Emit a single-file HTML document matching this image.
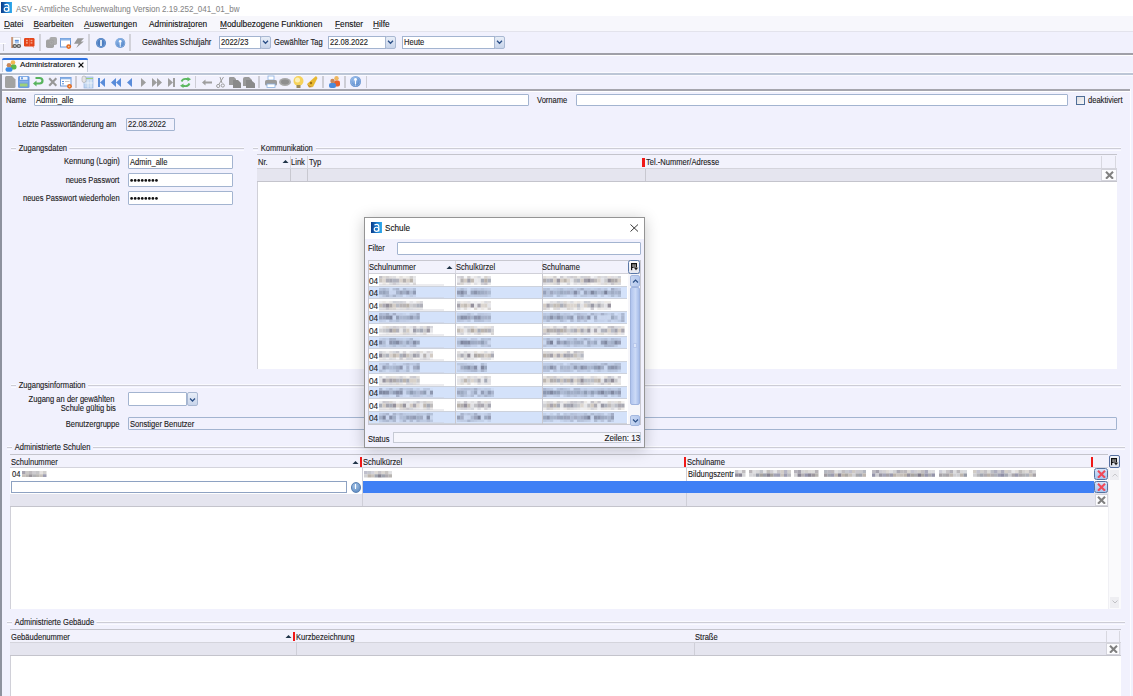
<!DOCTYPE html><html><head><meta charset="utf-8"><style>
html,body{margin:0;padding:0}
body{width:1133px;height:696px;overflow:hidden;position:relative;background:#F1F1FD;font-family:"Liberation Sans",sans-serif;font-size:7.6px;color:#1b1b1b}
.a{position:absolute;box-sizing:border-box}
.t{white-space:nowrap;font-size:8.5px;transform:scaleX(0.89);transform-origin:0 50%;-webkit-text-stroke-width:0.12px}
.r{transform-origin:100% 50%}
.n{transform:none}
.u{text-decoration:underline;text-decoration-color:#666;text-underline-offset:1.2px;text-decoration-thickness:0.8px}
</style></head><body>
<div class="a" style="left:0px;top:0px;width:1133px;height:16px;background:#fff"></div>
<svg class="a" style="left:1px;top:2.2px" width="11" height="11" viewBox="0 0 11 11"><defs><linearGradient id="ag1" x1="0" x2="1" y1="0" y2="0"><stop offset="0" stop-color="#0A3A88"/><stop offset="0.5" stop-color="#1878CC"/><stop offset="1" stop-color="#34AEEE"/></linearGradient></defs><rect width="11" height="11" fill="url(#ag1)"/><path d="M3.4 2.9 Q4.6 2.3 5.9 2.3 Q7.8 2.3 7.8 4.4 V9.6" stroke="#fff" stroke-width="1.15" fill="none"/><ellipse cx="5.5" cy="7.3" rx="2.25" ry="2.05" stroke="#fff" stroke-width="1.15" fill="none"/></svg>
<div class="a t" style="left:16px;top:1.4px;height:16px;line-height:16px;font-size:9.2px;color:#858585;transform:scaleX(0.875);-webkit-text-stroke-width:0.05px">ASV - Amtliche Schulverwaltung Version 2.19.252_041_01_bw</div>
<div class="a" style="left:0px;top:16px;width:1133px;height:15px;background:#F7F7FC"></div>
<div class="a" style="left:0px;top:31px;width:1133px;height:1px;background:#E3E3EC"></div>
<div class="a t" style="left:4px;top:17.2px;height:14px;line-height:14px;font-size:8.3px;color:#111;transform:none"><span class=u>D</span>atei</div>
<div class="a t" style="left:33.5px;top:17.2px;height:14px;line-height:14px;font-size:8.3px;color:#111;transform:none"><span class=u>B</span>earbeiten</div>
<div class="a t" style="left:84px;top:17.2px;height:14px;line-height:14px;font-size:8.3px;color:#111;transform:none"><span class=u>A</span>uswertungen</div>
<div class="a t" style="left:149px;top:17.2px;height:14px;line-height:14px;font-size:8.3px;color:#111;transform:none">Administra<span class=u>t</span>oren</div>
<div class="a t" style="left:220px;top:17.2px;height:14px;line-height:14px;font-size:8.3px;color:#111;transform:none"><span class=u>M</span>odulbezogene Funktionen</div>
<div class="a t" style="left:335px;top:17.2px;height:14px;line-height:14px;font-size:8.3px;color:#111;transform:none"><span class=u>F</span>enster</div>
<div class="a t" style="left:373px;top:17.2px;height:14px;line-height:14px;font-size:8.3px;color:#111;transform:none"><span class=u>H</span>ilfe</div>
<div class="a" style="left:0px;top:53.2px;width:1133px;height:1.6px;background:#A0A0A8"></div>
<div class="a" style="left:0px;top:54.8px;width:1133px;height:1.2px;background:#fff"></div>
<div class="a" style="left:39px;top:34px;width:2px;height:17px;background:#D2D2DA"></div>
<div class="a" style="left:88px;top:34px;width:2px;height:17px;background:#D2D2DA"></div>
<div class="a" style="left:129px;top:34px;width:2px;height:17px;background:#D2D2DA"></div>
<div class="a" style="left:0px;top:43px;width:6px;height:1px;background:#fff"></div>
<div class="a" style="left:3px;top:44px;width:1px;height:7px;background:#C8C8D0"></div>
<div class="a t" style="left:141.5px;top:36.2px;height:12px;line-height:12px;">Gewähltes Schuljahr</div>
<div class="a t" style="left:274px;top:36.2px;height:12px;line-height:12px;">Gewählter Tag</div>
<div class="a" style="left:218.5px;top:36px;width:42px;height:12.5px;background:#fff;border:1px solid #A3B4D0"></div>
<div class="a t" style="left:220.5px;top:36.2px;height:12.5px;line-height:12.5px;">2022/23</div>
<div class="a" style="left:259.5px;top:36px;width:11px;height:12.5px;background:linear-gradient(#E8EEF8,#C8D4EA);border:1px solid #A9B8D2;border-radius:2px"></div>
<svg class="a" style="left:261.5px;top:39px" width="7" height="6.5" viewBox="0 0 7 6"><path d="M1 1.5 L3.5 4 L6 1.5" stroke="#2b4f86" stroke-width="1.3" fill="none"/></svg>
<div class="a" style="left:328px;top:36px;width:58px;height:12.5px;background:#fff;border:1px solid #A3B4D0"></div>
<div class="a t" style="left:330px;top:36.2px;height:12.5px;line-height:12.5px;">22.08.2022</div>
<div class="a" style="left:385px;top:36px;width:11px;height:12.5px;background:linear-gradient(#E8EEF8,#C8D4EA);border:1px solid #A9B8D2;border-radius:2px"></div>
<svg class="a" style="left:387px;top:39px" width="7" height="6.5" viewBox="0 0 7 6"><path d="M1 1.5 L3.5 4 L6 1.5" stroke="#2b4f86" stroke-width="1.3" fill="none"/></svg>
<div class="a" style="left:401.5px;top:36px;width:93px;height:12.5px;background:#fff;border:1px solid #A3B4D0"></div>
<div class="a t" style="left:403.5px;top:36.2px;height:12.5px;line-height:12.5px;">Heute</div>
<div class="a" style="left:493.5px;top:36px;width:11px;height:12.5px;background:linear-gradient(#E8EEF8,#C8D4EA);border:1px solid #A9B8D2;border-radius:2px"></div>
<svg class="a" style="left:495.5px;top:39px" width="7" height="6.5" viewBox="0 0 7 6"><path d="M1 1.5 L3.5 4 L6 1.5" stroke="#2b4f86" stroke-width="1.3" fill="none"/></svg>
<div class="a" style="left:2px;top:58px;width:86px;height:16px;background:#FAFAFE;border:1px solid #C9D0DE;border-bottom:none;border-radius:3px 3px 0 0"></div>
<div class="a" style="left:2px;top:57.5px;width:86px;height:2px;background:#2F72E2;border-radius:3px 3px 0 0"></div>
<div class="a t" style="left:20px;top:58.2px;height:13px;line-height:13px;font-size:7.9px;color:#111;transform:none">Administratoren</div>
<svg class="a" style="left:77.8px;top:61.5px" width="6" height="6" viewBox="0 0 6 6"><path d="M0.6 0.6 L5.4 5.4 M5.4 0.6 L0.6 5.4" stroke="#111" stroke-width="1.3"/></svg>
<div class="a" style="left:0px;top:72px;width:1133px;height:1px;background:#FAFAFF"></div>
<div class="a" style="left:0px;top:73.1px;width:1133px;height:1.6px;background:#BCC6D6"></div>
<div class="a" style="left:0px;top:74.7px;width:1133px;height:1px;background:#FAFAFF"></div>
<div class="a" style="left:0px;top:89.1px;width:1130px;height:1.6px;background:#A6A6AE"></div>
<div class="a" style="left:0px;top:90.7px;width:1130px;height:1.3px;background:#fff"></div>
<div class="a" style="left:75px;top:76px;width:1.5px;height:12px;background:#CDCDD5"></div>
<div class="a" style="left:194.5px;top:76px;width:1.5px;height:12px;background:#CDCDD5"></div>
<div class="a" style="left:258px;top:76px;width:1.5px;height:12px;background:#CDCDD5"></div>
<div class="a" style="left:322px;top:76px;width:1.5px;height:12px;background:#CDCDD5"></div>
<div class="a" style="left:344px;top:76px;width:1.5px;height:12px;background:#CDCDD5"></div>
<div class="a" style="left:365.5px;top:76px;width:1.5px;height:12px;background:#CDCDD5"></div>
<div class="a" style="left:0px;top:74px;width:2px;height:622px;background:#8E929E"></div>
<div class="a" style="left:1129.5px;top:89px;width:1.2px;height:607px;background:#FCFCFF"></div>
<div class="a t" style="left:6px;top:94.2px;height:12px;line-height:12px;">Name</div>
<div class="a" style="left:34px;top:94px;width:494.5px;height:12px;background:#fff;border:1px solid #A3B4D0;border-radius:1px"></div>
<div class="a t" style="left:36px;top:94.2px;height:12px;line-height:12px;">Admin_alle</div>
<div class="a t" style="left:536.5px;top:94.2px;height:12px;line-height:12px;">Vorname</div>
<div class="a" style="left:576px;top:94px;width:491.5px;height:12px;background:#fff;border:1px solid #A3B4D0;border-radius:1px"></div>
<div class="a" style="left:1076px;top:96px;width:9px;height:9px;background:linear-gradient(135deg,#DCDCE0,#F6F6F8);border:1px solid #4F6E98"></div>
<div class="a t" style="left:1088px;top:94.2px;height:12px;line-height:12px;">deaktiviert</div>
<div class="a t" style="left:18px;top:118.2px;height:12px;line-height:12px;">Letzte Passwortänderung am</div>
<div class="a" style="left:125.5px;top:117.5px;width:49px;height:13px;background:#F1F1FD;border:1px solid #A3B4D0;border-radius:1px"></div>
<div class="a t" style="left:127.5px;top:117.7px;height:13px;line-height:13px;">22.08.2022</div>
<div class="a" style="left:11px;top:147.1px;width:233px;height:0.8px;background:#FAFAFF"></div>
<div class="a" style="left:11px;top:147.8px;width:233px;height:1.7px;background:#CDCDD5"></div>
<div class="a" style="left:11px;top:149.5px;width:233px;height:0.9px;background:#FAFAFF"></div>
<div class="a t" style="left:16px;top:142.4px;height:12px;line-height:12px;padding:0 3px;background:#F1F1FD">Zugangsdaten</div>
<div class="a" style="left:253px;top:147.1px;width:868px;height:0.8px;background:#FAFAFF"></div>
<div class="a" style="left:253px;top:147.8px;width:868px;height:1.7px;background:#CDCDD5"></div>
<div class="a" style="left:253px;top:149.5px;width:868px;height:0.9px;background:#FAFAFF"></div>
<div class="a t" style="left:257.5px;top:142.4px;height:12px;line-height:12px;padding:0 3px;background:#F1F1FD">Kommunikation</div>
<div class="a" style="left:11px;top:384.1px;width:1110px;height:0.8px;background:#FAFAFF"></div>
<div class="a" style="left:11px;top:384.8px;width:1110px;height:1.7px;background:#CDCDD5"></div>
<div class="a" style="left:11px;top:386.5px;width:1110px;height:0.9px;background:#FAFAFF"></div>
<div class="a t" style="left:16px;top:379.4px;height:12px;line-height:12px;padding:0 3px;background:#F1F1FD">Zugangsinformation</div>
<div class="a" style="left:6.5px;top:446.1px;width:1118.5px;height:0.8px;background:#FAFAFF"></div>
<div class="a" style="left:6.5px;top:446.8px;width:1118.5px;height:1.7px;background:#CDCDD5"></div>
<div class="a" style="left:6.5px;top:448.5px;width:1118.5px;height:0.9px;background:#FAFAFF"></div>
<div class="a t" style="left:11.5px;top:441.4px;height:12px;line-height:12px;padding:0 3px;background:#F1F1FD">Administrierte Schulen</div>
<div class="a" style="left:6.5px;top:621.1px;width:1118.5px;height:0.8px;background:#FAFAFF"></div>
<div class="a" style="left:6.5px;top:621.8px;width:1118.5px;height:1.7px;background:#CDCDD5"></div>
<div class="a" style="left:6.5px;top:623.5px;width:1118.5px;height:0.9px;background:#FAFAFF"></div>
<div class="a t" style="left:11.5px;top:616.4px;height:12px;line-height:12px;padding:0 3px;background:#F1F1FD">Administrierte Gebäude</div>
<div class="a t r" style="right:1013.5px;top:155.2px;height:13px;line-height:13px;text-align:right;">Kennung (Login)</div>
<div class="a" style="left:128px;top:154.5px;width:105px;height:14px;background:#fff;border:1px solid #A3B4D0;border-radius:1px"></div>
<div class="a t" style="left:130px;top:154.7px;height:14px;line-height:14px;">Admin_alle</div>
<div class="a t r" style="right:1013.5px;top:174.2px;height:13px;line-height:13px;text-align:right;">neues Passwort</div>
<div class="a" style="left:128px;top:173px;width:105px;height:13.5px;background:#fff;border:1px solid #A3B4D0;border-radius:1px"></div>
<svg class="a" style="left:130px;top:178px" width="30" height="5" viewBox="0 0 30 5"><circle cx="1.6" cy="2.4" r="1.35" fill="#111"/><circle cx="5.15" cy="2.4" r="1.35" fill="#111"/><circle cx="8.7" cy="2.4" r="1.35" fill="#111"/><circle cx="12.249999999999998" cy="2.4" r="1.35" fill="#111"/><circle cx="15.799999999999999" cy="2.4" r="1.35" fill="#111"/><circle cx="19.35" cy="2.4" r="1.35" fill="#111"/><circle cx="22.9" cy="2.4" r="1.35" fill="#111"/><circle cx="26.45" cy="2.4" r="1.35" fill="#111"/></svg>
<div class="a t r" style="right:1013.5px;top:192.2px;height:13px;line-height:13px;text-align:right;">neues Passwort wiederholen</div>
<div class="a" style="left:128px;top:191.3px;width:105px;height:13.3px;background:#fff;border:1px solid #A3B4D0;border-radius:1px"></div>
<svg class="a" style="left:130px;top:196px" width="30" height="5" viewBox="0 0 30 5"><circle cx="1.6" cy="2.4" r="1.35" fill="#111"/><circle cx="5.15" cy="2.4" r="1.35" fill="#111"/><circle cx="8.7" cy="2.4" r="1.35" fill="#111"/><circle cx="12.249999999999998" cy="2.4" r="1.35" fill="#111"/><circle cx="15.799999999999999" cy="2.4" r="1.35" fill="#111"/><circle cx="19.35" cy="2.4" r="1.35" fill="#111"/><circle cx="22.9" cy="2.4" r="1.35" fill="#111"/><circle cx="26.45" cy="2.4" r="1.35" fill="#111"/></svg>
<div class="a" style="left:257px;top:154px;width:860px;height:215px;background:#fff;border-left:1px solid #D0D0D8"></div>
<div class="a" style="left:257px;top:154px;width:860px;height:1px;background:#C4C4CC"></div>
<div class="a" style="left:257px;top:155px;width:860px;height:13px;background:#F2F2FC"></div>
<div class="a" style="left:257px;top:168px;width:860px;height:1px;background:#D4D4DC"></div>
<div class="a" style="left:257px;top:169px;width:860px;height:12px;background:#E5E5EF"></div>
<div class="a" style="left:257px;top:181px;width:860px;height:1px;background:#C4C4CC"></div>
<div class="a t" style="left:257.5px;top:155.9px;height:13px;line-height:13px;">Nr.</div>
<svg class="a" style="left:282px;top:159px" width="7" height="5" viewBox="0 0 7 5"><path d="M0.5 4 L3.5 1 L6.5 4Z" fill="#1f3347"/></svg>
<div class="a" style="left:290px;top:156px;width:1px;height:12px;background:#D8D8E0"></div>
<div class="a" style="left:290px;top:169px;width:1px;height:12px;background:#C8C8D0"></div>
<div class="a t" style="left:291px;top:155.9px;height:13px;line-height:13px;">Link</div>
<div class="a" style="left:307px;top:156px;width:1px;height:12px;background:#D8D8E0"></div>
<div class="a" style="left:307px;top:169px;width:1px;height:12px;background:#C8C8D0"></div>
<div class="a t" style="left:309px;top:155.9px;height:13px;line-height:13px;">Typ</div>
<div class="a" style="left:642px;top:157.5px;width:2.5px;height:9.5px;background:#F01818"></div>
<div class="a" style="left:645px;top:169px;width:1px;height:12px;background:#C8C8D0"></div>
<div class="a t" style="left:646px;top:155.9px;height:13px;line-height:13px;">Tel.-Nummer/Adresse</div>
<div class="a" style="left:1101px;top:156px;width:1px;height:12px;background:#D8D8E0"></div>
<div class="a" style="left:1115px;top:156px;width:1px;height:12px;background:#D8D8E0"></div>
<div class="a" style="left:1101px;top:169px;width:16px;height:12px;background:#FCFCFE;border:1px solid #D4D4DC"></div>
<svg class="a" style="left:1104.5px;top:170.75px" width="9" height="8.5" viewBox="0 0 9 8.5"><path d="M1 0.8 L8 7.7 M8 0.8 L1 7.7" stroke="#808080" stroke-width="2.1"/></svg>
<div class="a t r" style="right:1019px;top:392.7px;height:12px;line-height:12px;text-align:right;">Zugang an der gewählten</div>
<div class="a t r" style="right:1017px;top:401.7px;height:12px;line-height:12px;text-align:right;">Schule gültig bis</div>
<div class="a" style="left:128.4px;top:392px;width:59px;height:14px;background:#fff;border:1px solid #A3B4D0;border-radius:1px"></div>
<div class="a" style="left:187px;top:392px;width:11px;height:14px;background:linear-gradient(#E8EEF8,#C8D4EA);border:1px solid #A9B8D2;border-radius:2px"></div>
<svg class="a" style="left:188.8px;top:397px" width="7" height="6" viewBox="0 0 7 6"><path d="M1 1.5 L3.5 4 L6 1.5" stroke="#2b4f86" stroke-width="1.3" fill="none"/></svg>
<div class="a t r" style="right:1013.5px;top:418.2px;height:12.5px;line-height:12.5px;text-align:right;">Benutzergruppe</div>
<div class="a" style="left:128.4px;top:417px;width:988.5px;height:12.5px;background:#F1F1FD;border:1px solid #A3B4D0;border-radius:1px"></div>
<div class="a t" style="left:130.4px;top:417.8px;height:12.5px;line-height:12.5px;">Sonstiger Benutzer</div>
<div class="a" style="left:10px;top:454px;width:1098px;height:155px;background:#fff;border-left:1px solid #D0D0D8"></div>
<div class="a" style="left:10px;top:454px;width:1098px;height:1px;background:#C4C4CC"></div>
<div class="a" style="left:10px;top:455px;width:1098px;height:12px;background:#F2F2FC"></div>
<div class="a" style="left:10px;top:467px;width:1098px;height:1px;background:#D4D4DC"></div>
<div class="a" style="left:10px;top:468px;width:1098px;height:38px;background:#E5E5EF"></div>
<div class="a" style="left:10px;top:506px;width:1098px;height:1px;background:#C4C4CC"></div>
<div class="a" style="left:10px;top:468px;width:1098px;height:12.5px;background:#fff"></div>
<div class="a" style="left:10px;top:480.5px;width:353px;height:13px;background:#fff"></div>
<div class="a" style="left:1108px;top:468px;width:13px;height:141px;background:#FAFAFC;border-left:1px solid #F0F0F4"></div>
<div class="a t" style="left:11px;top:455.9px;height:12px;line-height:12px;">Schulnummer</div>
<svg class="a" style="left:351.5px;top:459.5px" width="7" height="5" viewBox="0 0 7 5"><path d="M0.5 4 L3.5 1 L6.5 4Z" fill="#1f3347"/></svg>
<div class="a" style="left:360px;top:457px;width:2.2px;height:9.5px;background:#F01818"></div>
<div class="a t" style="left:363px;top:455.9px;height:12px;line-height:12px;">Schulkürzel</div>
<div class="a" style="left:684px;top:457px;width:2.2px;height:9.5px;background:#F01818"></div>
<div class="a t" style="left:687px;top:455.9px;height:12px;line-height:12px;">Schulname</div>
<div class="a" style="left:1091px;top:457px;width:2px;height:9.5px;background:#F01818"></div>
<div class="a t" style="left:12px;top:468.2px;height:12px;line-height:12px;">04</div>
<div class="a t" style="left:687.5px;top:468.2px;height:12px;line-height:12px;">Bildungszentr</div>
<svg class="a" style="left:22px;top:470.5px" width="24.5" height="6.5" viewBox="0 0 24.5 6.5"><rect x="0.0" y="0.00" width="3.5" height="3.25" fill="#7C7888" opacity="0.68"/><rect x="3.5" y="0.00" width="3.5" height="3.25" fill="#A4A09C" opacity="0.58"/><rect x="7.0" y="0.00" width="3.5" height="3.25" fill="#99949A" opacity="0.64"/><rect x="10.5" y="0.00" width="3.5" height="3.25" fill="#99949A" opacity="0.48"/><rect x="14.0" y="0.00" width="3.5" height="3.25" fill="#A8A8AC" opacity="0.67"/><rect x="17.5" y="0.00" width="3.5" height="3.25" fill="#B8B0A8" opacity="0.36"/><rect x="21.0" y="0.00" width="3.5" height="3.25" fill="#A4A09C" opacity="0.50"/><rect x="0.0" y="3.25" width="3.5" height="3.25" fill="#B8B0A8" opacity="0.77"/><rect x="3.5" y="3.25" width="3.5" height="3.25" fill="#A4A09C" opacity="0.76"/><rect x="7.0" y="3.25" width="3.5" height="3.25" fill="#99949A" opacity="0.99"/><rect x="10.5" y="3.25" width="3.5" height="3.25" fill="#A8A8AC" opacity="0.89"/><rect x="14.0" y="3.25" width="3.5" height="3.25" fill="#A4A09C" opacity="0.76"/><rect x="17.5" y="3.25" width="3.5" height="3.25" fill="#B8B0A8" opacity="0.76"/><rect x="21.0" y="3.25" width="3.5" height="3.25" fill="#8888A0" opacity="0.82"/></svg>
<svg class="a" style="left:364px;top:471px" width="28.0" height="6.5" viewBox="0 0 28.0 6.5"><rect x="0.0" y="0.00" width="3.5" height="3.25" fill="#8888A0" opacity="0.54"/><rect x="3.5" y="0.00" width="3.5" height="3.25" fill="#9498A4" opacity="0.55"/><rect x="7.0" y="0.00" width="3.5" height="3.25" fill="#8888A0" opacity="0.39"/><rect x="10.5" y="0.00" width="3.5" height="3.25" fill="#B8B0A8" opacity="0.48"/><rect x="14.0" y="0.00" width="3.5" height="3.25" fill="#99949A" opacity="0.55"/><rect x="17.5" y="0.00" width="3.5" height="3.25" fill="#B8B0A8" opacity="0.52"/><rect x="21.0" y="0.00" width="3.5" height="3.25" fill="#A4A09C" opacity="0.62"/><rect x="24.5" y="0.00" width="3.5" height="3.25" fill="#C8C8CC" opacity="0.55"/><rect x="0.0" y="3.25" width="3.5" height="3.25" fill="#C8C8CC" opacity="0.84"/><rect x="3.5" y="3.25" width="3.5" height="3.25" fill="#B8B0A8" opacity="0.95"/><rect x="7.0" y="3.25" width="3.5" height="3.25" fill="#B8B0A8" opacity="0.77"/><rect x="10.5" y="3.25" width="3.5" height="3.25" fill="#9498A4" opacity="0.88"/><rect x="14.0" y="3.25" width="3.5" height="3.25" fill="#7C7888" opacity="0.93"/><rect x="17.5" y="3.25" width="3.5" height="3.25" fill="#9498A4" opacity="0.90"/><rect x="21.0" y="3.25" width="3.5" height="3.25" fill="#99949A" opacity="0.78"/><rect x="24.5" y="3.25" width="3.5" height="3.25" fill="#A4A09C" opacity="0.79"/></svg>
<svg class="a" style="left:735px;top:470px" width="10.5" height="6.8" viewBox="0 0 10.5 6.8"><rect x="0.0" y="0.00" width="3.5" height="3.40" fill="#7C7888" opacity="0.40"/><rect x="3.5" y="0.00" width="3.5" height="3.40" fill="#C8C8CC" opacity="0.50"/><rect x="7.0" y="0.00" width="3.5" height="3.40" fill="#99949A" opacity="0.62"/><rect x="0.0" y="3.40" width="3.5" height="3.40" fill="#7C7888" opacity="0.84"/><rect x="3.5" y="3.40" width="3.5" height="3.40" fill="#7C7888" opacity="0.90"/><rect x="7.0" y="3.40" width="3.5" height="3.40" fill="#C8C8CC" opacity="0.77"/></svg>
<svg class="a" style="left:749px;top:470px" width="42.0" height="6.8" viewBox="0 0 42.0 6.8"><rect x="0.0" y="0.00" width="3.5" height="3.40" fill="#99949A" opacity="0.68"/><rect x="3.5" y="0.00" width="3.5" height="3.40" fill="#C8C8CC" opacity="0.59"/><rect x="7.0" y="0.00" width="3.5" height="3.40" fill="#99949A" opacity="0.37"/><rect x="10.5" y="0.00" width="3.5" height="3.40" fill="#9498A4" opacity="0.58"/><rect x="14.0" y="0.00" width="3.5" height="3.40" fill="#C8C8CC" opacity="0.45"/><rect x="17.5" y="0.00" width="3.5" height="3.40" fill="#A4A09C" opacity="0.66"/><rect x="21.0" y="0.00" width="3.5" height="3.40" fill="#7C7888" opacity="0.36"/><rect x="24.5" y="0.00" width="3.5" height="3.40" fill="#C8C8CC" opacity="0.47"/><rect x="28.0" y="0.00" width="3.5" height="3.40" fill="#99949A" opacity="0.52"/><rect x="31.5" y="0.00" width="3.5" height="3.40" fill="#B8B0A8" opacity="0.62"/><rect x="35.0" y="0.00" width="3.5" height="3.40" fill="#8888A0" opacity="0.61"/><rect x="38.5" y="0.00" width="3.5" height="3.40" fill="#A4A09C" opacity="0.49"/><rect x="0.0" y="3.40" width="3.5" height="3.40" fill="#C8C8CC" opacity="0.77"/><rect x="3.5" y="3.40" width="3.5" height="3.40" fill="#C8C8CC" opacity="0.85"/><rect x="7.0" y="3.40" width="3.5" height="3.40" fill="#9498A4" opacity="0.97"/><rect x="10.5" y="3.40" width="3.5" height="3.40" fill="#A4A09C" opacity="0.97"/><rect x="14.0" y="3.40" width="3.5" height="3.40" fill="#9498A4" opacity="0.93"/><rect x="17.5" y="3.40" width="3.5" height="3.40" fill="#7C7888" opacity="0.92"/><rect x="21.0" y="3.40" width="3.5" height="3.40" fill="#A4A09C" opacity="0.99"/><rect x="24.5" y="3.40" width="3.5" height="3.40" fill="#8888A0" opacity="0.77"/><rect x="28.0" y="3.40" width="3.5" height="3.40" fill="#8888A0" opacity="0.81"/><rect x="31.5" y="3.40" width="3.5" height="3.40" fill="#B8B0A8" opacity="0.75"/><rect x="35.0" y="3.40" width="3.5" height="3.40" fill="#8888A0" opacity="0.82"/><rect x="38.5" y="3.40" width="3.5" height="3.40" fill="#A8A8AC" opacity="0.79"/></svg>
<svg class="a" style="left:794px;top:470px" width="24.5" height="6.8" viewBox="0 0 24.5 6.8"><rect x="0.0" y="0.00" width="3.5" height="3.40" fill="#7C7888" opacity="0.56"/><rect x="3.5" y="0.00" width="3.5" height="3.40" fill="#7C7888" opacity="0.68"/><rect x="7.0" y="0.00" width="3.5" height="3.40" fill="#A8A8AC" opacity="0.51"/><rect x="10.5" y="0.00" width="3.5" height="3.40" fill="#A4A09C" opacity="0.49"/><rect x="14.0" y="0.00" width="3.5" height="3.40" fill="#A4A09C" opacity="0.39"/><rect x="17.5" y="0.00" width="3.5" height="3.40" fill="#A4A09C" opacity="0.37"/><rect x="21.0" y="0.00" width="3.5" height="3.40" fill="#99949A" opacity="0.69"/><rect x="0.0" y="3.40" width="3.5" height="3.40" fill="#C8C8CC" opacity="0.79"/><rect x="3.5" y="3.40" width="3.5" height="3.40" fill="#7C7888" opacity="0.90"/><rect x="7.0" y="3.40" width="3.5" height="3.40" fill="#99949A" opacity="0.75"/><rect x="10.5" y="3.40" width="3.5" height="3.40" fill="#8888A0" opacity="0.88"/><rect x="14.0" y="3.40" width="3.5" height="3.40" fill="#7C7888" opacity="0.90"/><rect x="17.5" y="3.40" width="3.5" height="3.40" fill="#99949A" opacity="0.97"/><rect x="21.0" y="3.40" width="3.5" height="3.40" fill="#A4A09C" opacity="0.79"/></svg>
<svg class="a" style="left:824px;top:470px" width="42.0" height="6.8" viewBox="0 0 42.0 6.8"><rect x="0.0" y="0.00" width="3.5" height="3.40" fill="#9498A4" opacity="0.68"/><rect x="3.5" y="0.00" width="3.5" height="3.40" fill="#7C7888" opacity="0.52"/><rect x="7.0" y="0.00" width="3.5" height="3.40" fill="#99949A" opacity="0.65"/><rect x="10.5" y="0.00" width="3.5" height="3.40" fill="#C8C8CC" opacity="0.52"/><rect x="14.0" y="0.00" width="3.5" height="3.40" fill="#9498A4" opacity="0.38"/><rect x="17.5" y="0.00" width="3.5" height="3.40" fill="#99949A" opacity="0.61"/><rect x="21.0" y="0.00" width="3.5" height="3.40" fill="#9498A4" opacity="0.52"/><rect x="24.5" y="0.00" width="3.5" height="3.40" fill="#8888A0" opacity="0.53"/><rect x="28.0" y="0.00" width="3.5" height="3.40" fill="#B8B0A8" opacity="0.68"/><rect x="31.5" y="0.00" width="3.5" height="3.40" fill="#7C7888" opacity="0.40"/><rect x="35.0" y="0.00" width="3.5" height="3.40" fill="#A8A8AC" opacity="0.62"/><rect x="38.5" y="0.00" width="3.5" height="3.40" fill="#9498A4" opacity="0.69"/><rect x="0.0" y="3.40" width="3.5" height="3.40" fill="#99949A" opacity="0.92"/><rect x="3.5" y="3.40" width="3.5" height="3.40" fill="#9498A4" opacity="0.88"/><rect x="7.0" y="3.40" width="3.5" height="3.40" fill="#8888A0" opacity="0.84"/><rect x="10.5" y="3.40" width="3.5" height="3.40" fill="#B8B0A8" opacity="0.88"/><rect x="14.0" y="3.40" width="3.5" height="3.40" fill="#7C7888" opacity="0.91"/><rect x="17.5" y="3.40" width="3.5" height="3.40" fill="#B8B0A8" opacity="0.95"/><rect x="21.0" y="3.40" width="3.5" height="3.40" fill="#A4A09C" opacity="0.93"/><rect x="24.5" y="3.40" width="3.5" height="3.40" fill="#B8B0A8" opacity="0.80"/><rect x="28.0" y="3.40" width="3.5" height="3.40" fill="#C8C8CC" opacity="0.84"/><rect x="31.5" y="3.40" width="3.5" height="3.40" fill="#A8A8AC" opacity="1.00"/><rect x="35.0" y="3.40" width="3.5" height="3.40" fill="#9498A4" opacity="0.87"/><rect x="38.5" y="3.40" width="3.5" height="3.40" fill="#B8B0A8" opacity="0.92"/></svg>
<svg class="a" style="left:872px;top:470px" width="63.0" height="6.8" viewBox="0 0 63.0 6.8"><rect x="0.0" y="0.00" width="3.5" height="3.40" fill="#7C7888" opacity="0.51"/><rect x="3.5" y="0.00" width="3.5" height="3.40" fill="#7C7888" opacity="0.68"/><rect x="7.0" y="0.00" width="3.5" height="3.40" fill="#7C7888" opacity="0.38"/><rect x="10.5" y="0.00" width="3.5" height="3.40" fill="#99949A" opacity="0.43"/><rect x="14.0" y="0.00" width="3.5" height="3.40" fill="#B8B0A8" opacity="0.47"/><rect x="17.5" y="0.00" width="3.5" height="3.40" fill="#C8C8CC" opacity="0.57"/><rect x="21.0" y="0.00" width="3.5" height="3.40" fill="#A8A8AC" opacity="0.52"/><rect x="24.5" y="0.00" width="3.5" height="3.40" fill="#7C7888" opacity="0.63"/><rect x="28.0" y="0.00" width="3.5" height="3.40" fill="#99949A" opacity="0.64"/><rect x="31.5" y="0.00" width="3.5" height="3.40" fill="#99949A" opacity="0.67"/><rect x="35.0" y="0.00" width="3.5" height="3.40" fill="#B8B0A8" opacity="0.52"/><rect x="38.5" y="0.00" width="3.5" height="3.40" fill="#8888A0" opacity="0.50"/><rect x="42.0" y="0.00" width="3.5" height="3.40" fill="#7C7888" opacity="0.38"/><rect x="45.5" y="0.00" width="3.5" height="3.40" fill="#A4A09C" opacity="0.51"/><rect x="49.0" y="0.00" width="3.5" height="3.40" fill="#99949A" opacity="0.60"/><rect x="52.5" y="0.00" width="3.5" height="3.40" fill="#8888A0" opacity="0.70"/><rect x="56.0" y="0.00" width="3.5" height="3.40" fill="#A8A8AC" opacity="0.40"/><rect x="59.5" y="0.00" width="3.5" height="3.40" fill="#C8C8CC" opacity="0.63"/><rect x="0.0" y="3.40" width="3.5" height="3.40" fill="#8888A0" opacity="0.90"/><rect x="3.5" y="3.40" width="3.5" height="3.40" fill="#C8C8CC" opacity="0.91"/><rect x="7.0" y="3.40" width="3.5" height="3.40" fill="#7C7888" opacity="0.79"/><rect x="10.5" y="3.40" width="3.5" height="3.40" fill="#8888A0" opacity="0.76"/><rect x="14.0" y="3.40" width="3.5" height="3.40" fill="#99949A" opacity="0.88"/><rect x="17.5" y="3.40" width="3.5" height="3.40" fill="#8888A0" opacity="0.86"/><rect x="21.0" y="3.40" width="3.5" height="3.40" fill="#B8B0A8" opacity="0.96"/><rect x="24.5" y="3.40" width="3.5" height="3.40" fill="#B8B0A8" opacity="0.76"/><rect x="28.0" y="3.40" width="3.5" height="3.40" fill="#B8B0A8" opacity="0.82"/><rect x="31.5" y="3.40" width="3.5" height="3.40" fill="#B8B0A8" opacity="0.94"/><rect x="35.0" y="3.40" width="3.5" height="3.40" fill="#7C7888" opacity="0.81"/><rect x="38.5" y="3.40" width="3.5" height="3.40" fill="#A4A09C" opacity="0.96"/><rect x="42.0" y="3.40" width="3.5" height="3.40" fill="#A8A8AC" opacity="0.98"/><rect x="45.5" y="3.40" width="3.5" height="3.40" fill="#7C7888" opacity="0.97"/><rect x="49.0" y="3.40" width="3.5" height="3.40" fill="#A4A09C" opacity="0.96"/><rect x="52.5" y="3.40" width="3.5" height="3.40" fill="#8888A0" opacity="0.88"/><rect x="56.0" y="3.40" width="3.5" height="3.40" fill="#A8A8AC" opacity="0.97"/><rect x="59.5" y="3.40" width="3.5" height="3.40" fill="#8888A0" opacity="0.90"/></svg>
<svg class="a" style="left:939px;top:470px" width="28.0" height="6.8" viewBox="0 0 28.0 6.8"><rect x="0.0" y="0.00" width="3.5" height="3.40" fill="#8888A0" opacity="0.41"/><rect x="3.5" y="0.00" width="3.5" height="3.40" fill="#C8C8CC" opacity="0.57"/><rect x="7.0" y="0.00" width="3.5" height="3.40" fill="#99949A" opacity="0.54"/><rect x="10.5" y="0.00" width="3.5" height="3.40" fill="#7C7888" opacity="0.59"/><rect x="14.0" y="0.00" width="3.5" height="3.40" fill="#C8C8CC" opacity="0.62"/><rect x="17.5" y="0.00" width="3.5" height="3.40" fill="#99949A" opacity="0.66"/><rect x="21.0" y="0.00" width="3.5" height="3.40" fill="#A8A8AC" opacity="0.44"/><rect x="24.5" y="0.00" width="3.5" height="3.40" fill="#9498A4" opacity="0.36"/><rect x="0.0" y="3.40" width="3.5" height="3.40" fill="#99949A" opacity="0.88"/><rect x="3.5" y="3.40" width="3.5" height="3.40" fill="#A8A8AC" opacity="0.94"/><rect x="7.0" y="3.40" width="3.5" height="3.40" fill="#99949A" opacity="0.86"/><rect x="10.5" y="3.40" width="3.5" height="3.40" fill="#B8B0A8" opacity="0.92"/><rect x="14.0" y="3.40" width="3.5" height="3.40" fill="#C8C8CC" opacity="0.88"/><rect x="17.5" y="3.40" width="3.5" height="3.40" fill="#C8C8CC" opacity="0.88"/><rect x="21.0" y="3.40" width="3.5" height="3.40" fill="#B8B0A8" opacity="0.92"/><rect x="24.5" y="3.40" width="3.5" height="3.40" fill="#9498A4" opacity="0.98"/></svg>
<svg class="a" style="left:973px;top:470px" width="63.0" height="6.8" viewBox="0 0 63.0 6.8"><rect x="0.0" y="0.00" width="3.5" height="3.40" fill="#B8B0A8" opacity="0.64"/><rect x="3.5" y="0.00" width="3.5" height="3.40" fill="#8888A0" opacity="0.50"/><rect x="7.0" y="0.00" width="3.5" height="3.40" fill="#A4A09C" opacity="0.50"/><rect x="10.5" y="0.00" width="3.5" height="3.40" fill="#99949A" opacity="0.58"/><rect x="14.0" y="0.00" width="3.5" height="3.40" fill="#A4A09C" opacity="0.38"/><rect x="17.5" y="0.00" width="3.5" height="3.40" fill="#9498A4" opacity="0.62"/><rect x="21.0" y="0.00" width="3.5" height="3.40" fill="#8888A0" opacity="0.68"/><rect x="24.5" y="0.00" width="3.5" height="3.40" fill="#7C7888" opacity="0.40"/><rect x="28.0" y="0.00" width="3.5" height="3.40" fill="#8888A0" opacity="0.69"/><rect x="31.5" y="0.00" width="3.5" height="3.40" fill="#B8B0A8" opacity="0.61"/><rect x="35.0" y="0.00" width="3.5" height="3.40" fill="#99949A" opacity="0.49"/><rect x="38.5" y="0.00" width="3.5" height="3.40" fill="#C8C8CC" opacity="0.41"/><rect x="42.0" y="0.00" width="3.5" height="3.40" fill="#B8B0A8" opacity="0.41"/><rect x="45.5" y="0.00" width="3.5" height="3.40" fill="#A4A09C" opacity="0.70"/><rect x="49.0" y="0.00" width="3.5" height="3.40" fill="#A4A09C" opacity="0.47"/><rect x="52.5" y="0.00" width="3.5" height="3.40" fill="#B8B0A8" opacity="0.47"/><rect x="56.0" y="0.00" width="3.5" height="3.40" fill="#99949A" opacity="0.60"/><rect x="59.5" y="0.00" width="3.5" height="3.40" fill="#A8A8AC" opacity="0.47"/><rect x="0.0" y="3.40" width="3.5" height="3.40" fill="#C8C8CC" opacity="0.86"/><rect x="3.5" y="3.40" width="3.5" height="3.40" fill="#A8A8AC" opacity="0.85"/><rect x="7.0" y="3.40" width="3.5" height="3.40" fill="#9498A4" opacity="0.88"/><rect x="10.5" y="3.40" width="3.5" height="3.40" fill="#99949A" opacity="0.78"/><rect x="14.0" y="3.40" width="3.5" height="3.40" fill="#B8B0A8" opacity="0.99"/><rect x="17.5" y="3.40" width="3.5" height="3.40" fill="#99949A" opacity="0.77"/><rect x="21.0" y="3.40" width="3.5" height="3.40" fill="#9498A4" opacity="0.76"/><rect x="24.5" y="3.40" width="3.5" height="3.40" fill="#8888A0" opacity="0.82"/><rect x="28.0" y="3.40" width="3.5" height="3.40" fill="#8888A0" opacity="0.95"/><rect x="31.5" y="3.40" width="3.5" height="3.40" fill="#9498A4" opacity="0.85"/><rect x="35.0" y="3.40" width="3.5" height="3.40" fill="#C8C8CC" opacity="0.93"/><rect x="38.5" y="3.40" width="3.5" height="3.40" fill="#99949A" opacity="0.82"/><rect x="42.0" y="3.40" width="3.5" height="3.40" fill="#8888A0" opacity="0.86"/><rect x="45.5" y="3.40" width="3.5" height="3.40" fill="#99949A" opacity="0.82"/><rect x="49.0" y="3.40" width="3.5" height="3.40" fill="#A8A8AC" opacity="0.91"/><rect x="52.5" y="3.40" width="3.5" height="3.40" fill="#9498A4" opacity="0.77"/><rect x="56.0" y="3.40" width="3.5" height="3.40" fill="#B8B0A8" opacity="0.77"/><rect x="59.5" y="3.40" width="3.5" height="3.40" fill="#99949A" opacity="0.86"/></svg>
<div class="a" style="left:362px;top:468px;width:1px;height:38px;background:#CFCFD8"></div>
<div class="a" style="left:686px;top:468px;width:1px;height:38px;background:#CFCFD8"></div>
<div class="a" style="left:363px;top:481px;width:731px;height:12px;background:#3F80F5"></div>
<div class="a" style="left:11px;top:481px;width:336px;height:12px;background:#fff;border:1px solid #8EA2C2"></div>
<div class="a" style="left:350.5px;top:482px;width:10.5px;height:10.5px;border-radius:50%;background:radial-gradient(circle at 40% 35%,#A9C7EA,#4C7DB8);border:0.5px solid #5B82B5"></div>
<div class="a" style="left:355.3px;top:484px;width:1.2px;height:5px;background:#fff"></div>
<div class="a" style="left:1094.2px;top:468.3px;width:13.8px;height:11.5px;background:linear-gradient(#D4E4FA,#A8C4EE);border:1.2px solid #5573A0;border-radius:2.5px"></div>
<svg class="a" style="left:1096.6000000000001px;top:469.90000000000003px" width="9" height="8.5" viewBox="0 0 9 8.5"><path d="M1 0.8 L8 7.7 M8 0.8 L1 7.7" stroke="#F04A5A" stroke-width="2.1"/></svg>
<div class="a" style="left:1094.2px;top:481.3px;width:13.8px;height:11.5px;background:linear-gradient(#D4E4FA,#A8C4EE);border:1.2px solid #5573A0;border-radius:2.5px"></div>
<svg class="a" style="left:1096.6000000000001px;top:482.90000000000003px" width="9" height="8.5" viewBox="0 0 9 8.5"><path d="M1 0.8 L8 7.7 M8 0.8 L1 7.7" stroke="#F04A5A" stroke-width="2.1"/></svg>
<div class="a" style="left:1095px;top:494px;width:13px;height:12px;background:#FCFCFE;border:1px solid #D4D4DC"></div>
<svg class="a" style="left:1097.0px;top:495.75px" width="9" height="8.5" viewBox="0 0 9 8.5"><path d="M1 0.8 L8 7.7 M8 0.8 L1 7.7" stroke="#808080" stroke-width="2.1"/></svg>
<div class="a" style="left:1108.5px;top:454.5px;width:11px;height:13.5px;background:linear-gradient(#F4F6FA,#DCE2EE);border:1px solid #5670A0;border-radius:2px"></div>
<svg class="a" style="left:1111px;top:457.5px" width="8" height="8" viewBox="0 0 8 8"><rect x="0" y="0" width="6" height="5" fill="#111"/><rect x="1.6" y="1.2" width="0.9" height="2.8" fill="#fff"/><rect x="3.6" y="1.2" width="0.9" height="2.8" fill="#fff"/><rect x="0" y="5" width="1.2" height="2.2" fill="#111"/><path d="M2.5 4.6 H7.5 L5 7.6Z" fill="#111" stroke="#fff" stroke-width="0.4"/></svg>
<div class="a" style="left:1110px;top:470px;width:9px;height:10px;background:#EEEEF2"></div>
<svg class="a" style="left:1111.5px;top:473px" width="6" height="4" viewBox="0 0 6 4"><path d="M0.5 3.5 L3 1 L5.5 3.5" stroke="#C8C8CC" stroke-width="1" fill="none"/></svg>
<div class="a" style="left:1110px;top:597px;width:9px;height:10.5px;background:#EEEEF2"></div>
<svg class="a" style="left:1111.5px;top:600px" width="6" height="4" viewBox="0 0 6 4"><path d="M0.5 0.5 L3 3 L5.5 0.5" stroke="#C0C0C4" stroke-width="1" fill="none"/></svg>
<div class="a" style="left:10px;top:629px;width:1111px;height:67px;background:#fff;border-left:1px solid #D0D0D8"></div>
<div class="a" style="left:10px;top:629px;width:1111px;height:1px;background:#C4C4CC"></div>
<div class="a" style="left:10px;top:630px;width:1111px;height:12px;background:#F2F2FC"></div>
<div class="a" style="left:10px;top:642px;width:1111px;height:1px;background:#D4D4DC"></div>
<div class="a" style="left:10px;top:643px;width:1111px;height:12px;background:#E5E5EF"></div>
<div class="a" style="left:10px;top:655px;width:1111px;height:1px;background:#C4C4CC"></div>
<div class="a t" style="left:11px;top:630.9px;height:12px;line-height:12px;">Gebäudenummer</div>
<svg class="a" style="left:285px;top:633.5px" width="7" height="5" viewBox="0 0 7 5"><path d="M0.5 4 L3.5 1 L6.5 4Z" fill="#1f3347"/></svg>
<div class="a" style="left:293px;top:631.7px;width:2.2px;height:9px;background:#F01818"></div>
<div class="a t" style="left:296px;top:630.9px;height:12px;line-height:12px;">Kurzbezeichnung</div>
<div class="a" style="left:296.2px;top:643px;width:1px;height:12px;background:#CFCFD8"></div>
<div class="a t" style="left:695px;top:630.9px;height:12px;line-height:12px;">Straße</div>
<div class="a" style="left:694px;top:643px;width:1px;height:12px;background:#CFCFD8"></div>
<div class="a" style="left:1105.5px;top:631px;width:1px;height:11px;background:#D8D8E0"></div>
<div class="a" style="left:1119px;top:631px;width:1px;height:11px;background:#D8D8E0"></div>
<div class="a" style="left:1106px;top:643px;width:14px;height:12px;background:#FCFCFE;border:1px solid #D4D4DC"></div>
<svg class="a" style="left:1108.5px;top:644.75px" width="9" height="8.5" viewBox="0 0 9 8.5"><path d="M1 0.8 L8 7.7 M8 0.8 L1 7.7" stroke="#808080" stroke-width="2.1"/></svg>
<svg class="a" style="left:11px;top:37px;overflow:visible" width="10" height="11" viewBox="0 0 10 11"><rect x="0.3" y="0" width="1.8" height="11" fill="#C8845A"/><rect x="2" y="0.3" width="7.6" height="8" fill="#fff" stroke="#C4C4C8" stroke-width="0.6"/><rect x="3.8" y="2.8" width="4" height="1.8" fill="#5A90DC"/><rect x="3.8" y="5.3" width="4" height="1" fill="#5A90DC" opacity=".8"/><ellipse cx="3.8" cy="9" rx="2.3" ry="1.9" fill="#555"/><ellipse cx="7.8" cy="9" rx="2.3" ry="1.9" fill="#555"/><ellipse cx="3.8" cy="9" rx="1.2" ry="1" fill="#B8B8B8"/><ellipse cx="7.8" cy="9" rx="1.2" ry="1" fill="#B8B8B8"/></svg>
<svg class="a" style="left:24px;top:38px;overflow:visible" width="11" height="10" viewBox="0 0 11 10"><rect x="0" y="0" width="10.5" height="8.5" rx="1.2" fill="#E4441A"/><rect x="5" y="0.5" width="0.6" height="7.5" fill="#F07050"/><rect x="2" y="1.8" width="1.8" height="1.4" fill="#F6A890"/><rect x="2" y="4.2" width="1.8" height="1.4" fill="#F6A890"/><rect x="6.6" y="1.8" width="1.8" height="1.4" fill="#F6A890"/><rect x="6.6" y="4.2" width="1.8" height="1.4" fill="#F6A890"/><path d="M8 8.3 L10 10 L9.6 8.3Z" fill="#E86A4A"/></svg>
<svg class="a" style="left:46px;top:37px;overflow:visible" width="11" height="11" viewBox="0 0 11 11"><rect x="3.5" y="0" width="7.5" height="8" rx="1.8" fill="#ACACAC"/><rect x="0" y="2.5" width="8" height="8.5" rx="1.8" fill="#A2A2A2"/><circle cx="5.5" cy="5.5" r="1.6" fill="none" stroke="#B4B4B4" stroke-width="0.6"/></svg>
<svg class="a" style="left:59.5px;top:38px;overflow:visible" width="11" height="11" viewBox="0 0 11 11"><rect x="0.5" y="0.5" width="10" height="8.5" fill="#fff" stroke="#6C9AD8" stroke-width="1"/><rect x="0.5" y="0.5" width="10" height="2" fill="#8CB4E8"/><circle cx="8.7" cy="8.6" r="2.4" fill="#E46A1E"/><circle cx="8.7" cy="8.6" r="0.9" fill="#F8C89A"/></svg>
<svg class="a" style="left:74px;top:38px;overflow:visible" width="10" height="10" viewBox="0 0 10 10"><path d="M3.5 0.3 H10 L6.8 3.6 H9.8 L2.2 10 L4.6 5.8 H0 Z" fill="#989898"/></svg>
<svg class="a" style="left:95.8px;top:37.8px;overflow:visible" width="10" height="10" viewBox="0 0 10 10"><circle cx="5" cy="5" r="5" fill="#4F7FC2"/><circle cx="5" cy="5" r="4" fill="none" stroke="#7BA4D8" stroke-width="0.6"/><rect x="4.2" y="2" width="1.6" height="6" fill="#fff"/></svg>
<svg class="a" style="left:115.2px;top:38px;overflow:visible" width="10.5" height="10" viewBox="0 0 10.5 10"><defs><radialGradient id="hg1" cx="0.4" cy="0.35" r="0.7"><stop offset="0" stop-color="#8CB6EA"/><stop offset="1" stop-color="#4A7CC0"/></radialGradient></defs><circle cx="5.25" cy="5" r="5" fill="url(#hg1)"/><circle cx="5.25" cy="5" r="4.3" fill="none" stroke="#A8C8EE" stroke-width="0.5"/><circle cx="5.25" cy="3.2" r="1.3" fill="#fff"/><rect x="4.7" y="4" width="1.1" height="3.8" fill="#fff"/><circle cx="5.25" cy="8.4" r="0.5" fill="#fff"/></svg>
<svg class="a" style="left:5px;top:76px;overflow:visible" width="10.5" height="12" viewBox="0 0 10.5 12"><path d="M1.5 0 H7 L10.5 3.5 V10.5 Q10.5 12 9 12 H1.5 Q0 12 0 10.5 V1.5 Q0 0 1.5 0Z" fill="#A2A2A2"/></svg>
<svg class="a" style="left:18px;top:76px;overflow:visible" width="11.5" height="12" viewBox="0 0 11.5 12"><rect x="0" y="0" width="11.5" height="12" rx="1.5" fill="#6A9CE2"/><rect x="2" y="0.8" width="7.5" height="3" fill="#fff" opacity=".9"/><rect x="3" y="1.3" width="2" height="2" fill="#6A9CE2"/><rect x="1.2" y="5.5" width="9" height="0.8" fill="#A8C4EC"/><rect x="2" y="7.5" width="7.5" height="3" fill="#9ED07A"/></svg>
<svg class="a" style="left:33px;top:77px;overflow:visible" width="10.5" height="11" viewBox="0 0 10.5 11"><path d="M2.5 6.5 H6.5 Q9.5 6.5 9.5 3.8 Q9.5 1 6.5 1 H2.5" stroke="#58B45E" stroke-width="2.2" fill="none"/><path d="M0 6.5 L3.5 3.5 V9.5Z" fill="#58B45E"/></svg>
<svg class="a" style="left:47.5px;top:77px;overflow:visible" width="9.5" height="10" viewBox="0 0 9.5 10"><path d="M1.2 1.2 L8.3 8.8 M8.3 1.2 L1.2 8.8" stroke="#989898" stroke-width="2.1"/></svg>
<svg class="a" style="left:60px;top:77px;overflow:visible" width="12" height="12" viewBox="0 0 12 12"><rect x="0.5" y="0.5" width="10.5" height="8.5" fill="#fff" stroke="#6E9AD8" stroke-width="1"/><rect x="0.5" y="0.5" width="10.5" height="1.8" fill="#8AB2E6"/><rect x="2" y="4" width="2" height="1" fill="#5A8ED8"/><rect x="5" y="4" width="4.5" height="0.8" fill="#bbb"/><rect x="2" y="6.3" width="2" height="1" fill="#5A8ED8"/><circle cx="9.5" cy="9.3" r="2.4" fill="#E46A1E"/><circle cx="9.5" cy="9.3" r="0.9" fill="#F8C89A"/></svg>
<svg class="a" style="left:82px;top:76px;overflow:visible" width="11" height="12" viewBox="0 0 11 12"><rect x="2" y="1" width="9" height="11" fill="#C4D8F0" stroke="#8CB0E0" stroke-width="0.6"/><rect x="2" y="2" width="9" height="1" fill="#9ED07A"/><path d="M6 4 V12 M9 4 V12 M2 7 H11" stroke="#fff" stroke-width="0.6"/><rect x="0" y="0" width="4" height="6.5" rx="2" fill="#E4E4E4" stroke="#A8A8A8" stroke-width="0.6"/></svg>
<svg class="a" style="left:98px;top:78px;overflow:visible" width="7" height="9" viewBox="0 0 7 9"><rect x="0" y="0" width="2" height="9" fill="#5A8CDA"/><path d="M7 0 V9 L2 4.5Z" fill="#5A8CDA"/></svg>
<svg class="a" style="left:111px;top:78px;overflow:visible" width="10" height="9" viewBox="0 0 10 9"><path d="M5 0 V9 L0 4.5Z M10 0 V9 L5 4.5Z" fill="#5A8CDA"/></svg>
<svg class="a" style="left:127px;top:78px;overflow:visible" width="5" height="9" viewBox="0 0 5 9"><path d="M5 0 V9 L0 4.5Z" fill="#5A8CDA"/></svg>
<svg class="a" style="left:141px;top:78px;overflow:visible" width="5" height="9" viewBox="0 0 5 9"><path d="M0 0 V9 L5 4.5Z" fill="#9E9E9E"/></svg>
<svg class="a" style="left:152px;top:78px;overflow:visible" width="10" height="9" viewBox="0 0 10 9"><path d="M0 0 V9 L5 4.5Z M5 0 V9 L10 4.5Z" fill="#9E9E9E"/></svg>
<svg class="a" style="left:168px;top:78px;overflow:visible" width="7" height="9" viewBox="0 0 7 9"><path d="M0 0 V9 L5 4.5Z" fill="#9E9E9E"/><rect x="5" y="0" width="2" height="9" fill="#9E9E9E"/></svg>
<svg class="a" style="left:180px;top:77px;overflow:visible" width="11" height="11" viewBox="0 0 11 11"><path d="M1.5 4.5 Q3 1.3 6.5 2 H8" stroke="#5CB860" stroke-width="1.8" fill="none"/><path d="M7.5 0 L11 2.2 L7.5 4.5Z" fill="#5CB860"/><path d="M9.5 6.5 Q8 9.7 4.5 9 H3" stroke="#5CB860" stroke-width="1.8" fill="none"/><path d="M3.5 6.5 L0 8.8 L3.5 11Z" fill="#5CB860"/></svg>
<svg class="a" style="left:202px;top:79px;overflow:visible" width="10" height="7" viewBox="0 0 10 7"><path d="M0 3.5 L3.5 0.5 V2.5 H10 V4.5 H3.5 V6.5Z" fill="#9E9E9E"/></svg>
<svg class="a" style="left:216px;top:77px;overflow:visible" width="9" height="11" viewBox="0 0 9 11"><path d="M7.5 0 L2.5 8 M4 0 L6 6" stroke="#9E9E9E" stroke-width="1"/><circle cx="2.2" cy="9" r="1.6" fill="none" stroke="#9E9E9E" stroke-width="1"/><circle cx="6.8" cy="8.5" r="1.6" fill="none" stroke="#9E9E9E" stroke-width="1"/></svg>
<svg class="a" style="left:229px;top:77px;overflow:visible" width="12" height="11" viewBox="0 0 12 11"><path d="M0 1 Q0 0 1 0 H5 L7 2 V8 H0Z" fill="#9A9A9A"/><path d="M4 3 H9 L12 6 V11 H4Z" fill="#8A8A8A"/></svg>
<svg class="a" style="left:243px;top:77px;overflow:visible" width="12" height="11" viewBox="0 0 12 11"><path d="M0 2 Q0 0 2 0 H6 L9 3 V9 H0Z" fill="#9A9A9A"/><path d="M3 3 H8 L12 6.5 V11 H3Z" fill="#8A8A8A"/></svg>
<svg class="a" style="left:265px;top:76px;overflow:visible" width="12" height="12" viewBox="0 0 12 12"><rect x="3" y="0" width="6" height="4" fill="#fff" stroke="#8AB0E0" stroke-width="0.8"/><rect x="0" y="4" width="12" height="5.5" rx="1.5" fill="#9A9A9A"/><rect x="2" y="8" width="8" height="3.5" fill="#fff" stroke="#8AB0E0" stroke-width="0.8"/></svg>
<svg class="a" style="left:279px;top:78px;overflow:visible" width="12" height="8" viewBox="0 0 12 8"><ellipse cx="6" cy="4" rx="6" ry="4" fill="#A8A8A8"/><ellipse cx="6" cy="4" rx="4" ry="2.4" fill="#8E8E8E"/></svg>
<svg class="a" style="left:293px;top:76px;overflow:visible" width="11" height="12" viewBox="0 0 11 12"><circle cx="5.5" cy="5" r="5" fill="#F6D25A"/><circle cx="4.5" cy="4" r="2.5" fill="#FCF0B8"/><rect x="3.5" y="9" width="4" height="3" fill="#9C8A5A"/></svg>
<svg class="a" style="left:306px;top:76px;overflow:visible" width="12" height="12" viewBox="0 0 12 12"><path d="M10 0 L11.5 2 L7 11 L1 8 Z" fill="#E8B830"/><path d="M1 8 L7 11 L3 11.5Z" fill="#C89020"/><circle cx="5" cy="7" r="1.2" fill="#A07010"/></svg>
<svg class="a" style="left:329px;top:76px;overflow:visible" width="11" height="12" viewBox="0 0 11 12"><circle cx="7.5" cy="2.3" r="2.2" fill="#F0B860"/><rect x="5" y="4.5" width="6" height="6" rx="2" fill="#E8602A"/><circle cx="3.5" cy="5" r="2.2" fill="#C8885A"/><rect x="0" y="7" width="7" height="5" rx="2" fill="#4A8ADC"/></svg>
<svg class="a" style="left:350px;top:76px;overflow:visible" width="11" height="11" viewBox="0 0 11 11"><defs><radialGradient id="hg2" cx="0.4" cy="0.35" r="0.7"><stop offset="0" stop-color="#9CC0EE"/><stop offset="1" stop-color="#4E80C4"/></radialGradient></defs><circle cx="5.5" cy="5.5" r="5.5" fill="url(#hg2)"/><circle cx="5.5" cy="5.5" r="4.6" fill="none" stroke="#B0CCEE" stroke-width="0.5"/><circle cx="5.5" cy="3.5" r="1.4" fill="#fff"/><rect x="4.95" y="4.3" width="1.1" height="4" fill="#fff"/><circle cx="5.5" cy="9" r="0.5" fill="#fff"/></svg>
<svg class="a" style="left:5px;top:60px;overflow:visible" width="12" height="12" viewBox="0 0 12 12"><circle cx="8" cy="2.5" r="2.3" fill="#F0B850"/><rect x="5.5" y="4.5" width="6" height="5" rx="2" fill="#5CB848"/><circle cx="4" cy="5.3" r="2.3" fill="#C8885A"/><rect x="0.5" y="7.3" width="7" height="4.5" rx="2" fill="#3C8CE8"/></svg>
<div class="a" style="left:364px;top:217px;width:281px;height:231px;box-shadow:0 2px 14px rgba(0,0,0,0.22)"></div>
<div class="a" style="left:364px;top:217px;width:281px;height:231px;background:#F1F1FD;border:1px solid #949494"></div>
<div class="a" style="left:365px;top:218px;width:279px;height:20.5px;background:#fff"></div>
<svg class="a" style="left:370.5px;top:222px" width="11" height="11" viewBox="0 0 11 11"><defs><linearGradient id="ag370" x1="0" x2="1" y1="0" y2="0"><stop offset="0" stop-color="#0A3A88"/><stop offset="0.5" stop-color="#1878CC"/><stop offset="1" stop-color="#34AEEE"/></linearGradient></defs><rect width="11" height="11" fill="url(#ag370)"/><path d="M3.4 2.9 Q4.6 2.3 5.9 2.3 Q7.8 2.3 7.8 4.4 V9.6" stroke="#fff" stroke-width="1.15" fill="none"/><ellipse cx="5.5" cy="7.3" rx="2.25" ry="2.05" stroke="#fff" stroke-width="1.15" fill="none"/></svg>
<div class="a t" style="left:385px;top:222.2px;height:12px;line-height:12px;font-size:9.2px;color:#111">Schule</div>
<svg class="a" style="left:629.5px;top:223.5px" width="8.5" height="8" viewBox="0 0 8.5 8"><path d="M0.5 0.5 L8 7.5 M8 0.5 L0.5 7.5" stroke="#222" stroke-width="0.9"/></svg>
<div class="a t" style="left:368px;top:242.2px;height:12.5px;line-height:12.5px;">Filter</div>
<div class="a" style="left:397px;top:242.3px;width:244px;height:12.5px;background:#fff;border:1px solid #A3B4D0;border-radius:1px"></div>
<div class="a" style="left:368px;top:259.5px;width:273px;height:165.5px;background:#fff;border:1px solid #C8C8D0"></div>
<div class="a" style="left:369px;top:260.5px;width:271px;height:13px;background:#F2F2FC;border-bottom:1px solid #D0D0D8"></div>
<div class="a t" style="left:368.5px;top:261.4px;height:13px;line-height:13px;">Schulnummer</div>
<svg class="a" style="left:445.5px;top:264.5px" width="7" height="5" viewBox="0 0 7 5"><path d="M0.5 4 L3.5 1 L6.5 4Z" fill="#1f3347"/></svg>
<div class="a" style="left:455px;top:261px;width:1px;height:12px;background:#D8D8E0"></div>
<div class="a t" style="left:455.5px;top:261.4px;height:13px;line-height:13px;">Schulkürzel</div>
<div class="a" style="left:541.5px;top:261px;width:1px;height:12px;background:#D8D8E0"></div>
<div class="a t" style="left:542px;top:261.4px;height:13px;line-height:13px;">Schulname</div>
<div class="a" style="left:628.2px;top:260.1px;width:11.6px;height:14px;background:linear-gradient(#FAFAFC,#E6E8F0);border:1.2px solid #5A78A8;border-radius:2.5px"></div>
<svg class="a" style="left:630.8px;top:263px" width="8" height="8" viewBox="0 0 8 8"><rect x="0" y="0" width="6" height="5" fill="#111"/><rect x="1.6" y="1.2" width="0.9" height="2.8" fill="#fff"/><rect x="3.6" y="1.2" width="0.9" height="2.8" fill="#fff"/><rect x="0" y="5" width="1.2" height="2.2" fill="#111"/><path d="M2.5 4.6 H7.5 L5 7.6Z" fill="#111" stroke="#fff" stroke-width="0.4"/></svg>
<div class="a" style="left:369px;top:274.0px;width:258px;height:12.5px;background:#fff"></div>
<div class="a" style="left:369px;top:285.7px;width:258px;height:0.8px;background:#CDD2DC"></div>
<svg class="a" style="left:379px;top:275.8px" width="37.4" height="9.2" viewBox="0 0 37.4 9.2"><rect x="0.0" y="0" width="3.4" height="2.6" fill="#8C8894" opacity="0.53"/><rect x="3.4" y="0" width="3.4" height="2.6" fill="#B4ACA4" opacity="0.45"/><rect x="6.8" y="0" width="3.4" height="2.6" fill="#A9A4A4" opacity="0.50"/><rect x="10.2" y="0" width="3.4" height="2.6" fill="#A9A4A4" opacity="0.36"/><rect x="13.6" y="0" width="3.4" height="2.6" fill="#C0C0C4" opacity="0.52"/><rect x="17.0" y="0" width="3.4" height="2.6" fill="#D0C8C0" opacity="0.26"/><rect x="20.4" y="0" width="3.4" height="2.6" fill="#B4ACA4" opacity="0.38"/><rect x="23.8" y="0" width="3.4" height="2.6" fill="#D0C8C0" opacity="0.28"/><rect x="27.2" y="0" width="3.4" height="2.6" fill="#B4ACA4" opacity="0.27"/><rect x="30.6" y="0" width="3.4" height="2.6" fill="#A9A4A4" opacity="0.53"/><rect x="34.0" y="0" width="3.4" height="2.6" fill="#C0C0C4" opacity="0.42"/><rect x="0.0" y="2.6" width="3.4" height="4.0" fill="#B4ACA4" opacity="0.71"/><rect x="3.4" y="2.6" width="3.4" height="4.0" fill="#D0C8C0" opacity="0.71"/><rect x="6.8" y="2.6" width="3.4" height="4.0" fill="#9898A4" opacity="0.79"/><rect x="10.2" y="2.6" width="3.4" height="4.0" fill="#9898A4" opacity="0.86"/><rect x="13.6" y="2.6" width="3.4" height="4.0" fill="#A4A8B4" opacity="0.87"/><rect x="17.0" y="2.6" width="3.4" height="4.0" fill="#9898A4" opacity="0.73"/><rect x="20.4" y="2.6" width="3.4" height="4.0" fill="#D0C8C0" opacity="0.81"/><rect x="23.8" y="2.6" width="3.4" height="4.0" fill="#A9A4A4" opacity="0.87"/><rect x="27.2" y="2.6" width="3.4" height="4.0" fill="#D0C8C0" opacity="0.85"/><rect x="30.6" y="2.6" width="3.4" height="4.0" fill="#B4ACA4" opacity="0.93"/><rect x="34.0" y="2.6" width="3.4" height="4.0" fill="#E0E0E4" opacity="0.88"/><rect x="0.0" y="6.6" width="3.4" height="2.6" fill="#E0E0E4" opacity="0.31"/><rect x="3.4" y="6.6" width="3.4" height="2.6" fill="#D0C8C0" opacity="0.44"/><rect x="6.8" y="6.6" width="3.4" height="2.6" fill="#D0C8C0" opacity="0.22"/><rect x="10.2" y="6.6" width="3.4" height="2.6" fill="#A4A8B4" opacity="0.36"/><rect x="13.6" y="6.6" width="3.4" height="2.6" fill="#8C8894" opacity="0.42"/><rect x="17.0" y="6.6" width="3.4" height="2.6" fill="#A4A8B4" opacity="0.38"/><rect x="20.4" y="6.6" width="3.4" height="2.6" fill="#A9A4A4" opacity="0.24"/><rect x="23.8" y="6.6" width="3.4" height="2.6" fill="#B4ACA4" opacity="0.25"/><rect x="27.2" y="6.6" width="3.4" height="2.6" fill="#8C8894" opacity="0.25"/><rect x="30.6" y="6.6" width="3.4" height="2.6" fill="#E0E0E4" opacity="0.33"/><rect x="34.0" y="6.6" width="3.4" height="2.6" fill="#A9A4A4" opacity="0.43"/></svg>
<svg class="a" style="left:456.5px;top:275.8px" width="34.0" height="9.2" viewBox="0 0 34.0 9.2"><rect x="0.0" y="0" width="3.4" height="2.6" fill="#8C8894" opacity="0.35"/><rect x="3.4" y="0" width="3.4" height="2.6" fill="#8C8894" opacity="0.43"/><rect x="6.8" y="0" width="3.4" height="2.6" fill="#E0E0E4" opacity="0.27"/><rect x="10.2" y="0" width="3.4" height="2.6" fill="#A9A4A4" opacity="0.53"/><rect x="13.6" y="0" width="3.4" height="2.6" fill="#E0E0E4" opacity="0.46"/><rect x="17.0" y="0" width="3.4" height="2.6" fill="#A9A4A4" opacity="0.27"/><rect x="20.4" y="0" width="3.4" height="2.6" fill="#A4A8B4" opacity="0.44"/><rect x="23.8" y="0" width="3.4" height="2.6" fill="#E0E0E4" opacity="0.34"/><rect x="27.2" y="0" width="3.4" height="2.6" fill="#B4ACA4" opacity="0.52"/><rect x="30.6" y="0" width="3.4" height="2.6" fill="#8C8894" opacity="0.26"/><rect x="0.0" y="2.6" width="3.4" height="4.0" fill="#E0E0E4" opacity="0.81"/><rect x="3.4" y="2.6" width="3.4" height="4.0" fill="#A9A4A4" opacity="0.85"/><rect x="6.8" y="2.6" width="3.4" height="4.0" fill="#D0C8C0" opacity="0.93"/><rect x="10.2" y="2.6" width="3.4" height="4.0" fill="#9898A4" opacity="0.92"/><rect x="13.6" y="2.6" width="3.4" height="4.0" fill="#B4ACA4" opacity="0.82"/><rect x="17.0" y="2.6" width="3.4" height="4.0" fill="#E0E0E4" opacity="0.72"/><rect x="20.4" y="2.6" width="3.4" height="4.0" fill="#E0E0E4" opacity="0.82"/><rect x="23.8" y="2.6" width="3.4" height="4.0" fill="#A4A8B4" opacity="0.97"/><rect x="27.2" y="2.6" width="3.4" height="4.0" fill="#B4ACA4" opacity="0.96"/><rect x="30.6" y="2.6" width="3.4" height="4.0" fill="#A4A8B4" opacity="0.91"/><rect x="0.0" y="6.6" width="3.4" height="2.6" fill="#8C8894" opacity="0.40"/><rect x="3.4" y="6.6" width="3.4" height="2.6" fill="#B4ACA4" opacity="0.49"/><rect x="6.8" y="6.6" width="3.4" height="2.6" fill="#9898A4" opacity="0.22"/><rect x="10.2" y="6.6" width="3.4" height="2.6" fill="#9898A4" opacity="0.27"/><rect x="13.6" y="6.6" width="3.4" height="2.6" fill="#D0C8C0" opacity="0.20"/><rect x="17.0" y="6.6" width="3.4" height="2.6" fill="#9898A4" opacity="0.28"/><rect x="20.4" y="6.6" width="3.4" height="2.6" fill="#C0C0C4" opacity="0.24"/><rect x="23.8" y="6.6" width="3.4" height="2.6" fill="#8C8894" opacity="0.38"/><rect x="27.2" y="6.6" width="3.4" height="2.6" fill="#8C8894" opacity="0.49"/><rect x="30.6" y="6.6" width="3.4" height="2.6" fill="#C0C0C4" opacity="0.34"/></svg>
<svg class="a" style="left:543px;top:275.8px" width="78.2" height="9.2" viewBox="0 0 78.2 9.2"><rect x="0.0" y="0" width="3.4" height="2.6" fill="#B4ACA4" opacity="0.37"/><rect x="3.4" y="0" width="3.4" height="2.6" fill="#B4ACA4" opacity="0.28"/><rect x="6.8" y="0" width="3.4" height="2.6" fill="#B4ACA4" opacity="0.27"/><rect x="10.2" y="0" width="3.4" height="2.6" fill="#A9A4A4" opacity="0.55"/><rect x="13.6" y="0" width="3.4" height="2.6" fill="#E0E0E4" opacity="0.30"/><rect x="17.0" y="0" width="3.4" height="2.6" fill="#8C8894" opacity="0.43"/><rect x="20.4" y="0" width="3.4" height="2.6" fill="#A9A4A4" opacity="0.25"/><rect x="23.8" y="0" width="3.4" height="2.6" fill="#9898A4" opacity="0.41"/><rect x="27.2" y="0" width="3.4" height="2.6" fill="#8C8894" opacity="0.43"/><rect x="30.6" y="0" width="3.4" height="2.6" fill="#A9A4A4" opacity="0.51"/><rect x="34.0" y="0" width="3.4" height="2.6" fill="#B4ACA4" opacity="0.29"/><rect x="37.4" y="0" width="3.4" height="2.6" fill="#A4A8B4" opacity="0.54"/><rect x="40.8" y="0" width="3.4" height="2.6" fill="#8C8894" opacity="0.39"/><rect x="44.2" y="0" width="3.4" height="2.6" fill="#A9A4A4" opacity="0.50"/><rect x="47.6" y="0" width="3.4" height="2.6" fill="#E0E0E4" opacity="0.39"/><rect x="51.0" y="0" width="3.4" height="2.6" fill="#A4A8B4" opacity="0.28"/><rect x="54.4" y="0" width="3.4" height="2.6" fill="#A9A4A4" opacity="0.47"/><rect x="57.8" y="0" width="3.4" height="2.6" fill="#A4A8B4" opacity="0.39"/><rect x="61.2" y="0" width="3.4" height="2.6" fill="#9898A4" opacity="0.40"/><rect x="64.6" y="0" width="3.4" height="2.6" fill="#D0C8C0" opacity="0.54"/><rect x="68.0" y="0" width="3.4" height="2.6" fill="#8C8894" opacity="0.29"/><rect x="71.4" y="0" width="3.4" height="2.6" fill="#C0C0C4" opacity="0.48"/><rect x="74.8" y="0" width="3.4" height="2.6" fill="#A4A8B4" opacity="0.54"/><rect x="0.0" y="2.6" width="3.4" height="4.0" fill="#A9A4A4" opacity="0.91"/><rect x="3.4" y="2.6" width="3.4" height="4.0" fill="#A4A8B4" opacity="0.86"/><rect x="6.8" y="2.6" width="3.4" height="4.0" fill="#9898A4" opacity="0.81"/><rect x="10.2" y="2.6" width="3.4" height="4.0" fill="#D0C8C0" opacity="0.86"/><rect x="13.6" y="2.6" width="3.4" height="4.0" fill="#8C8894" opacity="0.89"/><rect x="17.0" y="2.6" width="3.4" height="4.0" fill="#D0C8C0" opacity="0.94"/><rect x="20.4" y="2.6" width="3.4" height="4.0" fill="#B4ACA4" opacity="0.92"/><rect x="23.8" y="2.6" width="3.4" height="4.0" fill="#D0C8C0" opacity="0.76"/><rect x="27.2" y="2.6" width="3.4" height="4.0" fill="#E0E0E4" opacity="0.81"/><rect x="30.6" y="2.6" width="3.4" height="4.0" fill="#C0C0C4" opacity="1.00"/><rect x="34.0" y="2.6" width="3.4" height="4.0" fill="#A4A8B4" opacity="0.84"/><rect x="37.4" y="2.6" width="3.4" height="4.0" fill="#D0C8C0" opacity="0.91"/><rect x="40.8" y="2.6" width="3.4" height="4.0" fill="#8C8894" opacity="0.83"/><rect x="44.2" y="2.6" width="3.4" height="4.0" fill="#8C8894" opacity="0.99"/><rect x="47.6" y="2.6" width="3.4" height="4.0" fill="#8C8894" opacity="0.72"/><rect x="51.0" y="2.6" width="3.4" height="4.0" fill="#A9A4A4" opacity="0.77"/><rect x="54.4" y="2.6" width="3.4" height="4.0" fill="#D0C8C0" opacity="0.80"/><rect x="57.8" y="2.6" width="3.4" height="4.0" fill="#E0E0E4" opacity="0.89"/><rect x="61.2" y="2.6" width="3.4" height="4.0" fill="#C0C0C4" opacity="0.84"/><rect x="64.6" y="2.6" width="3.4" height="4.0" fill="#8C8894" opacity="0.94"/><rect x="68.0" y="2.6" width="3.4" height="4.0" fill="#A9A4A4" opacity="0.95"/><rect x="71.4" y="2.6" width="3.4" height="4.0" fill="#A9A4A4" opacity="0.97"/><rect x="74.8" y="2.6" width="3.4" height="4.0" fill="#D0C8C0" opacity="0.84"/><rect x="0.0" y="6.6" width="3.4" height="2.6" fill="#9898A4" opacity="0.33"/><rect x="3.4" y="6.6" width="3.4" height="2.6" fill="#8C8894" opacity="0.23"/><rect x="6.8" y="6.6" width="3.4" height="2.6" fill="#B4ACA4" opacity="0.34"/><rect x="10.2" y="6.6" width="3.4" height="2.6" fill="#A9A4A4" opacity="0.42"/><rect x="13.6" y="6.6" width="3.4" height="2.6" fill="#9898A4" opacity="0.50"/><rect x="17.0" y="6.6" width="3.4" height="2.6" fill="#C0C0C4" opacity="0.25"/><rect x="20.4" y="6.6" width="3.4" height="2.6" fill="#E0E0E4" opacity="0.44"/><rect x="23.8" y="6.6" width="3.4" height="2.6" fill="#9898A4" opacity="0.38"/><rect x="27.2" y="6.6" width="3.4" height="2.6" fill="#E0E0E4" opacity="0.40"/><rect x="30.6" y="6.6" width="3.4" height="2.6" fill="#8C8894" opacity="0.25"/><rect x="34.0" y="6.6" width="3.4" height="2.6" fill="#9898A4" opacity="0.21"/><rect x="37.4" y="6.6" width="3.4" height="2.6" fill="#A9A4A4" opacity="0.36"/><rect x="40.8" y="6.6" width="3.4" height="2.6" fill="#9898A4" opacity="0.33"/><rect x="44.2" y="6.6" width="3.4" height="2.6" fill="#D0C8C0" opacity="0.45"/><rect x="47.6" y="6.6" width="3.4" height="2.6" fill="#D0C8C0" opacity="0.21"/><rect x="51.0" y="6.6" width="3.4" height="2.6" fill="#D0C8C0" opacity="0.29"/><rect x="54.4" y="6.6" width="3.4" height="2.6" fill="#D0C8C0" opacity="0.43"/><rect x="57.8" y="6.6" width="3.4" height="2.6" fill="#8C8894" opacity="0.28"/><rect x="61.2" y="6.6" width="3.4" height="2.6" fill="#B4ACA4" opacity="0.45"/><rect x="64.6" y="6.6" width="3.4" height="2.6" fill="#C0C0C4" opacity="0.47"/><rect x="68.0" y="6.6" width="3.4" height="2.6" fill="#8C8894" opacity="0.47"/><rect x="71.4" y="6.6" width="3.4" height="2.6" fill="#B4ACA4" opacity="0.45"/><rect x="74.8" y="6.6" width="3.4" height="2.6" fill="#9898A4" opacity="0.36"/></svg>
<div class="a" style="left:379px;top:284.3px;width:65px;height:1.6px;background:rgba(200,200,210,0.35)"></div>
<div class="a t" style="left:369px;top:274.8px;height:12.5px;line-height:12.5px;font-size:9.2px">04</div>
<div class="a" style="left:369px;top:286.5px;width:258px;height:12.5px;background:#D4E2FA"></div>
<div class="a" style="left:369px;top:298.2px;width:258px;height:0.8px;background:#CDD2DC"></div>
<svg class="a" style="left:379px;top:288.3px" width="37.4" height="9.2" viewBox="0 0 37.4 9.2"><rect x="0.0" y="0" width="3.4" height="2.6" fill="#98A4BC" opacity="0.51"/><rect x="3.4" y="0" width="3.4" height="2.6" fill="#7C849C" opacity="0.43"/><rect x="6.8" y="0" width="3.4" height="2.6" fill="#7C849C" opacity="0.30"/><rect x="10.2" y="0" width="3.4" height="2.6" fill="#C8D4EC" opacity="0.44"/><rect x="13.6" y="0" width="3.4" height="2.6" fill="#8894AC" opacity="0.42"/><rect x="17.0" y="0" width="3.4" height="2.6" fill="#788098" opacity="0.45"/><rect x="20.4" y="0" width="3.4" height="2.6" fill="#C8D4EC" opacity="0.49"/><rect x="23.8" y="0" width="3.4" height="2.6" fill="#8894AC" opacity="0.51"/><rect x="27.2" y="0" width="3.4" height="2.6" fill="#98A4BC" opacity="0.32"/><rect x="30.6" y="0" width="3.4" height="2.6" fill="#949CB4" opacity="0.26"/><rect x="34.0" y="0" width="3.4" height="2.6" fill="#8894AC" opacity="0.40"/><rect x="0.0" y="2.6" width="3.4" height="4.0" fill="#98A4BC" opacity="0.93"/><rect x="3.4" y="2.6" width="3.4" height="4.0" fill="#8894AC" opacity="0.83"/><rect x="6.8" y="2.6" width="3.4" height="4.0" fill="#A0ACC4" opacity="0.91"/><rect x="10.2" y="2.6" width="3.4" height="4.0" fill="#C8D4EC" opacity="0.85"/><rect x="13.6" y="2.6" width="3.4" height="4.0" fill="#C8D4EC" opacity="0.85"/><rect x="17.0" y="2.6" width="3.4" height="4.0" fill="#A0ACC4" opacity="0.91"/><rect x="20.4" y="2.6" width="3.4" height="4.0" fill="#949CB4" opacity="0.98"/><rect x="23.8" y="2.6" width="3.4" height="4.0" fill="#A0ACC4" opacity="0.95"/><rect x="27.2" y="2.6" width="3.4" height="4.0" fill="#7C849C" opacity="0.82"/><rect x="30.6" y="2.6" width="3.4" height="4.0" fill="#A8B4CC" opacity="0.83"/><rect x="34.0" y="2.6" width="3.4" height="4.0" fill="#8894AC" opacity="0.90"/><rect x="0.0" y="6.6" width="3.4" height="2.6" fill="#A8B4CC" opacity="0.22"/><rect x="3.4" y="6.6" width="3.4" height="2.6" fill="#949CB4" opacity="0.44"/><rect x="6.8" y="6.6" width="3.4" height="2.6" fill="#7C849C" opacity="0.48"/><rect x="10.2" y="6.6" width="3.4" height="2.6" fill="#788098" opacity="0.24"/><rect x="13.6" y="6.6" width="3.4" height="2.6" fill="#7C849C" opacity="0.49"/><rect x="17.0" y="6.6" width="3.4" height="2.6" fill="#A0ACC4" opacity="0.42"/><rect x="20.4" y="6.6" width="3.4" height="2.6" fill="#8894AC" opacity="0.32"/><rect x="23.8" y="6.6" width="3.4" height="2.6" fill="#C8D4EC" opacity="0.25"/><rect x="27.2" y="6.6" width="3.4" height="2.6" fill="#A0ACC4" opacity="0.25"/><rect x="30.6" y="6.6" width="3.4" height="2.6" fill="#A8B4CC" opacity="0.50"/><rect x="34.0" y="6.6" width="3.4" height="2.6" fill="#A8B4CC" opacity="0.30"/></svg>
<svg class="a" style="left:456.5px;top:288.3px" width="34.0" height="9.2" viewBox="0 0 34.0 9.2"><rect x="0.0" y="0" width="3.4" height="2.6" fill="#A0ACC4" opacity="0.36"/><rect x="3.4" y="0" width="3.4" height="2.6" fill="#8894AC" opacity="0.47"/><rect x="6.8" y="0" width="3.4" height="2.6" fill="#98A4BC" opacity="0.35"/><rect x="10.2" y="0" width="3.4" height="2.6" fill="#C8D4EC" opacity="0.38"/><rect x="13.6" y="0" width="3.4" height="2.6" fill="#98A4BC" opacity="0.37"/><rect x="17.0" y="0" width="3.4" height="2.6" fill="#949CB4" opacity="0.40"/><rect x="20.4" y="0" width="3.4" height="2.6" fill="#8894AC" opacity="0.28"/><rect x="23.8" y="0" width="3.4" height="2.6" fill="#A0ACC4" opacity="0.54"/><rect x="27.2" y="0" width="3.4" height="2.6" fill="#8894AC" opacity="0.28"/><rect x="30.6" y="0" width="3.4" height="2.6" fill="#949CB4" opacity="0.26"/><rect x="0.0" y="2.6" width="3.4" height="4.0" fill="#7C849C" opacity="0.78"/><rect x="3.4" y="2.6" width="3.4" height="4.0" fill="#7C849C" opacity="0.95"/><rect x="6.8" y="2.6" width="3.4" height="4.0" fill="#949CB4" opacity="0.82"/><rect x="10.2" y="2.6" width="3.4" height="4.0" fill="#C8D4EC" opacity="0.91"/><rect x="13.6" y="2.6" width="3.4" height="4.0" fill="#8894AC" opacity="0.78"/><rect x="17.0" y="2.6" width="3.4" height="4.0" fill="#7C849C" opacity="0.83"/><rect x="20.4" y="2.6" width="3.4" height="4.0" fill="#8894AC" opacity="0.78"/><rect x="23.8" y="2.6" width="3.4" height="4.0" fill="#98A4BC" opacity="0.89"/><rect x="27.2" y="2.6" width="3.4" height="4.0" fill="#949CB4" opacity="0.73"/><rect x="30.6" y="2.6" width="3.4" height="4.0" fill="#A0ACC4" opacity="0.72"/><rect x="0.0" y="6.6" width="3.4" height="2.6" fill="#8894AC" opacity="0.34"/><rect x="3.4" y="6.6" width="3.4" height="2.6" fill="#788098" opacity="0.50"/><rect x="6.8" y="6.6" width="3.4" height="2.6" fill="#A8B4CC" opacity="0.48"/><rect x="10.2" y="6.6" width="3.4" height="2.6" fill="#949CB4" opacity="0.39"/><rect x="13.6" y="6.6" width="3.4" height="2.6" fill="#98A4BC" opacity="0.36"/><rect x="17.0" y="6.6" width="3.4" height="2.6" fill="#A0ACC4" opacity="0.48"/><rect x="20.4" y="6.6" width="3.4" height="2.6" fill="#7C849C" opacity="0.28"/><rect x="23.8" y="6.6" width="3.4" height="2.6" fill="#7C849C" opacity="0.26"/><rect x="27.2" y="6.6" width="3.4" height="2.6" fill="#949CB4" opacity="0.39"/><rect x="30.6" y="6.6" width="3.4" height="2.6" fill="#A0ACC4" opacity="0.29"/></svg>
<svg class="a" style="left:543px;top:288.3px" width="78.2" height="9.2" viewBox="0 0 78.2 9.2"><rect x="0.0" y="0" width="3.4" height="2.6" fill="#7C849C" opacity="0.33"/><rect x="3.4" y="0" width="3.4" height="2.6" fill="#98A4BC" opacity="0.55"/><rect x="6.8" y="0" width="3.4" height="2.6" fill="#98A4BC" opacity="0.25"/><rect x="10.2" y="0" width="3.4" height="2.6" fill="#A0ACC4" opacity="0.40"/><rect x="13.6" y="0" width="3.4" height="2.6" fill="#A0ACC4" opacity="0.53"/><rect x="17.0" y="0" width="3.4" height="2.6" fill="#8894AC" opacity="0.45"/><rect x="20.4" y="0" width="3.4" height="2.6" fill="#A8B4CC" opacity="0.45"/><rect x="23.8" y="0" width="3.4" height="2.6" fill="#A8B4CC" opacity="0.54"/><rect x="27.2" y="0" width="3.4" height="2.6" fill="#949CB4" opacity="0.46"/><rect x="30.6" y="0" width="3.4" height="2.6" fill="#A0ACC4" opacity="0.35"/><rect x="34.0" y="0" width="3.4" height="2.6" fill="#7C849C" opacity="0.37"/><rect x="37.4" y="0" width="3.4" height="2.6" fill="#788098" opacity="0.54"/><rect x="40.8" y="0" width="3.4" height="2.6" fill="#7C849C" opacity="0.25"/><rect x="44.2" y="0" width="3.4" height="2.6" fill="#949CB4" opacity="0.38"/><rect x="47.6" y="0" width="3.4" height="2.6" fill="#98A4BC" opacity="0.28"/><rect x="51.0" y="0" width="3.4" height="2.6" fill="#A8B4CC" opacity="0.51"/><rect x="54.4" y="0" width="3.4" height="2.6" fill="#949CB4" opacity="0.43"/><rect x="57.8" y="0" width="3.4" height="2.6" fill="#949CB4" opacity="0.26"/><rect x="61.2" y="0" width="3.4" height="2.6" fill="#7C849C" opacity="0.30"/><rect x="64.6" y="0" width="3.4" height="2.6" fill="#C8D4EC" opacity="0.25"/><rect x="68.0" y="0" width="3.4" height="2.6" fill="#788098" opacity="0.54"/><rect x="71.4" y="0" width="3.4" height="2.6" fill="#788098" opacity="0.32"/><rect x="74.8" y="0" width="3.4" height="2.6" fill="#949CB4" opacity="0.32"/><rect x="0.0" y="2.6" width="3.4" height="4.0" fill="#7C849C" opacity="0.70"/><rect x="3.4" y="2.6" width="3.4" height="4.0" fill="#A8B4CC" opacity="0.73"/><rect x="6.8" y="2.6" width="3.4" height="4.0" fill="#949CB4" opacity="0.85"/><rect x="10.2" y="2.6" width="3.4" height="4.0" fill="#A0ACC4" opacity="0.77"/><rect x="13.6" y="2.6" width="3.4" height="4.0" fill="#98A4BC" opacity="0.73"/><rect x="17.0" y="2.6" width="3.4" height="4.0" fill="#8894AC" opacity="0.74"/><rect x="20.4" y="2.6" width="3.4" height="4.0" fill="#98A4BC" opacity="0.82"/><rect x="23.8" y="2.6" width="3.4" height="4.0" fill="#949CB4" opacity="0.79"/><rect x="27.2" y="2.6" width="3.4" height="4.0" fill="#A0ACC4" opacity="0.73"/><rect x="30.6" y="2.6" width="3.4" height="4.0" fill="#7C849C" opacity="0.90"/><rect x="34.0" y="2.6" width="3.4" height="4.0" fill="#A8B4CC" opacity="0.93"/><rect x="37.4" y="2.6" width="3.4" height="4.0" fill="#C8D4EC" opacity="0.74"/><rect x="40.8" y="2.6" width="3.4" height="4.0" fill="#7C849C" opacity="0.71"/><rect x="44.2" y="2.6" width="3.4" height="4.0" fill="#A8B4CC" opacity="0.92"/><rect x="47.6" y="2.6" width="3.4" height="4.0" fill="#7C849C" opacity="0.97"/><rect x="51.0" y="2.6" width="3.4" height="4.0" fill="#98A4BC" opacity="0.95"/><rect x="54.4" y="2.6" width="3.4" height="4.0" fill="#A0ACC4" opacity="0.73"/><rect x="57.8" y="2.6" width="3.4" height="4.0" fill="#98A4BC" opacity="0.74"/><rect x="61.2" y="2.6" width="3.4" height="4.0" fill="#788098" opacity="0.99"/><rect x="64.6" y="2.6" width="3.4" height="4.0" fill="#A8B4CC" opacity="0.95"/><rect x="68.0" y="2.6" width="3.4" height="4.0" fill="#98A4BC" opacity="0.89"/><rect x="71.4" y="2.6" width="3.4" height="4.0" fill="#A0ACC4" opacity="0.85"/><rect x="74.8" y="2.6" width="3.4" height="4.0" fill="#98A4BC" opacity="0.84"/><rect x="0.0" y="6.6" width="3.4" height="2.6" fill="#8894AC" opacity="0.42"/><rect x="3.4" y="6.6" width="3.4" height="2.6" fill="#8894AC" opacity="0.40"/><rect x="6.8" y="6.6" width="3.4" height="2.6" fill="#8894AC" opacity="0.42"/><rect x="10.2" y="6.6" width="3.4" height="2.6" fill="#C8D4EC" opacity="0.28"/><rect x="13.6" y="6.6" width="3.4" height="2.6" fill="#8894AC" opacity="0.45"/><rect x="17.0" y="6.6" width="3.4" height="2.6" fill="#A0ACC4" opacity="0.42"/><rect x="20.4" y="6.6" width="3.4" height="2.6" fill="#A0ACC4" opacity="0.27"/><rect x="23.8" y="6.6" width="3.4" height="2.6" fill="#C8D4EC" opacity="0.35"/><rect x="27.2" y="6.6" width="3.4" height="2.6" fill="#A8B4CC" opacity="0.22"/><rect x="30.6" y="6.6" width="3.4" height="2.6" fill="#949CB4" opacity="0.43"/><rect x="34.0" y="6.6" width="3.4" height="2.6" fill="#A0ACC4" opacity="0.22"/><rect x="37.4" y="6.6" width="3.4" height="2.6" fill="#7C849C" opacity="0.30"/><rect x="40.8" y="6.6" width="3.4" height="2.6" fill="#949CB4" opacity="0.39"/><rect x="44.2" y="6.6" width="3.4" height="2.6" fill="#7C849C" opacity="0.20"/><rect x="47.6" y="6.6" width="3.4" height="2.6" fill="#98A4BC" opacity="0.35"/><rect x="51.0" y="6.6" width="3.4" height="2.6" fill="#8894AC" opacity="0.41"/><rect x="54.4" y="6.6" width="3.4" height="2.6" fill="#C8D4EC" opacity="0.29"/><rect x="57.8" y="6.6" width="3.4" height="2.6" fill="#949CB4" opacity="0.34"/><rect x="61.2" y="6.6" width="3.4" height="2.6" fill="#C8D4EC" opacity="0.43"/><rect x="64.6" y="6.6" width="3.4" height="2.6" fill="#A0ACC4" opacity="0.29"/><rect x="68.0" y="6.6" width="3.4" height="2.6" fill="#8894AC" opacity="0.48"/><rect x="71.4" y="6.6" width="3.4" height="2.6" fill="#98A4BC" opacity="0.29"/><rect x="74.8" y="6.6" width="3.4" height="2.6" fill="#8894AC" opacity="0.45"/></svg>
<div class="a" style="left:379px;top:296.8px;width:65px;height:1.6px;background:rgba(200,200,210,0.35)"></div>
<div class="a t" style="left:369px;top:287.3px;height:12.5px;line-height:12.5px;font-size:9.2px">04</div>
<div class="a" style="left:369px;top:299.0px;width:258px;height:12.5px;background:#fff"></div>
<div class="a" style="left:369px;top:310.7px;width:258px;height:0.8px;background:#CDD2DC"></div>
<svg class="a" style="left:379px;top:300.8px" width="44.2" height="9.2" viewBox="0 0 44.2 9.2"><rect x="0.0" y="0" width="3.4" height="2.6" fill="#E0E0E4" opacity="0.55"/><rect x="3.4" y="0" width="3.4" height="2.6" fill="#B4ACA4" opacity="0.31"/><rect x="6.8" y="0" width="3.4" height="2.6" fill="#D0C8C0" opacity="0.27"/><rect x="10.2" y="0" width="3.4" height="2.6" fill="#A9A4A4" opacity="0.29"/><rect x="13.6" y="0" width="3.4" height="2.6" fill="#A4A8B4" opacity="0.54"/><rect x="17.0" y="0" width="3.4" height="2.6" fill="#9898A4" opacity="0.43"/><rect x="20.4" y="0" width="3.4" height="2.6" fill="#A4A8B4" opacity="0.52"/><rect x="23.8" y="0" width="3.4" height="2.6" fill="#8C8894" opacity="0.32"/><rect x="27.2" y="0" width="3.4" height="2.6" fill="#E0E0E4" opacity="0.37"/><rect x="30.6" y="0" width="3.4" height="2.6" fill="#9898A4" opacity="0.25"/><rect x="34.0" y="0" width="3.4" height="2.6" fill="#E0E0E4" opacity="0.45"/><rect x="37.4" y="0" width="3.4" height="2.6" fill="#B4ACA4" opacity="0.34"/><rect x="40.8" y="0" width="3.4" height="2.6" fill="#9898A4" opacity="0.37"/><rect x="0.0" y="2.6" width="3.4" height="4.0" fill="#B4ACA4" opacity="0.79"/><rect x="3.4" y="2.6" width="3.4" height="4.0" fill="#8C8894" opacity="0.70"/><rect x="6.8" y="2.6" width="3.4" height="4.0" fill="#8C8894" opacity="0.95"/><rect x="10.2" y="2.6" width="3.4" height="4.0" fill="#A9A4A4" opacity="0.98"/><rect x="13.6" y="2.6" width="3.4" height="4.0" fill="#D0C8C0" opacity="0.91"/><rect x="17.0" y="2.6" width="3.4" height="4.0" fill="#A4A8B4" opacity="0.78"/><rect x="20.4" y="2.6" width="3.4" height="4.0" fill="#A9A4A4" opacity="0.82"/><rect x="23.8" y="2.6" width="3.4" height="4.0" fill="#A9A4A4" opacity="0.81"/><rect x="27.2" y="2.6" width="3.4" height="4.0" fill="#B4ACA4" opacity="0.93"/><rect x="30.6" y="2.6" width="3.4" height="4.0" fill="#C0C0C4" opacity="0.78"/><rect x="34.0" y="2.6" width="3.4" height="4.0" fill="#C0C0C4" opacity="0.95"/><rect x="37.4" y="2.6" width="3.4" height="4.0" fill="#A4A8B4" opacity="0.89"/><rect x="40.8" y="2.6" width="3.4" height="4.0" fill="#9898A4" opacity="0.77"/><rect x="0.0" y="6.6" width="3.4" height="2.6" fill="#A4A8B4" opacity="0.33"/><rect x="3.4" y="6.6" width="3.4" height="2.6" fill="#8C8894" opacity="0.26"/><rect x="6.8" y="6.6" width="3.4" height="2.6" fill="#8C8894" opacity="0.44"/><rect x="10.2" y="6.6" width="3.4" height="2.6" fill="#B4ACA4" opacity="0.47"/><rect x="13.6" y="6.6" width="3.4" height="2.6" fill="#B4ACA4" opacity="0.47"/><rect x="17.0" y="6.6" width="3.4" height="2.6" fill="#D0C8C0" opacity="0.42"/><rect x="20.4" y="6.6" width="3.4" height="2.6" fill="#C0C0C4" opacity="0.48"/><rect x="23.8" y="6.6" width="3.4" height="2.6" fill="#B4ACA4" opacity="0.34"/><rect x="27.2" y="6.6" width="3.4" height="2.6" fill="#9898A4" opacity="0.39"/><rect x="30.6" y="6.6" width="3.4" height="2.6" fill="#A4A8B4" opacity="0.35"/><rect x="34.0" y="6.6" width="3.4" height="2.6" fill="#9898A4" opacity="0.25"/><rect x="37.4" y="6.6" width="3.4" height="2.6" fill="#B4ACA4" opacity="0.30"/><rect x="40.8" y="6.6" width="3.4" height="2.6" fill="#A4A8B4" opacity="0.28"/></svg>
<svg class="a" style="left:456.5px;top:300.8px" width="34.0" height="9.2" viewBox="0 0 34.0 9.2"><rect x="0.0" y="0" width="3.4" height="2.6" fill="#A4A8B4" opacity="0.37"/><rect x="3.4" y="0" width="3.4" height="2.6" fill="#D0C8C0" opacity="0.34"/><rect x="6.8" y="0" width="3.4" height="2.6" fill="#B4ACA4" opacity="0.29"/><rect x="10.2" y="0" width="3.4" height="2.6" fill="#9898A4" opacity="0.27"/><rect x="13.6" y="0" width="3.4" height="2.6" fill="#E0E0E4" opacity="0.42"/><rect x="17.0" y="0" width="3.4" height="2.6" fill="#E0E0E4" opacity="0.52"/><rect x="20.4" y="0" width="3.4" height="2.6" fill="#E0E0E4" opacity="0.38"/><rect x="23.8" y="0" width="3.4" height="2.6" fill="#D0C8C0" opacity="0.32"/><rect x="27.2" y="0" width="3.4" height="2.6" fill="#9898A4" opacity="0.35"/><rect x="30.6" y="0" width="3.4" height="2.6" fill="#A9A4A4" opacity="0.35"/><rect x="0.0" y="2.6" width="3.4" height="4.0" fill="#8C8894" opacity="0.78"/><rect x="3.4" y="2.6" width="3.4" height="4.0" fill="#D0C8C0" opacity="0.97"/><rect x="6.8" y="2.6" width="3.4" height="4.0" fill="#B4ACA4" opacity="0.81"/><rect x="10.2" y="2.6" width="3.4" height="4.0" fill="#D0C8C0" opacity="0.81"/><rect x="13.6" y="2.6" width="3.4" height="4.0" fill="#8C8894" opacity="0.93"/><rect x="17.0" y="2.6" width="3.4" height="4.0" fill="#E0E0E4" opacity="0.78"/><rect x="20.4" y="2.6" width="3.4" height="4.0" fill="#8C8894" opacity="0.74"/><rect x="23.8" y="2.6" width="3.4" height="4.0" fill="#D0C8C0" opacity="0.73"/><rect x="27.2" y="2.6" width="3.4" height="4.0" fill="#D0C8C0" opacity="0.82"/><rect x="30.6" y="2.6" width="3.4" height="4.0" fill="#E0E0E4" opacity="0.83"/><rect x="0.0" y="6.6" width="3.4" height="2.6" fill="#A4A8B4" opacity="0.45"/><rect x="3.4" y="6.6" width="3.4" height="2.6" fill="#C0C0C4" opacity="0.24"/><rect x="6.8" y="6.6" width="3.4" height="2.6" fill="#B4ACA4" opacity="0.41"/><rect x="10.2" y="6.6" width="3.4" height="2.6" fill="#E0E0E4" opacity="0.49"/><rect x="13.6" y="6.6" width="3.4" height="2.6" fill="#E0E0E4" opacity="0.20"/><rect x="17.0" y="6.6" width="3.4" height="2.6" fill="#B4ACA4" opacity="0.48"/><rect x="20.4" y="6.6" width="3.4" height="2.6" fill="#E0E0E4" opacity="0.49"/><rect x="23.8" y="6.6" width="3.4" height="2.6" fill="#D0C8C0" opacity="0.43"/><rect x="27.2" y="6.6" width="3.4" height="2.6" fill="#D0C8C0" opacity="0.25"/><rect x="30.6" y="6.6" width="3.4" height="2.6" fill="#A9A4A4" opacity="0.48"/></svg>
<svg class="a" style="left:543px;top:300.8px" width="68.0" height="9.2" viewBox="0 0 68.0 9.2"><rect x="0.0" y="0" width="3.4" height="2.6" fill="#E0E0E4" opacity="0.28"/><rect x="3.4" y="0" width="3.4" height="2.6" fill="#C0C0C4" opacity="0.25"/><rect x="6.8" y="0" width="3.4" height="2.6" fill="#9898A4" opacity="0.32"/><rect x="10.2" y="0" width="3.4" height="2.6" fill="#C0C0C4" opacity="0.44"/><rect x="13.6" y="0" width="3.4" height="2.6" fill="#A4A8B4" opacity="0.54"/><rect x="17.0" y="0" width="3.4" height="2.6" fill="#A4A8B4" opacity="0.41"/><rect x="20.4" y="0" width="3.4" height="2.6" fill="#B4ACA4" opacity="0.46"/><rect x="23.8" y="0" width="3.4" height="2.6" fill="#A9A4A4" opacity="0.28"/><rect x="27.2" y="0" width="3.4" height="2.6" fill="#A4A8B4" opacity="0.41"/><rect x="30.6" y="0" width="3.4" height="2.6" fill="#D0C8C0" opacity="0.37"/><rect x="34.0" y="0" width="3.4" height="2.6" fill="#D0C8C0" opacity="0.49"/><rect x="37.4" y="0" width="3.4" height="2.6" fill="#C0C0C4" opacity="0.25"/><rect x="40.8" y="0" width="3.4" height="2.6" fill="#A4A8B4" opacity="0.55"/><rect x="44.2" y="0" width="3.4" height="2.6" fill="#A4A8B4" opacity="0.54"/><rect x="47.6" y="0" width="3.4" height="2.6" fill="#D0C8C0" opacity="0.39"/><rect x="51.0" y="0" width="3.4" height="2.6" fill="#D0C8C0" opacity="0.41"/><rect x="54.4" y="0" width="3.4" height="2.6" fill="#C0C0C4" opacity="0.54"/><rect x="57.8" y="0" width="3.4" height="2.6" fill="#A4A8B4" opacity="0.27"/><rect x="61.2" y="0" width="3.4" height="2.6" fill="#D0C8C0" opacity="0.40"/><rect x="64.6" y="0" width="3.4" height="2.6" fill="#B4ACA4" opacity="0.27"/><rect x="0.0" y="2.6" width="3.4" height="4.0" fill="#D0C8C0" opacity="0.90"/><rect x="3.4" y="2.6" width="3.4" height="4.0" fill="#8C8894" opacity="0.77"/><rect x="6.8" y="2.6" width="3.4" height="4.0" fill="#C0C0C4" opacity="0.91"/><rect x="10.2" y="2.6" width="3.4" height="4.0" fill="#B4ACA4" opacity="0.81"/><rect x="13.6" y="2.6" width="3.4" height="4.0" fill="#B4ACA4" opacity="0.76"/><rect x="17.0" y="2.6" width="3.4" height="4.0" fill="#A4A8B4" opacity="0.92"/><rect x="20.4" y="2.6" width="3.4" height="4.0" fill="#A9A4A4" opacity="0.76"/><rect x="23.8" y="2.6" width="3.4" height="4.0" fill="#D0C8C0" opacity="0.79"/><rect x="27.2" y="2.6" width="3.4" height="4.0" fill="#D0C8C0" opacity="0.77"/><rect x="30.6" y="2.6" width="3.4" height="4.0" fill="#D0C8C0" opacity="0.78"/><rect x="34.0" y="2.6" width="3.4" height="4.0" fill="#A4A8B4" opacity="0.73"/><rect x="37.4" y="2.6" width="3.4" height="4.0" fill="#E0E0E4" opacity="0.88"/><rect x="40.8" y="2.6" width="3.4" height="4.0" fill="#D0C8C0" opacity="0.85"/><rect x="44.2" y="2.6" width="3.4" height="4.0" fill="#C0C0C4" opacity="0.98"/><rect x="47.6" y="2.6" width="3.4" height="4.0" fill="#9898A4" opacity="0.98"/><rect x="51.0" y="2.6" width="3.4" height="4.0" fill="#C0C0C4" opacity="0.76"/><rect x="54.4" y="2.6" width="3.4" height="4.0" fill="#9898A4" opacity="0.82"/><rect x="57.8" y="2.6" width="3.4" height="4.0" fill="#C0C0C4" opacity="0.76"/><rect x="61.2" y="2.6" width="3.4" height="4.0" fill="#E0E0E4" opacity="0.97"/><rect x="64.6" y="2.6" width="3.4" height="4.0" fill="#8C8894" opacity="0.92"/><rect x="0.0" y="6.6" width="3.4" height="2.6" fill="#A9A4A4" opacity="0.48"/><rect x="3.4" y="6.6" width="3.4" height="2.6" fill="#8C8894" opacity="0.26"/><rect x="6.8" y="6.6" width="3.4" height="2.6" fill="#E0E0E4" opacity="0.21"/><rect x="10.2" y="6.6" width="3.4" height="2.6" fill="#B4ACA4" opacity="0.45"/><rect x="13.6" y="6.6" width="3.4" height="2.6" fill="#8C8894" opacity="0.33"/><rect x="17.0" y="6.6" width="3.4" height="2.6" fill="#A9A4A4" opacity="0.20"/><rect x="20.4" y="6.6" width="3.4" height="2.6" fill="#A4A8B4" opacity="0.22"/><rect x="23.8" y="6.6" width="3.4" height="2.6" fill="#B4ACA4" opacity="0.49"/><rect x="27.2" y="6.6" width="3.4" height="2.6" fill="#A9A4A4" opacity="0.37"/><rect x="30.6" y="6.6" width="3.4" height="2.6" fill="#D0C8C0" opacity="0.31"/><rect x="34.0" y="6.6" width="3.4" height="2.6" fill="#A4A8B4" opacity="0.45"/><rect x="37.4" y="6.6" width="3.4" height="2.6" fill="#B4ACA4" opacity="0.23"/><rect x="40.8" y="6.6" width="3.4" height="2.6" fill="#E0E0E4" opacity="0.26"/><rect x="44.2" y="6.6" width="3.4" height="2.6" fill="#E0E0E4" opacity="0.26"/><rect x="47.6" y="6.6" width="3.4" height="2.6" fill="#8C8894" opacity="0.42"/><rect x="51.0" y="6.6" width="3.4" height="2.6" fill="#E0E0E4" opacity="0.21"/><rect x="54.4" y="6.6" width="3.4" height="2.6" fill="#B4ACA4" opacity="0.27"/><rect x="57.8" y="6.6" width="3.4" height="2.6" fill="#B4ACA4" opacity="0.21"/><rect x="61.2" y="6.6" width="3.4" height="2.6" fill="#C0C0C4" opacity="0.34"/><rect x="64.6" y="6.6" width="3.4" height="2.6" fill="#C0C0C4" opacity="0.28"/></svg>
<div class="a" style="left:379px;top:309.3px;width:65px;height:1.6px;background:rgba(200,200,210,0.35)"></div>
<div class="a t" style="left:369px;top:299.8px;height:12.5px;line-height:12.5px;font-size:9.2px">04</div>
<div class="a" style="left:369px;top:311.5px;width:258px;height:12.5px;background:#D4E2FA"></div>
<div class="a" style="left:369px;top:323.2px;width:258px;height:0.8px;background:#CDD2DC"></div>
<svg class="a" style="left:379px;top:313.3px" width="40.8" height="9.2" viewBox="0 0 40.8 9.2"><rect x="0.0" y="0" width="3.4" height="2.6" fill="#8894AC" opacity="0.52"/><rect x="3.4" y="0" width="3.4" height="2.6" fill="#788098" opacity="0.36"/><rect x="6.8" y="0" width="3.4" height="2.6" fill="#788098" opacity="0.54"/><rect x="10.2" y="0" width="3.4" height="2.6" fill="#98A4BC" opacity="0.33"/><rect x="13.6" y="0" width="3.4" height="2.6" fill="#788098" opacity="0.53"/><rect x="17.0" y="0" width="3.4" height="2.6" fill="#949CB4" opacity="0.25"/><rect x="20.4" y="0" width="3.4" height="2.6" fill="#8894AC" opacity="0.26"/><rect x="23.8" y="0" width="3.4" height="2.6" fill="#A0ACC4" opacity="0.28"/><rect x="27.2" y="0" width="3.4" height="2.6" fill="#C8D4EC" opacity="0.54"/><rect x="30.6" y="0" width="3.4" height="2.6" fill="#A8B4CC" opacity="0.49"/><rect x="34.0" y="0" width="3.4" height="2.6" fill="#A8B4CC" opacity="0.49"/><rect x="37.4" y="0" width="3.4" height="2.6" fill="#7C849C" opacity="0.53"/><rect x="0.0" y="2.6" width="3.4" height="4.0" fill="#7C849C" opacity="0.70"/><rect x="3.4" y="2.6" width="3.4" height="4.0" fill="#949CB4" opacity="0.95"/><rect x="6.8" y="2.6" width="3.4" height="4.0" fill="#7C849C" opacity="0.88"/><rect x="10.2" y="2.6" width="3.4" height="4.0" fill="#788098" opacity="0.96"/><rect x="13.6" y="2.6" width="3.4" height="4.0" fill="#C8D4EC" opacity="0.81"/><rect x="17.0" y="2.6" width="3.4" height="4.0" fill="#8894AC" opacity="0.85"/><rect x="20.4" y="2.6" width="3.4" height="4.0" fill="#A8B4CC" opacity="0.93"/><rect x="23.8" y="2.6" width="3.4" height="4.0" fill="#A0ACC4" opacity="0.82"/><rect x="27.2" y="2.6" width="3.4" height="4.0" fill="#98A4BC" opacity="0.84"/><rect x="30.6" y="2.6" width="3.4" height="4.0" fill="#788098" opacity="0.75"/><rect x="34.0" y="2.6" width="3.4" height="4.0" fill="#A8B4CC" opacity="0.97"/><rect x="37.4" y="2.6" width="3.4" height="4.0" fill="#8894AC" opacity="0.78"/><rect x="0.0" y="6.6" width="3.4" height="2.6" fill="#8894AC" opacity="0.26"/><rect x="3.4" y="6.6" width="3.4" height="2.6" fill="#A8B4CC" opacity="0.35"/><rect x="6.8" y="6.6" width="3.4" height="2.6" fill="#C8D4EC" opacity="0.25"/><rect x="10.2" y="6.6" width="3.4" height="2.6" fill="#7C849C" opacity="0.33"/><rect x="13.6" y="6.6" width="3.4" height="2.6" fill="#A0ACC4" opacity="0.42"/><rect x="17.0" y="6.6" width="3.4" height="2.6" fill="#8894AC" opacity="0.43"/><rect x="20.4" y="6.6" width="3.4" height="2.6" fill="#949CB4" opacity="0.29"/><rect x="23.8" y="6.6" width="3.4" height="2.6" fill="#949CB4" opacity="0.31"/><rect x="27.2" y="6.6" width="3.4" height="2.6" fill="#949CB4" opacity="0.26"/><rect x="30.6" y="6.6" width="3.4" height="2.6" fill="#A0ACC4" opacity="0.26"/><rect x="34.0" y="6.6" width="3.4" height="2.6" fill="#A0ACC4" opacity="0.25"/><rect x="37.4" y="6.6" width="3.4" height="2.6" fill="#A0ACC4" opacity="0.30"/></svg>
<svg class="a" style="left:456.5px;top:313.3px" width="34.0" height="9.2" viewBox="0 0 34.0 9.2"><rect x="0.0" y="0" width="3.4" height="2.6" fill="#A8B4CC" opacity="0.33"/><rect x="3.4" y="0" width="3.4" height="2.6" fill="#A0ACC4" opacity="0.40"/><rect x="6.8" y="0" width="3.4" height="2.6" fill="#A0ACC4" opacity="0.44"/><rect x="10.2" y="0" width="3.4" height="2.6" fill="#8894AC" opacity="0.45"/><rect x="13.6" y="0" width="3.4" height="2.6" fill="#98A4BC" opacity="0.28"/><rect x="17.0" y="0" width="3.4" height="2.6" fill="#C8D4EC" opacity="0.51"/><rect x="20.4" y="0" width="3.4" height="2.6" fill="#A0ACC4" opacity="0.50"/><rect x="23.8" y="0" width="3.4" height="2.6" fill="#788098" opacity="0.26"/><rect x="27.2" y="0" width="3.4" height="2.6" fill="#949CB4" opacity="0.32"/><rect x="30.6" y="0" width="3.4" height="2.6" fill="#98A4BC" opacity="0.31"/><rect x="0.0" y="2.6" width="3.4" height="4.0" fill="#A0ACC4" opacity="0.98"/><rect x="3.4" y="2.6" width="3.4" height="4.0" fill="#788098" opacity="0.85"/><rect x="6.8" y="2.6" width="3.4" height="4.0" fill="#7C849C" opacity="0.83"/><rect x="10.2" y="2.6" width="3.4" height="4.0" fill="#949CB4" opacity="0.93"/><rect x="13.6" y="2.6" width="3.4" height="4.0" fill="#98A4BC" opacity="0.73"/><rect x="17.0" y="2.6" width="3.4" height="4.0" fill="#788098" opacity="0.77"/><rect x="20.4" y="2.6" width="3.4" height="4.0" fill="#788098" opacity="0.80"/><rect x="23.8" y="2.6" width="3.4" height="4.0" fill="#98A4BC" opacity="0.76"/><rect x="27.2" y="2.6" width="3.4" height="4.0" fill="#949CB4" opacity="0.71"/><rect x="30.6" y="2.6" width="3.4" height="4.0" fill="#A0ACC4" opacity="0.94"/><rect x="0.0" y="6.6" width="3.4" height="2.6" fill="#788098" opacity="0.32"/><rect x="3.4" y="6.6" width="3.4" height="2.6" fill="#788098" opacity="0.26"/><rect x="6.8" y="6.6" width="3.4" height="2.6" fill="#949CB4" opacity="0.22"/><rect x="10.2" y="6.6" width="3.4" height="2.6" fill="#98A4BC" opacity="0.44"/><rect x="13.6" y="6.6" width="3.4" height="2.6" fill="#C8D4EC" opacity="0.22"/><rect x="17.0" y="6.6" width="3.4" height="2.6" fill="#8894AC" opacity="0.44"/><rect x="20.4" y="6.6" width="3.4" height="2.6" fill="#7C849C" opacity="0.39"/><rect x="23.8" y="6.6" width="3.4" height="2.6" fill="#8894AC" opacity="0.40"/><rect x="27.2" y="6.6" width="3.4" height="2.6" fill="#A8B4CC" opacity="0.41"/><rect x="30.6" y="6.6" width="3.4" height="2.6" fill="#A8B4CC" opacity="0.50"/></svg>
<svg class="a" style="left:543px;top:313.3px" width="81.6" height="9.2" viewBox="0 0 81.6 9.2"><rect x="0.0" y="0" width="3.4" height="2.6" fill="#949CB4" opacity="0.38"/><rect x="3.4" y="0" width="3.4" height="2.6" fill="#98A4BC" opacity="0.34"/><rect x="6.8" y="0" width="3.4" height="2.6" fill="#788098" opacity="0.37"/><rect x="10.2" y="0" width="3.4" height="2.6" fill="#98A4BC" opacity="0.51"/><rect x="13.6" y="0" width="3.4" height="2.6" fill="#788098" opacity="0.44"/><rect x="17.0" y="0" width="3.4" height="2.6" fill="#A8B4CC" opacity="0.47"/><rect x="20.4" y="0" width="3.4" height="2.6" fill="#A0ACC4" opacity="0.53"/><rect x="23.8" y="0" width="3.4" height="2.6" fill="#A8B4CC" opacity="0.52"/><rect x="27.2" y="0" width="3.4" height="2.6" fill="#A8B4CC" opacity="0.28"/><rect x="30.6" y="0" width="3.4" height="2.6" fill="#8894AC" opacity="0.37"/><rect x="34.0" y="0" width="3.4" height="2.6" fill="#788098" opacity="0.39"/><rect x="37.4" y="0" width="3.4" height="2.6" fill="#7C849C" opacity="0.29"/><rect x="40.8" y="0" width="3.4" height="2.6" fill="#98A4BC" opacity="0.42"/><rect x="44.2" y="0" width="3.4" height="2.6" fill="#A8B4CC" opacity="0.28"/><rect x="47.6" y="0" width="3.4" height="2.6" fill="#788098" opacity="0.47"/><rect x="51.0" y="0" width="3.4" height="2.6" fill="#7C849C" opacity="0.29"/><rect x="54.4" y="0" width="3.4" height="2.6" fill="#949CB4" opacity="0.30"/><rect x="57.8" y="0" width="3.4" height="2.6" fill="#7C849C" opacity="0.53"/><rect x="61.2" y="0" width="3.4" height="2.6" fill="#8894AC" opacity="0.37"/><rect x="64.6" y="0" width="3.4" height="2.6" fill="#A0ACC4" opacity="0.34"/><rect x="68.0" y="0" width="3.4" height="2.6" fill="#98A4BC" opacity="0.54"/><rect x="71.4" y="0" width="3.4" height="2.6" fill="#C8D4EC" opacity="0.34"/><rect x="74.8" y="0" width="3.4" height="2.6" fill="#A8B4CC" opacity="0.28"/><rect x="78.2" y="0" width="3.4" height="2.6" fill="#7C849C" opacity="0.44"/><rect x="0.0" y="2.6" width="3.4" height="4.0" fill="#A0ACC4" opacity="0.89"/><rect x="3.4" y="2.6" width="3.4" height="4.0" fill="#A0ACC4" opacity="0.95"/><rect x="6.8" y="2.6" width="3.4" height="4.0" fill="#7C849C" opacity="0.87"/><rect x="10.2" y="2.6" width="3.4" height="4.0" fill="#98A4BC" opacity="0.82"/><rect x="13.6" y="2.6" width="3.4" height="4.0" fill="#7C849C" opacity="0.82"/><rect x="17.0" y="2.6" width="3.4" height="4.0" fill="#8894AC" opacity="0.74"/><rect x="20.4" y="2.6" width="3.4" height="4.0" fill="#A0ACC4" opacity="0.71"/><rect x="23.8" y="2.6" width="3.4" height="4.0" fill="#98A4BC" opacity="0.90"/><rect x="27.2" y="2.6" width="3.4" height="4.0" fill="#788098" opacity="0.74"/><rect x="30.6" y="2.6" width="3.4" height="4.0" fill="#C8D4EC" opacity="0.87"/><rect x="34.0" y="2.6" width="3.4" height="4.0" fill="#949CB4" opacity="0.89"/><rect x="37.4" y="2.6" width="3.4" height="4.0" fill="#949CB4" opacity="0.87"/><rect x="40.8" y="2.6" width="3.4" height="4.0" fill="#A8B4CC" opacity="0.82"/><rect x="44.2" y="2.6" width="3.4" height="4.0" fill="#788098" opacity="0.83"/><rect x="47.6" y="2.6" width="3.4" height="4.0" fill="#C8D4EC" opacity="0.75"/><rect x="51.0" y="2.6" width="3.4" height="4.0" fill="#98A4BC" opacity="0.89"/><rect x="54.4" y="2.6" width="3.4" height="4.0" fill="#C8D4EC" opacity="0.84"/><rect x="57.8" y="2.6" width="3.4" height="4.0" fill="#C8D4EC" opacity="0.93"/><rect x="61.2" y="2.6" width="3.4" height="4.0" fill="#C8D4EC" opacity="0.95"/><rect x="64.6" y="2.6" width="3.4" height="4.0" fill="#C8D4EC" opacity="0.82"/><rect x="68.0" y="2.6" width="3.4" height="4.0" fill="#8894AC" opacity="0.74"/><rect x="71.4" y="2.6" width="3.4" height="4.0" fill="#A8B4CC" opacity="0.81"/><rect x="74.8" y="2.6" width="3.4" height="4.0" fill="#C8D4EC" opacity="0.85"/><rect x="78.2" y="2.6" width="3.4" height="4.0" fill="#98A4BC" opacity="0.71"/><rect x="0.0" y="6.6" width="3.4" height="2.6" fill="#7C849C" opacity="0.22"/><rect x="3.4" y="6.6" width="3.4" height="2.6" fill="#788098" opacity="0.43"/><rect x="6.8" y="6.6" width="3.4" height="2.6" fill="#8894AC" opacity="0.22"/><rect x="10.2" y="6.6" width="3.4" height="2.6" fill="#A8B4CC" opacity="0.40"/><rect x="13.6" y="6.6" width="3.4" height="2.6" fill="#7C849C" opacity="0.21"/><rect x="17.0" y="6.6" width="3.4" height="2.6" fill="#8894AC" opacity="0.50"/><rect x="20.4" y="6.6" width="3.4" height="2.6" fill="#8894AC" opacity="0.26"/><rect x="23.8" y="6.6" width="3.4" height="2.6" fill="#C8D4EC" opacity="0.29"/><rect x="27.2" y="6.6" width="3.4" height="2.6" fill="#7C849C" opacity="0.41"/><rect x="30.6" y="6.6" width="3.4" height="2.6" fill="#A0ACC4" opacity="0.22"/><rect x="34.0" y="6.6" width="3.4" height="2.6" fill="#788098" opacity="0.38"/><rect x="37.4" y="6.6" width="3.4" height="2.6" fill="#949CB4" opacity="0.25"/><rect x="40.8" y="6.6" width="3.4" height="2.6" fill="#949CB4" opacity="0.47"/><rect x="44.2" y="6.6" width="3.4" height="2.6" fill="#C8D4EC" opacity="0.24"/><rect x="47.6" y="6.6" width="3.4" height="2.6" fill="#C8D4EC" opacity="0.26"/><rect x="51.0" y="6.6" width="3.4" height="2.6" fill="#949CB4" opacity="0.38"/><rect x="54.4" y="6.6" width="3.4" height="2.6" fill="#A0ACC4" opacity="0.30"/><rect x="57.8" y="6.6" width="3.4" height="2.6" fill="#98A4BC" opacity="0.26"/><rect x="61.2" y="6.6" width="3.4" height="2.6" fill="#A8B4CC" opacity="0.25"/><rect x="64.6" y="6.6" width="3.4" height="2.6" fill="#949CB4" opacity="0.40"/><rect x="68.0" y="6.6" width="3.4" height="2.6" fill="#A8B4CC" opacity="0.25"/><rect x="71.4" y="6.6" width="3.4" height="2.6" fill="#949CB4" opacity="0.23"/><rect x="74.8" y="6.6" width="3.4" height="2.6" fill="#98A4BC" opacity="0.39"/><rect x="78.2" y="6.6" width="3.4" height="2.6" fill="#788098" opacity="0.49"/></svg>
<div class="a" style="left:379px;top:321.8px;width:65px;height:1.6px;background:rgba(200,200,210,0.35)"></div>
<div class="a t" style="left:369px;top:312.3px;height:12.5px;line-height:12.5px;font-size:9.2px">04</div>
<div class="a" style="left:369px;top:324.0px;width:258px;height:12.5px;background:#fff"></div>
<div class="a" style="left:369px;top:335.7px;width:258px;height:0.8px;background:#CDD2DC"></div>
<svg class="a" style="left:379px;top:325.8px" width="54.4" height="9.2" viewBox="0 0 54.4 9.2"><rect x="0.0" y="0" width="3.4" height="2.6" fill="#E0E0E4" opacity="0.42"/><rect x="3.4" y="0" width="3.4" height="2.6" fill="#A9A4A4" opacity="0.33"/><rect x="6.8" y="0" width="3.4" height="2.6" fill="#B4ACA4" opacity="0.47"/><rect x="10.2" y="0" width="3.4" height="2.6" fill="#8C8894" opacity="0.33"/><rect x="13.6" y="0" width="3.4" height="2.6" fill="#8C8894" opacity="0.42"/><rect x="17.0" y="0" width="3.4" height="2.6" fill="#8C8894" opacity="0.35"/><rect x="20.4" y="0" width="3.4" height="2.6" fill="#A9A4A4" opacity="0.38"/><rect x="23.8" y="0" width="3.4" height="2.6" fill="#9898A4" opacity="0.43"/><rect x="27.2" y="0" width="3.4" height="2.6" fill="#C0C0C4" opacity="0.34"/><rect x="30.6" y="0" width="3.4" height="2.6" fill="#A4A8B4" opacity="0.34"/><rect x="34.0" y="0" width="3.4" height="2.6" fill="#8C8894" opacity="0.47"/><rect x="37.4" y="0" width="3.4" height="2.6" fill="#C0C0C4" opacity="0.32"/><rect x="40.8" y="0" width="3.4" height="2.6" fill="#A4A8B4" opacity="0.43"/><rect x="44.2" y="0" width="3.4" height="2.6" fill="#B4ACA4" opacity="0.38"/><rect x="47.6" y="0" width="3.4" height="2.6" fill="#8C8894" opacity="0.52"/><rect x="51.0" y="0" width="3.4" height="2.6" fill="#9898A4" opacity="0.40"/><rect x="0.0" y="2.6" width="3.4" height="4.0" fill="#C0C0C4" opacity="0.71"/><rect x="3.4" y="2.6" width="3.4" height="4.0" fill="#C0C0C4" opacity="0.87"/><rect x="6.8" y="2.6" width="3.4" height="4.0" fill="#A4A8B4" opacity="0.73"/><rect x="10.2" y="2.6" width="3.4" height="4.0" fill="#8C8894" opacity="0.86"/><rect x="13.6" y="2.6" width="3.4" height="4.0" fill="#B4ACA4" opacity="0.88"/><rect x="17.0" y="2.6" width="3.4" height="4.0" fill="#9898A4" opacity="0.76"/><rect x="20.4" y="2.6" width="3.4" height="4.0" fill="#E0E0E4" opacity="0.75"/><rect x="23.8" y="2.6" width="3.4" height="4.0" fill="#C0C0C4" opacity="0.98"/><rect x="27.2" y="2.6" width="3.4" height="4.0" fill="#D0C8C0" opacity="0.91"/><rect x="30.6" y="2.6" width="3.4" height="4.0" fill="#E0E0E4" opacity="0.73"/><rect x="34.0" y="2.6" width="3.4" height="4.0" fill="#9898A4" opacity="0.96"/><rect x="37.4" y="2.6" width="3.4" height="4.0" fill="#A4A8B4" opacity="0.82"/><rect x="40.8" y="2.6" width="3.4" height="4.0" fill="#A4A8B4" opacity="0.99"/><rect x="44.2" y="2.6" width="3.4" height="4.0" fill="#C0C0C4" opacity="0.89"/><rect x="47.6" y="2.6" width="3.4" height="4.0" fill="#8C8894" opacity="0.88"/><rect x="51.0" y="2.6" width="3.4" height="4.0" fill="#E0E0E4" opacity="0.88"/><rect x="0.0" y="6.6" width="3.4" height="2.6" fill="#E0E0E4" opacity="0.27"/><rect x="3.4" y="6.6" width="3.4" height="2.6" fill="#C0C0C4" opacity="0.21"/><rect x="6.8" y="6.6" width="3.4" height="2.6" fill="#C0C0C4" opacity="0.32"/><rect x="10.2" y="6.6" width="3.4" height="2.6" fill="#D0C8C0" opacity="0.25"/><rect x="13.6" y="6.6" width="3.4" height="2.6" fill="#A9A4A4" opacity="0.20"/><rect x="17.0" y="6.6" width="3.4" height="2.6" fill="#D0C8C0" opacity="0.24"/><rect x="20.4" y="6.6" width="3.4" height="2.6" fill="#D0C8C0" opacity="0.36"/><rect x="23.8" y="6.6" width="3.4" height="2.6" fill="#B4ACA4" opacity="0.44"/><rect x="27.2" y="6.6" width="3.4" height="2.6" fill="#9898A4" opacity="0.35"/><rect x="30.6" y="6.6" width="3.4" height="2.6" fill="#A9A4A4" opacity="0.29"/><rect x="34.0" y="6.6" width="3.4" height="2.6" fill="#C0C0C4" opacity="0.50"/><rect x="37.4" y="6.6" width="3.4" height="2.6" fill="#E0E0E4" opacity="0.41"/><rect x="40.8" y="6.6" width="3.4" height="2.6" fill="#C0C0C4" opacity="0.31"/><rect x="44.2" y="6.6" width="3.4" height="2.6" fill="#B4ACA4" opacity="0.42"/><rect x="47.6" y="6.6" width="3.4" height="2.6" fill="#E0E0E4" opacity="0.22"/><rect x="51.0" y="6.6" width="3.4" height="2.6" fill="#E0E0E4" opacity="0.25"/></svg>
<svg class="a" style="left:456.5px;top:325.8px" width="37.4" height="9.2" viewBox="0 0 37.4 9.2"><rect x="0.0" y="0" width="3.4" height="2.6" fill="#A9A4A4" opacity="0.33"/><rect x="3.4" y="0" width="3.4" height="2.6" fill="#C0C0C4" opacity="0.29"/><rect x="6.8" y="0" width="3.4" height="2.6" fill="#A4A8B4" opacity="0.46"/><rect x="10.2" y="0" width="3.4" height="2.6" fill="#A4A8B4" opacity="0.44"/><rect x="13.6" y="0" width="3.4" height="2.6" fill="#B4ACA4" opacity="0.46"/><rect x="17.0" y="0" width="3.4" height="2.6" fill="#A4A8B4" opacity="0.34"/><rect x="20.4" y="0" width="3.4" height="2.6" fill="#D0C8C0" opacity="0.28"/><rect x="23.8" y="0" width="3.4" height="2.6" fill="#C0C0C4" opacity="0.30"/><rect x="27.2" y="0" width="3.4" height="2.6" fill="#D0C8C0" opacity="0.50"/><rect x="30.6" y="0" width="3.4" height="2.6" fill="#D0C8C0" opacity="0.53"/><rect x="34.0" y="0" width="3.4" height="2.6" fill="#8C8894" opacity="0.31"/><rect x="0.0" y="2.6" width="3.4" height="4.0" fill="#B4ACA4" opacity="0.80"/><rect x="3.4" y="2.6" width="3.4" height="4.0" fill="#D0C8C0" opacity="0.81"/><rect x="6.8" y="2.6" width="3.4" height="4.0" fill="#E0E0E4" opacity="0.84"/><rect x="10.2" y="2.6" width="3.4" height="4.0" fill="#C0C0C4" opacity="0.96"/><rect x="13.6" y="2.6" width="3.4" height="4.0" fill="#B4ACA4" opacity="0.99"/><rect x="17.0" y="2.6" width="3.4" height="4.0" fill="#D0C8C0" opacity="0.87"/><rect x="20.4" y="2.6" width="3.4" height="4.0" fill="#A4A8B4" opacity="0.94"/><rect x="23.8" y="2.6" width="3.4" height="4.0" fill="#B4ACA4" opacity="0.89"/><rect x="27.2" y="2.6" width="3.4" height="4.0" fill="#A9A4A4" opacity="0.87"/><rect x="30.6" y="2.6" width="3.4" height="4.0" fill="#9898A4" opacity="0.74"/><rect x="34.0" y="2.6" width="3.4" height="4.0" fill="#C0C0C4" opacity="0.73"/><rect x="0.0" y="6.6" width="3.4" height="2.6" fill="#9898A4" opacity="0.30"/><rect x="3.4" y="6.6" width="3.4" height="2.6" fill="#9898A4" opacity="0.41"/><rect x="6.8" y="6.6" width="3.4" height="2.6" fill="#C0C0C4" opacity="0.21"/><rect x="10.2" y="6.6" width="3.4" height="2.6" fill="#C0C0C4" opacity="0.41"/><rect x="13.6" y="6.6" width="3.4" height="2.6" fill="#C0C0C4" opacity="0.22"/><rect x="17.0" y="6.6" width="3.4" height="2.6" fill="#8C8894" opacity="0.26"/><rect x="20.4" y="6.6" width="3.4" height="2.6" fill="#A9A4A4" opacity="0.46"/><rect x="23.8" y="6.6" width="3.4" height="2.6" fill="#B4ACA4" opacity="0.23"/><rect x="27.2" y="6.6" width="3.4" height="2.6" fill="#D0C8C0" opacity="0.26"/><rect x="30.6" y="6.6" width="3.4" height="2.6" fill="#C0C0C4" opacity="0.21"/><rect x="34.0" y="6.6" width="3.4" height="2.6" fill="#A9A4A4" opacity="0.45"/></svg>
<svg class="a" style="left:543px;top:325.8px" width="81.6" height="9.2" viewBox="0 0 81.6 9.2"><rect x="0.0" y="0" width="3.4" height="2.6" fill="#A4A8B4" opacity="0.39"/><rect x="3.4" y="0" width="3.4" height="2.6" fill="#9898A4" opacity="0.28"/><rect x="6.8" y="0" width="3.4" height="2.6" fill="#D0C8C0" opacity="0.34"/><rect x="10.2" y="0" width="3.4" height="2.6" fill="#8C8894" opacity="0.38"/><rect x="13.6" y="0" width="3.4" height="2.6" fill="#C0C0C4" opacity="0.36"/><rect x="17.0" y="0" width="3.4" height="2.6" fill="#A4A8B4" opacity="0.26"/><rect x="20.4" y="0" width="3.4" height="2.6" fill="#8C8894" opacity="0.52"/><rect x="23.8" y="0" width="3.4" height="2.6" fill="#E0E0E4" opacity="0.51"/><rect x="27.2" y="0" width="3.4" height="2.6" fill="#C0C0C4" opacity="0.49"/><rect x="30.6" y="0" width="3.4" height="2.6" fill="#C0C0C4" opacity="0.38"/><rect x="34.0" y="0" width="3.4" height="2.6" fill="#A9A4A4" opacity="0.35"/><rect x="37.4" y="0" width="3.4" height="2.6" fill="#C0C0C4" opacity="0.41"/><rect x="40.8" y="0" width="3.4" height="2.6" fill="#D0C8C0" opacity="0.46"/><rect x="44.2" y="0" width="3.4" height="2.6" fill="#A9A4A4" opacity="0.42"/><rect x="47.6" y="0" width="3.4" height="2.6" fill="#A4A8B4" opacity="0.30"/><rect x="51.0" y="0" width="3.4" height="2.6" fill="#C0C0C4" opacity="0.41"/><rect x="54.4" y="0" width="3.4" height="2.6" fill="#A4A8B4" opacity="0.48"/><rect x="57.8" y="0" width="3.4" height="2.6" fill="#C0C0C4" opacity="0.25"/><rect x="61.2" y="0" width="3.4" height="2.6" fill="#E0E0E4" opacity="0.28"/><rect x="64.6" y="0" width="3.4" height="2.6" fill="#9898A4" opacity="0.54"/><rect x="68.0" y="0" width="3.4" height="2.6" fill="#8C8894" opacity="0.54"/><rect x="71.4" y="0" width="3.4" height="2.6" fill="#A4A8B4" opacity="0.42"/><rect x="74.8" y="0" width="3.4" height="2.6" fill="#9898A4" opacity="0.34"/><rect x="78.2" y="0" width="3.4" height="2.6" fill="#D0C8C0" opacity="0.53"/><rect x="0.0" y="2.6" width="3.4" height="4.0" fill="#D0C8C0" opacity="0.85"/><rect x="3.4" y="2.6" width="3.4" height="4.0" fill="#A9A4A4" opacity="0.98"/><rect x="6.8" y="2.6" width="3.4" height="4.0" fill="#A9A4A4" opacity="0.85"/><rect x="10.2" y="2.6" width="3.4" height="4.0" fill="#A9A4A4" opacity="0.89"/><rect x="13.6" y="2.6" width="3.4" height="4.0" fill="#8C8894" opacity="0.73"/><rect x="17.0" y="2.6" width="3.4" height="4.0" fill="#B4ACA4" opacity="0.97"/><rect x="20.4" y="2.6" width="3.4" height="4.0" fill="#A9A4A4" opacity="0.83"/><rect x="23.8" y="2.6" width="3.4" height="4.0" fill="#C0C0C4" opacity="0.81"/><rect x="27.2" y="2.6" width="3.4" height="4.0" fill="#A4A8B4" opacity="0.78"/><rect x="30.6" y="2.6" width="3.4" height="4.0" fill="#9898A4" opacity="0.81"/><rect x="34.0" y="2.6" width="3.4" height="4.0" fill="#D0C8C0" opacity="0.98"/><rect x="37.4" y="2.6" width="3.4" height="4.0" fill="#9898A4" opacity="0.86"/><rect x="40.8" y="2.6" width="3.4" height="4.0" fill="#C0C0C4" opacity="0.80"/><rect x="44.2" y="2.6" width="3.4" height="4.0" fill="#8C8894" opacity="0.86"/><rect x="47.6" y="2.6" width="3.4" height="4.0" fill="#E0E0E4" opacity="0.90"/><rect x="51.0" y="2.6" width="3.4" height="4.0" fill="#8C8894" opacity="0.75"/><rect x="54.4" y="2.6" width="3.4" height="4.0" fill="#E0E0E4" opacity="0.91"/><rect x="57.8" y="2.6" width="3.4" height="4.0" fill="#A4A8B4" opacity="0.87"/><rect x="61.2" y="2.6" width="3.4" height="4.0" fill="#9898A4" opacity="0.80"/><rect x="64.6" y="2.6" width="3.4" height="4.0" fill="#D0C8C0" opacity="0.85"/><rect x="68.0" y="2.6" width="3.4" height="4.0" fill="#A4A8B4" opacity="0.79"/><rect x="71.4" y="2.6" width="3.4" height="4.0" fill="#9898A4" opacity="0.92"/><rect x="74.8" y="2.6" width="3.4" height="4.0" fill="#D0C8C0" opacity="0.92"/><rect x="78.2" y="2.6" width="3.4" height="4.0" fill="#8C8894" opacity="0.75"/><rect x="0.0" y="6.6" width="3.4" height="2.6" fill="#8C8894" opacity="0.49"/><rect x="3.4" y="6.6" width="3.4" height="2.6" fill="#A4A8B4" opacity="0.49"/><rect x="6.8" y="6.6" width="3.4" height="2.6" fill="#A9A4A4" opacity="0.25"/><rect x="10.2" y="6.6" width="3.4" height="2.6" fill="#A9A4A4" opacity="0.26"/><rect x="13.6" y="6.6" width="3.4" height="2.6" fill="#9898A4" opacity="0.50"/><rect x="17.0" y="6.6" width="3.4" height="2.6" fill="#A4A8B4" opacity="0.42"/><rect x="20.4" y="6.6" width="3.4" height="2.6" fill="#B4ACA4" opacity="0.28"/><rect x="23.8" y="6.6" width="3.4" height="2.6" fill="#A9A4A4" opacity="0.39"/><rect x="27.2" y="6.6" width="3.4" height="2.6" fill="#A9A4A4" opacity="0.28"/><rect x="30.6" y="6.6" width="3.4" height="2.6" fill="#B4ACA4" opacity="0.34"/><rect x="34.0" y="6.6" width="3.4" height="2.6" fill="#C0C0C4" opacity="0.32"/><rect x="37.4" y="6.6" width="3.4" height="2.6" fill="#B4ACA4" opacity="0.41"/><rect x="40.8" y="6.6" width="3.4" height="2.6" fill="#A4A8B4" opacity="0.34"/><rect x="44.2" y="6.6" width="3.4" height="2.6" fill="#9898A4" opacity="0.28"/><rect x="47.6" y="6.6" width="3.4" height="2.6" fill="#B4ACA4" opacity="0.20"/><rect x="51.0" y="6.6" width="3.4" height="2.6" fill="#D0C8C0" opacity="0.47"/><rect x="54.4" y="6.6" width="3.4" height="2.6" fill="#B4ACA4" opacity="0.41"/><rect x="57.8" y="6.6" width="3.4" height="2.6" fill="#B4ACA4" opacity="0.45"/><rect x="61.2" y="6.6" width="3.4" height="2.6" fill="#D0C8C0" opacity="0.40"/><rect x="64.6" y="6.6" width="3.4" height="2.6" fill="#A9A4A4" opacity="0.34"/><rect x="68.0" y="6.6" width="3.4" height="2.6" fill="#8C8894" opacity="0.28"/><rect x="71.4" y="6.6" width="3.4" height="2.6" fill="#A9A4A4" opacity="0.47"/><rect x="74.8" y="6.6" width="3.4" height="2.6" fill="#D0C8C0" opacity="0.43"/><rect x="78.2" y="6.6" width="3.4" height="2.6" fill="#9898A4" opacity="0.28"/></svg>
<div class="a" style="left:379px;top:334.3px;width:65px;height:1.6px;background:rgba(200,200,210,0.35)"></div>
<div class="a t" style="left:369px;top:324.8px;height:12.5px;line-height:12.5px;font-size:9.2px">04</div>
<div class="a" style="left:369px;top:336.5px;width:258px;height:12.5px;background:#D4E2FA"></div>
<div class="a" style="left:369px;top:348.2px;width:258px;height:0.8px;background:#CDD2DC"></div>
<svg class="a" style="left:379px;top:338.3px" width="40.8" height="9.2" viewBox="0 0 40.8 9.2"><rect x="0.0" y="0" width="3.4" height="2.6" fill="#A8B4CC" opacity="0.39"/><rect x="3.4" y="0" width="3.4" height="2.6" fill="#98A4BC" opacity="0.44"/><rect x="6.8" y="0" width="3.4" height="2.6" fill="#A8B4CC" opacity="0.41"/><rect x="10.2" y="0" width="3.4" height="2.6" fill="#7C849C" opacity="0.52"/><rect x="13.6" y="0" width="3.4" height="2.6" fill="#788098" opacity="0.48"/><rect x="17.0" y="0" width="3.4" height="2.6" fill="#A8B4CC" opacity="0.50"/><rect x="20.4" y="0" width="3.4" height="2.6" fill="#8894AC" opacity="0.26"/><rect x="23.8" y="0" width="3.4" height="2.6" fill="#A0ACC4" opacity="0.30"/><rect x="27.2" y="0" width="3.4" height="2.6" fill="#A0ACC4" opacity="0.41"/><rect x="30.6" y="0" width="3.4" height="2.6" fill="#8894AC" opacity="0.50"/><rect x="34.0" y="0" width="3.4" height="2.6" fill="#C8D4EC" opacity="0.41"/><rect x="37.4" y="0" width="3.4" height="2.6" fill="#C8D4EC" opacity="0.40"/><rect x="0.0" y="2.6" width="3.4" height="4.0" fill="#788098" opacity="0.86"/><rect x="3.4" y="2.6" width="3.4" height="4.0" fill="#A8B4CC" opacity="0.92"/><rect x="6.8" y="2.6" width="3.4" height="4.0" fill="#C8D4EC" opacity="0.76"/><rect x="10.2" y="2.6" width="3.4" height="4.0" fill="#7C849C" opacity="0.82"/><rect x="13.6" y="2.6" width="3.4" height="4.0" fill="#8894AC" opacity="0.92"/><rect x="17.0" y="2.6" width="3.4" height="4.0" fill="#788098" opacity="0.89"/><rect x="20.4" y="2.6" width="3.4" height="4.0" fill="#949CB4" opacity="0.78"/><rect x="23.8" y="2.6" width="3.4" height="4.0" fill="#A8B4CC" opacity="0.72"/><rect x="27.2" y="2.6" width="3.4" height="4.0" fill="#8894AC" opacity="0.83"/><rect x="30.6" y="2.6" width="3.4" height="4.0" fill="#A8B4CC" opacity="0.89"/><rect x="34.0" y="2.6" width="3.4" height="4.0" fill="#788098" opacity="0.87"/><rect x="37.4" y="2.6" width="3.4" height="4.0" fill="#8894AC" opacity="0.77"/><rect x="0.0" y="6.6" width="3.4" height="2.6" fill="#A8B4CC" opacity="0.48"/><rect x="3.4" y="6.6" width="3.4" height="2.6" fill="#A0ACC4" opacity="0.50"/><rect x="6.8" y="6.6" width="3.4" height="2.6" fill="#A8B4CC" opacity="0.34"/><rect x="10.2" y="6.6" width="3.4" height="2.6" fill="#7C849C" opacity="0.24"/><rect x="13.6" y="6.6" width="3.4" height="2.6" fill="#8894AC" opacity="0.44"/><rect x="17.0" y="6.6" width="3.4" height="2.6" fill="#A0ACC4" opacity="0.34"/><rect x="20.4" y="6.6" width="3.4" height="2.6" fill="#A0ACC4" opacity="0.44"/><rect x="23.8" y="6.6" width="3.4" height="2.6" fill="#7C849C" opacity="0.31"/><rect x="27.2" y="6.6" width="3.4" height="2.6" fill="#A8B4CC" opacity="0.34"/><rect x="30.6" y="6.6" width="3.4" height="2.6" fill="#949CB4" opacity="0.43"/><rect x="34.0" y="6.6" width="3.4" height="2.6" fill="#7C849C" opacity="0.43"/><rect x="37.4" y="6.6" width="3.4" height="2.6" fill="#C8D4EC" opacity="0.31"/></svg>
<svg class="a" style="left:456.5px;top:338.3px" width="34.0" height="9.2" viewBox="0 0 34.0 9.2"><rect x="0.0" y="0" width="3.4" height="2.6" fill="#A0ACC4" opacity="0.33"/><rect x="3.4" y="0" width="3.4" height="2.6" fill="#A8B4CC" opacity="0.46"/><rect x="6.8" y="0" width="3.4" height="2.6" fill="#A8B4CC" opacity="0.45"/><rect x="10.2" y="0" width="3.4" height="2.6" fill="#C8D4EC" opacity="0.25"/><rect x="13.6" y="0" width="3.4" height="2.6" fill="#949CB4" opacity="0.36"/><rect x="17.0" y="0" width="3.4" height="2.6" fill="#949CB4" opacity="0.35"/><rect x="20.4" y="0" width="3.4" height="2.6" fill="#C8D4EC" opacity="0.38"/><rect x="23.8" y="0" width="3.4" height="2.6" fill="#8894AC" opacity="0.45"/><rect x="27.2" y="0" width="3.4" height="2.6" fill="#788098" opacity="0.30"/><rect x="30.6" y="0" width="3.4" height="2.6" fill="#949CB4" opacity="0.51"/><rect x="0.0" y="2.6" width="3.4" height="4.0" fill="#98A4BC" opacity="0.73"/><rect x="3.4" y="2.6" width="3.4" height="4.0" fill="#788098" opacity="0.94"/><rect x="6.8" y="2.6" width="3.4" height="4.0" fill="#7C849C" opacity="0.86"/><rect x="10.2" y="2.6" width="3.4" height="4.0" fill="#788098" opacity="0.89"/><rect x="13.6" y="2.6" width="3.4" height="4.0" fill="#98A4BC" opacity="0.90"/><rect x="17.0" y="2.6" width="3.4" height="4.0" fill="#A0ACC4" opacity="0.99"/><rect x="20.4" y="2.6" width="3.4" height="4.0" fill="#949CB4" opacity="0.78"/><rect x="23.8" y="2.6" width="3.4" height="4.0" fill="#8894AC" opacity="0.87"/><rect x="27.2" y="2.6" width="3.4" height="4.0" fill="#A0ACC4" opacity="0.76"/><rect x="30.6" y="2.6" width="3.4" height="4.0" fill="#C8D4EC" opacity="0.80"/><rect x="0.0" y="6.6" width="3.4" height="2.6" fill="#7C849C" opacity="0.26"/><rect x="3.4" y="6.6" width="3.4" height="2.6" fill="#A8B4CC" opacity="0.44"/><rect x="6.8" y="6.6" width="3.4" height="2.6" fill="#7C849C" opacity="0.38"/><rect x="10.2" y="6.6" width="3.4" height="2.6" fill="#8894AC" opacity="0.40"/><rect x="13.6" y="6.6" width="3.4" height="2.6" fill="#949CB4" opacity="0.26"/><rect x="17.0" y="6.6" width="3.4" height="2.6" fill="#A0ACC4" opacity="0.36"/><rect x="20.4" y="6.6" width="3.4" height="2.6" fill="#C8D4EC" opacity="0.40"/><rect x="23.8" y="6.6" width="3.4" height="2.6" fill="#8894AC" opacity="0.37"/><rect x="27.2" y="6.6" width="3.4" height="2.6" fill="#949CB4" opacity="0.33"/><rect x="30.6" y="6.6" width="3.4" height="2.6" fill="#7C849C" opacity="0.34"/></svg>
<svg class="a" style="left:543px;top:338.3px" width="78.2" height="9.2" viewBox="0 0 78.2 9.2"><rect x="0.0" y="0" width="3.4" height="2.6" fill="#98A4BC" opacity="0.40"/><rect x="3.4" y="0" width="3.4" height="2.6" fill="#7C849C" opacity="0.46"/><rect x="6.8" y="0" width="3.4" height="2.6" fill="#A0ACC4" opacity="0.40"/><rect x="10.2" y="0" width="3.4" height="2.6" fill="#98A4BC" opacity="0.30"/><rect x="13.6" y="0" width="3.4" height="2.6" fill="#788098" opacity="0.39"/><rect x="17.0" y="0" width="3.4" height="2.6" fill="#C8D4EC" opacity="0.45"/><rect x="20.4" y="0" width="3.4" height="2.6" fill="#C8D4EC" opacity="0.36"/><rect x="23.8" y="0" width="3.4" height="2.6" fill="#A8B4CC" opacity="0.55"/><rect x="27.2" y="0" width="3.4" height="2.6" fill="#8894AC" opacity="0.30"/><rect x="30.6" y="0" width="3.4" height="2.6" fill="#788098" opacity="0.44"/><rect x="34.0" y="0" width="3.4" height="2.6" fill="#98A4BC" opacity="0.26"/><rect x="37.4" y="0" width="3.4" height="2.6" fill="#98A4BC" opacity="0.45"/><rect x="40.8" y="0" width="3.4" height="2.6" fill="#788098" opacity="0.49"/><rect x="44.2" y="0" width="3.4" height="2.6" fill="#8894AC" opacity="0.40"/><rect x="47.6" y="0" width="3.4" height="2.6" fill="#C8D4EC" opacity="0.48"/><rect x="51.0" y="0" width="3.4" height="2.6" fill="#7C849C" opacity="0.26"/><rect x="54.4" y="0" width="3.4" height="2.6" fill="#A8B4CC" opacity="0.44"/><rect x="57.8" y="0" width="3.4" height="2.6" fill="#788098" opacity="0.28"/><rect x="61.2" y="0" width="3.4" height="2.6" fill="#788098" opacity="0.35"/><rect x="64.6" y="0" width="3.4" height="2.6" fill="#A0ACC4" opacity="0.34"/><rect x="68.0" y="0" width="3.4" height="2.6" fill="#788098" opacity="0.38"/><rect x="71.4" y="0" width="3.4" height="2.6" fill="#98A4BC" opacity="0.50"/><rect x="74.8" y="0" width="3.4" height="2.6" fill="#949CB4" opacity="0.36"/><rect x="0.0" y="2.6" width="3.4" height="4.0" fill="#C8D4EC" opacity="0.82"/><rect x="3.4" y="2.6" width="3.4" height="4.0" fill="#949CB4" opacity="0.96"/><rect x="6.8" y="2.6" width="3.4" height="4.0" fill="#788098" opacity="0.99"/><rect x="10.2" y="2.6" width="3.4" height="4.0" fill="#C8D4EC" opacity="0.94"/><rect x="13.6" y="2.6" width="3.4" height="4.0" fill="#788098" opacity="0.76"/><rect x="17.0" y="2.6" width="3.4" height="4.0" fill="#949CB4" opacity="0.74"/><rect x="20.4" y="2.6" width="3.4" height="4.0" fill="#8894AC" opacity="0.94"/><rect x="23.8" y="2.6" width="3.4" height="4.0" fill="#98A4BC" opacity="0.82"/><rect x="27.2" y="2.6" width="3.4" height="4.0" fill="#A8B4CC" opacity="0.86"/><rect x="30.6" y="2.6" width="3.4" height="4.0" fill="#98A4BC" opacity="0.82"/><rect x="34.0" y="2.6" width="3.4" height="4.0" fill="#8894AC" opacity="0.70"/><rect x="37.4" y="2.6" width="3.4" height="4.0" fill="#A0ACC4" opacity="0.95"/><rect x="40.8" y="2.6" width="3.4" height="4.0" fill="#C8D4EC" opacity="0.88"/><rect x="44.2" y="2.6" width="3.4" height="4.0" fill="#98A4BC" opacity="0.94"/><rect x="47.6" y="2.6" width="3.4" height="4.0" fill="#A8B4CC" opacity="0.89"/><rect x="51.0" y="2.6" width="3.4" height="4.0" fill="#8894AC" opacity="0.76"/><rect x="54.4" y="2.6" width="3.4" height="4.0" fill="#C8D4EC" opacity="0.89"/><rect x="57.8" y="2.6" width="3.4" height="4.0" fill="#7C849C" opacity="0.73"/><rect x="61.2" y="2.6" width="3.4" height="4.0" fill="#7C849C" opacity="0.96"/><rect x="64.6" y="2.6" width="3.4" height="4.0" fill="#A8B4CC" opacity="0.93"/><rect x="68.0" y="2.6" width="3.4" height="4.0" fill="#98A4BC" opacity="0.81"/><rect x="71.4" y="2.6" width="3.4" height="4.0" fill="#7C849C" opacity="0.94"/><rect x="74.8" y="2.6" width="3.4" height="4.0" fill="#949CB4" opacity="0.96"/><rect x="0.0" y="6.6" width="3.4" height="2.6" fill="#7C849C" opacity="0.33"/><rect x="3.4" y="6.6" width="3.4" height="2.6" fill="#788098" opacity="0.21"/><rect x="6.8" y="6.6" width="3.4" height="2.6" fill="#98A4BC" opacity="0.35"/><rect x="10.2" y="6.6" width="3.4" height="2.6" fill="#98A4BC" opacity="0.45"/><rect x="13.6" y="6.6" width="3.4" height="2.6" fill="#A8B4CC" opacity="0.37"/><rect x="17.0" y="6.6" width="3.4" height="2.6" fill="#A8B4CC" opacity="0.33"/><rect x="20.4" y="6.6" width="3.4" height="2.6" fill="#98A4BC" opacity="0.40"/><rect x="23.8" y="6.6" width="3.4" height="2.6" fill="#7C849C" opacity="0.34"/><rect x="27.2" y="6.6" width="3.4" height="2.6" fill="#A8B4CC" opacity="0.36"/><rect x="30.6" y="6.6" width="3.4" height="2.6" fill="#8894AC" opacity="0.39"/><rect x="34.0" y="6.6" width="3.4" height="2.6" fill="#A0ACC4" opacity="0.47"/><rect x="37.4" y="6.6" width="3.4" height="2.6" fill="#98A4BC" opacity="0.33"/><rect x="40.8" y="6.6" width="3.4" height="2.6" fill="#98A4BC" opacity="0.41"/><rect x="44.2" y="6.6" width="3.4" height="2.6" fill="#8894AC" opacity="0.50"/><rect x="47.6" y="6.6" width="3.4" height="2.6" fill="#8894AC" opacity="0.27"/><rect x="51.0" y="6.6" width="3.4" height="2.6" fill="#8894AC" opacity="0.24"/><rect x="54.4" y="6.6" width="3.4" height="2.6" fill="#98A4BC" opacity="0.28"/><rect x="57.8" y="6.6" width="3.4" height="2.6" fill="#A0ACC4" opacity="0.34"/><rect x="61.2" y="6.6" width="3.4" height="2.6" fill="#7C849C" opacity="0.48"/><rect x="64.6" y="6.6" width="3.4" height="2.6" fill="#788098" opacity="0.43"/><rect x="68.0" y="6.6" width="3.4" height="2.6" fill="#7C849C" opacity="0.42"/><rect x="71.4" y="6.6" width="3.4" height="2.6" fill="#8894AC" opacity="0.29"/><rect x="74.8" y="6.6" width="3.4" height="2.6" fill="#C8D4EC" opacity="0.34"/></svg>
<div class="a" style="left:379px;top:346.8px;width:65px;height:1.6px;background:rgba(200,200,210,0.35)"></div>
<div class="a t" style="left:369px;top:337.3px;height:12.5px;line-height:12.5px;font-size:9.2px">04</div>
<div class="a" style="left:369px;top:349.0px;width:258px;height:12.5px;background:#fff"></div>
<div class="a" style="left:369px;top:360.7px;width:258px;height:0.8px;background:#CDD2DC"></div>
<svg class="a" style="left:379px;top:350.8px" width="54.4" height="9.2" viewBox="0 0 54.4 9.2"><rect x="0.0" y="0" width="3.4" height="2.6" fill="#A4A8B4" opacity="0.52"/><rect x="3.4" y="0" width="3.4" height="2.6" fill="#C0C0C4" opacity="0.47"/><rect x="6.8" y="0" width="3.4" height="2.6" fill="#C0C0C4" opacity="0.27"/><rect x="10.2" y="0" width="3.4" height="2.6" fill="#A9A4A4" opacity="0.37"/><rect x="13.6" y="0" width="3.4" height="2.6" fill="#A4A8B4" opacity="0.47"/><rect x="17.0" y="0" width="3.4" height="2.6" fill="#9898A4" opacity="0.54"/><rect x="20.4" y="0" width="3.4" height="2.6" fill="#E0E0E4" opacity="0.43"/><rect x="23.8" y="0" width="3.4" height="2.6" fill="#8C8894" opacity="0.36"/><rect x="27.2" y="0" width="3.4" height="2.6" fill="#E0E0E4" opacity="0.39"/><rect x="30.6" y="0" width="3.4" height="2.6" fill="#9898A4" opacity="0.29"/><rect x="34.0" y="0" width="3.4" height="2.6" fill="#A9A4A4" opacity="0.36"/><rect x="37.4" y="0" width="3.4" height="2.6" fill="#9898A4" opacity="0.44"/><rect x="40.8" y="0" width="3.4" height="2.6" fill="#B4ACA4" opacity="0.39"/><rect x="44.2" y="0" width="3.4" height="2.6" fill="#E0E0E4" opacity="0.53"/><rect x="47.6" y="0" width="3.4" height="2.6" fill="#8C8894" opacity="0.34"/><rect x="51.0" y="0" width="3.4" height="2.6" fill="#C0C0C4" opacity="0.44"/><rect x="0.0" y="2.6" width="3.4" height="4.0" fill="#8C8894" opacity="0.96"/><rect x="3.4" y="2.6" width="3.4" height="4.0" fill="#C0C0C4" opacity="0.95"/><rect x="6.8" y="2.6" width="3.4" height="4.0" fill="#A4A8B4" opacity="0.88"/><rect x="10.2" y="2.6" width="3.4" height="4.0" fill="#D0C8C0" opacity="0.81"/><rect x="13.6" y="2.6" width="3.4" height="4.0" fill="#B4ACA4" opacity="0.88"/><rect x="17.0" y="2.6" width="3.4" height="4.0" fill="#D0C8C0" opacity="0.94"/><rect x="20.4" y="2.6" width="3.4" height="4.0" fill="#A4A8B4" opacity="0.91"/><rect x="23.8" y="2.6" width="3.4" height="4.0" fill="#8C8894" opacity="0.78"/><rect x="27.2" y="2.6" width="3.4" height="4.0" fill="#B4ACA4" opacity="0.75"/><rect x="30.6" y="2.6" width="3.4" height="4.0" fill="#C0C0C4" opacity="0.79"/><rect x="34.0" y="2.6" width="3.4" height="4.0" fill="#9898A4" opacity="0.94"/><rect x="37.4" y="2.6" width="3.4" height="4.0" fill="#9898A4" opacity="0.78"/><rect x="40.8" y="2.6" width="3.4" height="4.0" fill="#E0E0E4" opacity="0.80"/><rect x="44.2" y="2.6" width="3.4" height="4.0" fill="#A9A4A4" opacity="0.86"/><rect x="47.6" y="2.6" width="3.4" height="4.0" fill="#E0E0E4" opacity="0.94"/><rect x="51.0" y="2.6" width="3.4" height="4.0" fill="#D0C8C0" opacity="0.94"/><rect x="0.0" y="6.6" width="3.4" height="2.6" fill="#D0C8C0" opacity="0.29"/><rect x="3.4" y="6.6" width="3.4" height="2.6" fill="#C0C0C4" opacity="0.40"/><rect x="6.8" y="6.6" width="3.4" height="2.6" fill="#E0E0E4" opacity="0.41"/><rect x="10.2" y="6.6" width="3.4" height="2.6" fill="#A4A8B4" opacity="0.38"/><rect x="13.6" y="6.6" width="3.4" height="2.6" fill="#C0C0C4" opacity="0.44"/><rect x="17.0" y="6.6" width="3.4" height="2.6" fill="#E0E0E4" opacity="0.36"/><rect x="20.4" y="6.6" width="3.4" height="2.6" fill="#8C8894" opacity="0.43"/><rect x="23.8" y="6.6" width="3.4" height="2.6" fill="#D0C8C0" opacity="0.32"/><rect x="27.2" y="6.6" width="3.4" height="2.6" fill="#A4A8B4" opacity="0.47"/><rect x="30.6" y="6.6" width="3.4" height="2.6" fill="#8C8894" opacity="0.34"/><rect x="34.0" y="6.6" width="3.4" height="2.6" fill="#D0C8C0" opacity="0.26"/><rect x="37.4" y="6.6" width="3.4" height="2.6" fill="#D0C8C0" opacity="0.23"/><rect x="40.8" y="6.6" width="3.4" height="2.6" fill="#A4A8B4" opacity="0.31"/><rect x="44.2" y="6.6" width="3.4" height="2.6" fill="#8C8894" opacity="0.32"/><rect x="47.6" y="6.6" width="3.4" height="2.6" fill="#9898A4" opacity="0.27"/><rect x="51.0" y="6.6" width="3.4" height="2.6" fill="#E0E0E4" opacity="0.31"/></svg>
<svg class="a" style="left:456.5px;top:350.8px" width="37.4" height="9.2" viewBox="0 0 37.4 9.2"><rect x="0.0" y="0" width="3.4" height="2.6" fill="#A9A4A4" opacity="0.36"/><rect x="3.4" y="0" width="3.4" height="2.6" fill="#E0E0E4" opacity="0.49"/><rect x="6.8" y="0" width="3.4" height="2.6" fill="#9898A4" opacity="0.34"/><rect x="10.2" y="0" width="3.4" height="2.6" fill="#C0C0C4" opacity="0.35"/><rect x="13.6" y="0" width="3.4" height="2.6" fill="#C0C0C4" opacity="0.28"/><rect x="17.0" y="0" width="3.4" height="2.6" fill="#D0C8C0" opacity="0.55"/><rect x="20.4" y="0" width="3.4" height="2.6" fill="#E0E0E4" opacity="0.43"/><rect x="23.8" y="0" width="3.4" height="2.6" fill="#D0C8C0" opacity="0.33"/><rect x="27.2" y="0" width="3.4" height="2.6" fill="#A4A8B4" opacity="0.38"/><rect x="30.6" y="0" width="3.4" height="2.6" fill="#E0E0E4" opacity="0.48"/><rect x="34.0" y="0" width="3.4" height="2.6" fill="#9898A4" opacity="0.33"/><rect x="0.0" y="2.6" width="3.4" height="4.0" fill="#C0C0C4" opacity="0.80"/><rect x="3.4" y="2.6" width="3.4" height="4.0" fill="#9898A4" opacity="0.81"/><rect x="6.8" y="2.6" width="3.4" height="4.0" fill="#C0C0C4" opacity="0.72"/><rect x="10.2" y="2.6" width="3.4" height="4.0" fill="#8C8894" opacity="0.96"/><rect x="13.6" y="2.6" width="3.4" height="4.0" fill="#E0E0E4" opacity="0.85"/><rect x="17.0" y="2.6" width="3.4" height="4.0" fill="#A9A4A4" opacity="0.96"/><rect x="20.4" y="2.6" width="3.4" height="4.0" fill="#B4ACA4" opacity="0.98"/><rect x="23.8" y="2.6" width="3.4" height="4.0" fill="#A9A4A4" opacity="0.78"/><rect x="27.2" y="2.6" width="3.4" height="4.0" fill="#D0C8C0" opacity="0.89"/><rect x="30.6" y="2.6" width="3.4" height="4.0" fill="#B4ACA4" opacity="0.75"/><rect x="34.0" y="2.6" width="3.4" height="4.0" fill="#9898A4" opacity="0.81"/><rect x="0.0" y="6.6" width="3.4" height="2.6" fill="#D0C8C0" opacity="0.50"/><rect x="3.4" y="6.6" width="3.4" height="2.6" fill="#D0C8C0" opacity="0.25"/><rect x="6.8" y="6.6" width="3.4" height="2.6" fill="#A4A8B4" opacity="0.48"/><rect x="10.2" y="6.6" width="3.4" height="2.6" fill="#C0C0C4" opacity="0.47"/><rect x="13.6" y="6.6" width="3.4" height="2.6" fill="#C0C0C4" opacity="0.45"/><rect x="17.0" y="6.6" width="3.4" height="2.6" fill="#C0C0C4" opacity="0.28"/><rect x="20.4" y="6.6" width="3.4" height="2.6" fill="#E0E0E4" opacity="0.22"/><rect x="23.8" y="6.6" width="3.4" height="2.6" fill="#9898A4" opacity="0.30"/><rect x="27.2" y="6.6" width="3.4" height="2.6" fill="#C0C0C4" opacity="0.48"/><rect x="30.6" y="6.6" width="3.4" height="2.6" fill="#A4A8B4" opacity="0.38"/><rect x="34.0" y="6.6" width="3.4" height="2.6" fill="#E0E0E4" opacity="0.43"/></svg>
<svg class="a" style="left:543px;top:350.8px" width="40.8" height="9.2" viewBox="0 0 40.8 9.2"><rect x="0.0" y="0" width="3.4" height="2.6" fill="#A9A4A4" opacity="0.39"/><rect x="3.4" y="0" width="3.4" height="2.6" fill="#8C8894" opacity="0.33"/><rect x="6.8" y="0" width="3.4" height="2.6" fill="#A9A4A4" opacity="0.36"/><rect x="10.2" y="0" width="3.4" height="2.6" fill="#B4ACA4" opacity="0.30"/><rect x="13.6" y="0" width="3.4" height="2.6" fill="#D0C8C0" opacity="0.49"/><rect x="17.0" y="0" width="3.4" height="2.6" fill="#C0C0C4" opacity="0.39"/><rect x="20.4" y="0" width="3.4" height="2.6" fill="#D0C8C0" opacity="0.49"/><rect x="23.8" y="0" width="3.4" height="2.6" fill="#9898A4" opacity="0.53"/><rect x="27.2" y="0" width="3.4" height="2.6" fill="#D0C8C0" opacity="0.27"/><rect x="30.6" y="0" width="3.4" height="2.6" fill="#8C8894" opacity="0.52"/><rect x="34.0" y="0" width="3.4" height="2.6" fill="#9898A4" opacity="0.48"/><rect x="37.4" y="0" width="3.4" height="2.6" fill="#A9A4A4" opacity="0.53"/><rect x="0.0" y="2.6" width="3.4" height="4.0" fill="#B4ACA4" opacity="0.95"/><rect x="3.4" y="2.6" width="3.4" height="4.0" fill="#A9A4A4" opacity="0.84"/><rect x="6.8" y="2.6" width="3.4" height="4.0" fill="#8C8894" opacity="0.80"/><rect x="10.2" y="2.6" width="3.4" height="4.0" fill="#D0C8C0" opacity="0.84"/><rect x="13.6" y="2.6" width="3.4" height="4.0" fill="#8C8894" opacity="0.74"/><rect x="17.0" y="2.6" width="3.4" height="4.0" fill="#D0C8C0" opacity="0.92"/><rect x="20.4" y="2.6" width="3.4" height="4.0" fill="#9898A4" opacity="0.91"/><rect x="23.8" y="2.6" width="3.4" height="4.0" fill="#9898A4" opacity="0.83"/><rect x="27.2" y="2.6" width="3.4" height="4.0" fill="#9898A4" opacity="0.78"/><rect x="30.6" y="2.6" width="3.4" height="4.0" fill="#B4ACA4" opacity="0.77"/><rect x="34.0" y="2.6" width="3.4" height="4.0" fill="#C0C0C4" opacity="0.78"/><rect x="37.4" y="2.6" width="3.4" height="4.0" fill="#A4A8B4" opacity="0.80"/><rect x="0.0" y="6.6" width="3.4" height="2.6" fill="#9898A4" opacity="0.28"/><rect x="3.4" y="6.6" width="3.4" height="2.6" fill="#A9A4A4" opacity="0.30"/><rect x="6.8" y="6.6" width="3.4" height="2.6" fill="#E0E0E4" opacity="0.23"/><rect x="10.2" y="6.6" width="3.4" height="2.6" fill="#C0C0C4" opacity="0.39"/><rect x="13.6" y="6.6" width="3.4" height="2.6" fill="#D0C8C0" opacity="0.37"/><rect x="17.0" y="6.6" width="3.4" height="2.6" fill="#A4A8B4" opacity="0.24"/><rect x="20.4" y="6.6" width="3.4" height="2.6" fill="#D0C8C0" opacity="0.49"/><rect x="23.8" y="6.6" width="3.4" height="2.6" fill="#B4ACA4" opacity="0.50"/><rect x="27.2" y="6.6" width="3.4" height="2.6" fill="#D0C8C0" opacity="0.48"/><rect x="30.6" y="6.6" width="3.4" height="2.6" fill="#A9A4A4" opacity="0.32"/><rect x="34.0" y="6.6" width="3.4" height="2.6" fill="#B4ACA4" opacity="0.47"/><rect x="37.4" y="6.6" width="3.4" height="2.6" fill="#C0C0C4" opacity="0.45"/></svg>
<div class="a" style="left:379px;top:359.3px;width:65px;height:1.6px;background:rgba(200,200,210,0.35)"></div>
<div class="a t" style="left:369px;top:349.8px;height:12.5px;line-height:12.5px;font-size:9.2px">04</div>
<div class="a" style="left:369px;top:361.5px;width:258px;height:12.5px;background:#D4E2FA"></div>
<div class="a" style="left:369px;top:373.2px;width:258px;height:0.8px;background:#CDD2DC"></div>
<svg class="a" style="left:379px;top:363.3px" width="40.8" height="9.2" viewBox="0 0 40.8 9.2"><rect x="0.0" y="0" width="3.4" height="2.6" fill="#949CB4" opacity="0.29"/><rect x="3.4" y="0" width="3.4" height="2.6" fill="#98A4BC" opacity="0.38"/><rect x="6.8" y="0" width="3.4" height="2.6" fill="#788098" opacity="0.40"/><rect x="10.2" y="0" width="3.4" height="2.6" fill="#C8D4EC" opacity="0.25"/><rect x="13.6" y="0" width="3.4" height="2.6" fill="#949CB4" opacity="0.31"/><rect x="17.0" y="0" width="3.4" height="2.6" fill="#A8B4CC" opacity="0.26"/><rect x="20.4" y="0" width="3.4" height="2.6" fill="#A8B4CC" opacity="0.32"/><rect x="23.8" y="0" width="3.4" height="2.6" fill="#7C849C" opacity="0.29"/><rect x="27.2" y="0" width="3.4" height="2.6" fill="#7C849C" opacity="0.41"/><rect x="30.6" y="0" width="3.4" height="2.6" fill="#A0ACC4" opacity="0.46"/><rect x="34.0" y="0" width="3.4" height="2.6" fill="#A0ACC4" opacity="0.43"/><rect x="37.4" y="0" width="3.4" height="2.6" fill="#8894AC" opacity="0.52"/><rect x="0.0" y="2.6" width="3.4" height="4.0" fill="#C8D4EC" opacity="0.93"/><rect x="3.4" y="2.6" width="3.4" height="4.0" fill="#7C849C" opacity="0.76"/><rect x="6.8" y="2.6" width="3.4" height="4.0" fill="#A0ACC4" opacity="0.87"/><rect x="10.2" y="2.6" width="3.4" height="4.0" fill="#A0ACC4" opacity="0.70"/><rect x="13.6" y="2.6" width="3.4" height="4.0" fill="#A8B4CC" opacity="0.95"/><rect x="17.0" y="2.6" width="3.4" height="4.0" fill="#98A4BC" opacity="0.86"/><rect x="20.4" y="2.6" width="3.4" height="4.0" fill="#788098" opacity="0.80"/><rect x="23.8" y="2.6" width="3.4" height="4.0" fill="#C8D4EC" opacity="0.73"/><rect x="27.2" y="2.6" width="3.4" height="4.0" fill="#A8B4CC" opacity="0.97"/><rect x="30.6" y="2.6" width="3.4" height="4.0" fill="#C8D4EC" opacity="0.74"/><rect x="34.0" y="2.6" width="3.4" height="4.0" fill="#949CB4" opacity="0.77"/><rect x="37.4" y="2.6" width="3.4" height="4.0" fill="#788098" opacity="0.71"/><rect x="0.0" y="6.6" width="3.4" height="2.6" fill="#788098" opacity="0.37"/><rect x="3.4" y="6.6" width="3.4" height="2.6" fill="#98A4BC" opacity="0.31"/><rect x="6.8" y="6.6" width="3.4" height="2.6" fill="#C8D4EC" opacity="0.49"/><rect x="10.2" y="6.6" width="3.4" height="2.6" fill="#8894AC" opacity="0.24"/><rect x="13.6" y="6.6" width="3.4" height="2.6" fill="#A0ACC4" opacity="0.44"/><rect x="17.0" y="6.6" width="3.4" height="2.6" fill="#788098" opacity="0.43"/><rect x="20.4" y="6.6" width="3.4" height="2.6" fill="#A8B4CC" opacity="0.37"/><rect x="23.8" y="6.6" width="3.4" height="2.6" fill="#98A4BC" opacity="0.29"/><rect x="27.2" y="6.6" width="3.4" height="2.6" fill="#8894AC" opacity="0.49"/><rect x="30.6" y="6.6" width="3.4" height="2.6" fill="#C8D4EC" opacity="0.33"/><rect x="34.0" y="6.6" width="3.4" height="2.6" fill="#98A4BC" opacity="0.36"/><rect x="37.4" y="6.6" width="3.4" height="2.6" fill="#7C849C" opacity="0.21"/></svg>
<svg class="a" style="left:456.5px;top:363.3px" width="30.6" height="9.2" viewBox="0 0 30.6 9.2"><rect x="0.0" y="0" width="3.4" height="2.6" fill="#8894AC" opacity="0.32"/><rect x="3.4" y="0" width="3.4" height="2.6" fill="#7C849C" opacity="0.30"/><rect x="6.8" y="0" width="3.4" height="2.6" fill="#949CB4" opacity="0.33"/><rect x="10.2" y="0" width="3.4" height="2.6" fill="#98A4BC" opacity="0.26"/><rect x="13.6" y="0" width="3.4" height="2.6" fill="#A0ACC4" opacity="0.33"/><rect x="17.0" y="0" width="3.4" height="2.6" fill="#C8D4EC" opacity="0.41"/><rect x="20.4" y="0" width="3.4" height="2.6" fill="#C8D4EC" opacity="0.28"/><rect x="23.8" y="0" width="3.4" height="2.6" fill="#8894AC" opacity="0.47"/><rect x="27.2" y="0" width="3.4" height="2.6" fill="#98A4BC" opacity="0.33"/><rect x="0.0" y="2.6" width="3.4" height="4.0" fill="#C8D4EC" opacity="0.85"/><rect x="3.4" y="2.6" width="3.4" height="4.0" fill="#949CB4" opacity="0.73"/><rect x="6.8" y="2.6" width="3.4" height="4.0" fill="#8894AC" opacity="0.82"/><rect x="10.2" y="2.6" width="3.4" height="4.0" fill="#7C849C" opacity="0.86"/><rect x="13.6" y="2.6" width="3.4" height="4.0" fill="#A0ACC4" opacity="0.96"/><rect x="17.0" y="2.6" width="3.4" height="4.0" fill="#7C849C" opacity="0.90"/><rect x="20.4" y="2.6" width="3.4" height="4.0" fill="#C8D4EC" opacity="0.92"/><rect x="23.8" y="2.6" width="3.4" height="4.0" fill="#7C849C" opacity="0.98"/><rect x="27.2" y="2.6" width="3.4" height="4.0" fill="#98A4BC" opacity="0.98"/><rect x="0.0" y="6.6" width="3.4" height="2.6" fill="#A8B4CC" opacity="0.41"/><rect x="3.4" y="6.6" width="3.4" height="2.6" fill="#98A4BC" opacity="0.32"/><rect x="6.8" y="6.6" width="3.4" height="2.6" fill="#98A4BC" opacity="0.43"/><rect x="10.2" y="6.6" width="3.4" height="2.6" fill="#788098" opacity="0.32"/><rect x="13.6" y="6.6" width="3.4" height="2.6" fill="#788098" opacity="0.41"/><rect x="17.0" y="6.6" width="3.4" height="2.6" fill="#788098" opacity="0.44"/><rect x="20.4" y="6.6" width="3.4" height="2.6" fill="#98A4BC" opacity="0.30"/><rect x="23.8" y="6.6" width="3.4" height="2.6" fill="#7C849C" opacity="0.49"/><rect x="27.2" y="6.6" width="3.4" height="2.6" fill="#788098" opacity="0.27"/></svg>
<svg class="a" style="left:543px;top:363.3px" width="78.2" height="9.2" viewBox="0 0 78.2 9.2"><rect x="0.0" y="0" width="3.4" height="2.6" fill="#A8B4CC" opacity="0.45"/><rect x="3.4" y="0" width="3.4" height="2.6" fill="#98A4BC" opacity="0.36"/><rect x="6.8" y="0" width="3.4" height="2.6" fill="#7C849C" opacity="0.27"/><rect x="10.2" y="0" width="3.4" height="2.6" fill="#A8B4CC" opacity="0.31"/><rect x="13.6" y="0" width="3.4" height="2.6" fill="#98A4BC" opacity="0.32"/><rect x="17.0" y="0" width="3.4" height="2.6" fill="#A8B4CC" opacity="0.54"/><rect x="20.4" y="0" width="3.4" height="2.6" fill="#C8D4EC" opacity="0.44"/><rect x="23.8" y="0" width="3.4" height="2.6" fill="#98A4BC" opacity="0.26"/><rect x="27.2" y="0" width="3.4" height="2.6" fill="#949CB4" opacity="0.53"/><rect x="30.6" y="0" width="3.4" height="2.6" fill="#949CB4" opacity="0.44"/><rect x="34.0" y="0" width="3.4" height="2.6" fill="#98A4BC" opacity="0.44"/><rect x="37.4" y="0" width="3.4" height="2.6" fill="#949CB4" opacity="0.29"/><rect x="40.8" y="0" width="3.4" height="2.6" fill="#98A4BC" opacity="0.38"/><rect x="44.2" y="0" width="3.4" height="2.6" fill="#98A4BC" opacity="0.34"/><rect x="47.6" y="0" width="3.4" height="2.6" fill="#949CB4" opacity="0.35"/><rect x="51.0" y="0" width="3.4" height="2.6" fill="#7C849C" opacity="0.29"/><rect x="54.4" y="0" width="3.4" height="2.6" fill="#949CB4" opacity="0.28"/><rect x="57.8" y="0" width="3.4" height="2.6" fill="#7C849C" opacity="0.38"/><rect x="61.2" y="0" width="3.4" height="2.6" fill="#7C849C" opacity="0.52"/><rect x="64.6" y="0" width="3.4" height="2.6" fill="#A8B4CC" opacity="0.42"/><rect x="68.0" y="0" width="3.4" height="2.6" fill="#949CB4" opacity="0.32"/><rect x="71.4" y="0" width="3.4" height="2.6" fill="#8894AC" opacity="0.47"/><rect x="74.8" y="0" width="3.4" height="2.6" fill="#949CB4" opacity="0.50"/><rect x="0.0" y="2.6" width="3.4" height="4.0" fill="#A0ACC4" opacity="0.90"/><rect x="3.4" y="2.6" width="3.4" height="4.0" fill="#A0ACC4" opacity="0.86"/><rect x="6.8" y="2.6" width="3.4" height="4.0" fill="#788098" opacity="0.84"/><rect x="10.2" y="2.6" width="3.4" height="4.0" fill="#949CB4" opacity="0.88"/><rect x="13.6" y="2.6" width="3.4" height="4.0" fill="#C8D4EC" opacity="0.95"/><rect x="17.0" y="2.6" width="3.4" height="4.0" fill="#98A4BC" opacity="0.77"/><rect x="20.4" y="2.6" width="3.4" height="4.0" fill="#A0ACC4" opacity="0.76"/><rect x="23.8" y="2.6" width="3.4" height="4.0" fill="#A8B4CC" opacity="0.99"/><rect x="27.2" y="2.6" width="3.4" height="4.0" fill="#A8B4CC" opacity="0.70"/><rect x="30.6" y="2.6" width="3.4" height="4.0" fill="#788098" opacity="0.75"/><rect x="34.0" y="2.6" width="3.4" height="4.0" fill="#A0ACC4" opacity="0.80"/><rect x="37.4" y="2.6" width="3.4" height="4.0" fill="#788098" opacity="0.85"/><rect x="40.8" y="2.6" width="3.4" height="4.0" fill="#949CB4" opacity="0.96"/><rect x="44.2" y="2.6" width="3.4" height="4.0" fill="#A0ACC4" opacity="0.79"/><rect x="47.6" y="2.6" width="3.4" height="4.0" fill="#98A4BC" opacity="0.75"/><rect x="51.0" y="2.6" width="3.4" height="4.0" fill="#8894AC" opacity="0.88"/><rect x="54.4" y="2.6" width="3.4" height="4.0" fill="#788098" opacity="0.83"/><rect x="57.8" y="2.6" width="3.4" height="4.0" fill="#98A4BC" opacity="0.86"/><rect x="61.2" y="2.6" width="3.4" height="4.0" fill="#C8D4EC" opacity="0.81"/><rect x="64.6" y="2.6" width="3.4" height="4.0" fill="#8894AC" opacity="0.86"/><rect x="68.0" y="2.6" width="3.4" height="4.0" fill="#7C849C" opacity="0.83"/><rect x="71.4" y="2.6" width="3.4" height="4.0" fill="#788098" opacity="0.74"/><rect x="74.8" y="2.6" width="3.4" height="4.0" fill="#A0ACC4" opacity="0.88"/><rect x="0.0" y="6.6" width="3.4" height="2.6" fill="#949CB4" opacity="0.45"/><rect x="3.4" y="6.6" width="3.4" height="2.6" fill="#8894AC" opacity="0.42"/><rect x="6.8" y="6.6" width="3.4" height="2.6" fill="#C8D4EC" opacity="0.28"/><rect x="10.2" y="6.6" width="3.4" height="2.6" fill="#7C849C" opacity="0.32"/><rect x="13.6" y="6.6" width="3.4" height="2.6" fill="#8894AC" opacity="0.20"/><rect x="17.0" y="6.6" width="3.4" height="2.6" fill="#8894AC" opacity="0.35"/><rect x="20.4" y="6.6" width="3.4" height="2.6" fill="#7C849C" opacity="0.33"/><rect x="23.8" y="6.6" width="3.4" height="2.6" fill="#949CB4" opacity="0.46"/><rect x="27.2" y="6.6" width="3.4" height="2.6" fill="#8894AC" opacity="0.31"/><rect x="30.6" y="6.6" width="3.4" height="2.6" fill="#C8D4EC" opacity="0.41"/><rect x="34.0" y="6.6" width="3.4" height="2.6" fill="#949CB4" opacity="0.42"/><rect x="37.4" y="6.6" width="3.4" height="2.6" fill="#949CB4" opacity="0.31"/><rect x="40.8" y="6.6" width="3.4" height="2.6" fill="#A8B4CC" opacity="0.39"/><rect x="44.2" y="6.6" width="3.4" height="2.6" fill="#98A4BC" opacity="0.44"/><rect x="47.6" y="6.6" width="3.4" height="2.6" fill="#C8D4EC" opacity="0.31"/><rect x="51.0" y="6.6" width="3.4" height="2.6" fill="#949CB4" opacity="0.26"/><rect x="54.4" y="6.6" width="3.4" height="2.6" fill="#949CB4" opacity="0.44"/><rect x="57.8" y="6.6" width="3.4" height="2.6" fill="#A8B4CC" opacity="0.37"/><rect x="61.2" y="6.6" width="3.4" height="2.6" fill="#A0ACC4" opacity="0.23"/><rect x="64.6" y="6.6" width="3.4" height="2.6" fill="#788098" opacity="0.30"/><rect x="68.0" y="6.6" width="3.4" height="2.6" fill="#A0ACC4" opacity="0.49"/><rect x="71.4" y="6.6" width="3.4" height="2.6" fill="#A0ACC4" opacity="0.49"/><rect x="74.8" y="6.6" width="3.4" height="2.6" fill="#98A4BC" opacity="0.21"/></svg>
<div class="a" style="left:379px;top:371.8px;width:65px;height:1.6px;background:rgba(200,200,210,0.35)"></div>
<div class="a t" style="left:369px;top:362.3px;height:12.5px;line-height:12.5px;font-size:9.2px">04</div>
<div class="a" style="left:369px;top:374.0px;width:258px;height:12.5px;background:#fff"></div>
<div class="a" style="left:369px;top:385.7px;width:258px;height:0.8px;background:#CDD2DC"></div>
<svg class="a" style="left:379px;top:375.8px" width="40.8" height="9.2" viewBox="0 0 40.8 9.2"><rect x="0.0" y="0" width="3.4" height="2.6" fill="#A4A8B4" opacity="0.42"/><rect x="3.4" y="0" width="3.4" height="2.6" fill="#E0E0E4" opacity="0.34"/><rect x="6.8" y="0" width="3.4" height="2.6" fill="#A4A8B4" opacity="0.41"/><rect x="10.2" y="0" width="3.4" height="2.6" fill="#B4ACA4" opacity="0.41"/><rect x="13.6" y="0" width="3.4" height="2.6" fill="#B4ACA4" opacity="0.37"/><rect x="17.0" y="0" width="3.4" height="2.6" fill="#8C8894" opacity="0.26"/><rect x="20.4" y="0" width="3.4" height="2.6" fill="#8C8894" opacity="0.39"/><rect x="23.8" y="0" width="3.4" height="2.6" fill="#C0C0C4" opacity="0.45"/><rect x="27.2" y="0" width="3.4" height="2.6" fill="#D0C8C0" opacity="0.28"/><rect x="30.6" y="0" width="3.4" height="2.6" fill="#8C8894" opacity="0.40"/><rect x="34.0" y="0" width="3.4" height="2.6" fill="#9898A4" opacity="0.51"/><rect x="37.4" y="0" width="3.4" height="2.6" fill="#B4ACA4" opacity="0.40"/><rect x="0.0" y="2.6" width="3.4" height="4.0" fill="#E0E0E4" opacity="0.93"/><rect x="3.4" y="2.6" width="3.4" height="4.0" fill="#8C8894" opacity="0.91"/><rect x="6.8" y="2.6" width="3.4" height="4.0" fill="#A9A4A4" opacity="0.75"/><rect x="10.2" y="2.6" width="3.4" height="4.0" fill="#8C8894" opacity="0.81"/><rect x="13.6" y="2.6" width="3.4" height="4.0" fill="#A9A4A4" opacity="0.95"/><rect x="17.0" y="2.6" width="3.4" height="4.0" fill="#9898A4" opacity="0.73"/><rect x="20.4" y="2.6" width="3.4" height="4.0" fill="#A4A8B4" opacity="0.91"/><rect x="23.8" y="2.6" width="3.4" height="4.0" fill="#B4ACA4" opacity="0.89"/><rect x="27.2" y="2.6" width="3.4" height="4.0" fill="#A4A8B4" opacity="0.94"/><rect x="30.6" y="2.6" width="3.4" height="4.0" fill="#D0C8C0" opacity="0.85"/><rect x="34.0" y="2.6" width="3.4" height="4.0" fill="#D0C8C0" opacity="0.82"/><rect x="37.4" y="2.6" width="3.4" height="4.0" fill="#C0C0C4" opacity="0.89"/><rect x="0.0" y="6.6" width="3.4" height="2.6" fill="#A9A4A4" opacity="0.31"/><rect x="3.4" y="6.6" width="3.4" height="2.6" fill="#C0C0C4" opacity="0.41"/><rect x="6.8" y="6.6" width="3.4" height="2.6" fill="#C0C0C4" opacity="0.44"/><rect x="10.2" y="6.6" width="3.4" height="2.6" fill="#A4A8B4" opacity="0.41"/><rect x="13.6" y="6.6" width="3.4" height="2.6" fill="#C0C0C4" opacity="0.48"/><rect x="17.0" y="6.6" width="3.4" height="2.6" fill="#B4ACA4" opacity="0.45"/><rect x="20.4" y="6.6" width="3.4" height="2.6" fill="#C0C0C4" opacity="0.40"/><rect x="23.8" y="6.6" width="3.4" height="2.6" fill="#D0C8C0" opacity="0.25"/><rect x="27.2" y="6.6" width="3.4" height="2.6" fill="#A4A8B4" opacity="0.46"/><rect x="30.6" y="6.6" width="3.4" height="2.6" fill="#9898A4" opacity="0.37"/><rect x="34.0" y="6.6" width="3.4" height="2.6" fill="#B4ACA4" opacity="0.38"/><rect x="37.4" y="6.6" width="3.4" height="2.6" fill="#9898A4" opacity="0.25"/></svg>
<svg class="a" style="left:456.5px;top:375.8px" width="34.0" height="9.2" viewBox="0 0 34.0 9.2"><rect x="0.0" y="0" width="3.4" height="2.6" fill="#A9A4A4" opacity="0.26"/><rect x="3.4" y="0" width="3.4" height="2.6" fill="#A9A4A4" opacity="0.30"/><rect x="6.8" y="0" width="3.4" height="2.6" fill="#E0E0E4" opacity="0.50"/><rect x="10.2" y="0" width="3.4" height="2.6" fill="#B4ACA4" opacity="0.49"/><rect x="13.6" y="0" width="3.4" height="2.6" fill="#C0C0C4" opacity="0.45"/><rect x="17.0" y="0" width="3.4" height="2.6" fill="#8C8894" opacity="0.29"/><rect x="20.4" y="0" width="3.4" height="2.6" fill="#D0C8C0" opacity="0.36"/><rect x="23.8" y="0" width="3.4" height="2.6" fill="#9898A4" opacity="0.26"/><rect x="27.2" y="0" width="3.4" height="2.6" fill="#A9A4A4" opacity="0.51"/><rect x="30.6" y="0" width="3.4" height="2.6" fill="#A9A4A4" opacity="0.35"/><rect x="0.0" y="2.6" width="3.4" height="4.0" fill="#E0E0E4" opacity="0.89"/><rect x="3.4" y="2.6" width="3.4" height="4.0" fill="#C0C0C4" opacity="0.72"/><rect x="6.8" y="2.6" width="3.4" height="4.0" fill="#B4ACA4" opacity="0.87"/><rect x="10.2" y="2.6" width="3.4" height="4.0" fill="#C0C0C4" opacity="0.83"/><rect x="13.6" y="2.6" width="3.4" height="4.0" fill="#D0C8C0" opacity="0.77"/><rect x="17.0" y="2.6" width="3.4" height="4.0" fill="#C0C0C4" opacity="0.75"/><rect x="20.4" y="2.6" width="3.4" height="4.0" fill="#9898A4" opacity="0.79"/><rect x="23.8" y="2.6" width="3.4" height="4.0" fill="#E0E0E4" opacity="0.79"/><rect x="27.2" y="2.6" width="3.4" height="4.0" fill="#A4A8B4" opacity="0.99"/><rect x="30.6" y="2.6" width="3.4" height="4.0" fill="#E0E0E4" opacity="0.99"/><rect x="0.0" y="6.6" width="3.4" height="2.6" fill="#A9A4A4" opacity="0.27"/><rect x="3.4" y="6.6" width="3.4" height="2.6" fill="#B4ACA4" opacity="0.40"/><rect x="6.8" y="6.6" width="3.4" height="2.6" fill="#D0C8C0" opacity="0.32"/><rect x="10.2" y="6.6" width="3.4" height="2.6" fill="#B4ACA4" opacity="0.46"/><rect x="13.6" y="6.6" width="3.4" height="2.6" fill="#E0E0E4" opacity="0.21"/><rect x="17.0" y="6.6" width="3.4" height="2.6" fill="#D0C8C0" opacity="0.23"/><rect x="20.4" y="6.6" width="3.4" height="2.6" fill="#9898A4" opacity="0.31"/><rect x="23.8" y="6.6" width="3.4" height="2.6" fill="#9898A4" opacity="0.20"/><rect x="27.2" y="6.6" width="3.4" height="2.6" fill="#A4A8B4" opacity="0.32"/><rect x="30.6" y="6.6" width="3.4" height="2.6" fill="#8C8894" opacity="0.23"/></svg>
<svg class="a" style="left:543px;top:375.8px" width="78.2" height="9.2" viewBox="0 0 78.2 9.2"><rect x="0.0" y="0" width="3.4" height="2.6" fill="#B4ACA4" opacity="0.35"/><rect x="3.4" y="0" width="3.4" height="2.6" fill="#A9A4A4" opacity="0.54"/><rect x="6.8" y="0" width="3.4" height="2.6" fill="#B4ACA4" opacity="0.50"/><rect x="10.2" y="0" width="3.4" height="2.6" fill="#8C8894" opacity="0.42"/><rect x="13.6" y="0" width="3.4" height="2.6" fill="#B4ACA4" opacity="0.31"/><rect x="17.0" y="0" width="3.4" height="2.6" fill="#A4A8B4" opacity="0.35"/><rect x="20.4" y="0" width="3.4" height="2.6" fill="#B4ACA4" opacity="0.26"/><rect x="23.8" y="0" width="3.4" height="2.6" fill="#C0C0C4" opacity="0.35"/><rect x="27.2" y="0" width="3.4" height="2.6" fill="#9898A4" opacity="0.32"/><rect x="30.6" y="0" width="3.4" height="2.6" fill="#9898A4" opacity="0.28"/><rect x="34.0" y="0" width="3.4" height="2.6" fill="#A4A8B4" opacity="0.41"/><rect x="37.4" y="0" width="3.4" height="2.6" fill="#9898A4" opacity="0.42"/><rect x="40.8" y="0" width="3.4" height="2.6" fill="#E0E0E4" opacity="0.50"/><rect x="44.2" y="0" width="3.4" height="2.6" fill="#D0C8C0" opacity="0.30"/><rect x="47.6" y="0" width="3.4" height="2.6" fill="#8C8894" opacity="0.31"/><rect x="51.0" y="0" width="3.4" height="2.6" fill="#B4ACA4" opacity="0.36"/><rect x="54.4" y="0" width="3.4" height="2.6" fill="#D0C8C0" opacity="0.34"/><rect x="57.8" y="0" width="3.4" height="2.6" fill="#E0E0E4" opacity="0.40"/><rect x="61.2" y="0" width="3.4" height="2.6" fill="#D0C8C0" opacity="0.51"/><rect x="64.6" y="0" width="3.4" height="2.6" fill="#9898A4" opacity="0.53"/><rect x="68.0" y="0" width="3.4" height="2.6" fill="#A4A8B4" opacity="0.43"/><rect x="71.4" y="0" width="3.4" height="2.6" fill="#E0E0E4" opacity="0.43"/><rect x="74.8" y="0" width="3.4" height="2.6" fill="#8C8894" opacity="0.41"/><rect x="0.0" y="2.6" width="3.4" height="4.0" fill="#B4ACA4" opacity="0.88"/><rect x="3.4" y="2.6" width="3.4" height="4.0" fill="#D0C8C0" opacity="0.74"/><rect x="6.8" y="2.6" width="3.4" height="4.0" fill="#A9A4A4" opacity="0.90"/><rect x="10.2" y="2.6" width="3.4" height="4.0" fill="#A9A4A4" opacity="0.86"/><rect x="13.6" y="2.6" width="3.4" height="4.0" fill="#A4A8B4" opacity="0.92"/><rect x="17.0" y="2.6" width="3.4" height="4.0" fill="#B4ACA4" opacity="0.71"/><rect x="20.4" y="2.6" width="3.4" height="4.0" fill="#9898A4" opacity="0.79"/><rect x="23.8" y="2.6" width="3.4" height="4.0" fill="#B4ACA4" opacity="0.91"/><rect x="27.2" y="2.6" width="3.4" height="4.0" fill="#9898A4" opacity="0.93"/><rect x="30.6" y="2.6" width="3.4" height="4.0" fill="#D0C8C0" opacity="0.80"/><rect x="34.0" y="2.6" width="3.4" height="4.0" fill="#A9A4A4" opacity="0.72"/><rect x="37.4" y="2.6" width="3.4" height="4.0" fill="#8C8894" opacity="0.94"/><rect x="40.8" y="2.6" width="3.4" height="4.0" fill="#A4A8B4" opacity="0.76"/><rect x="44.2" y="2.6" width="3.4" height="4.0" fill="#A4A8B4" opacity="0.73"/><rect x="47.6" y="2.6" width="3.4" height="4.0" fill="#A4A8B4" opacity="0.74"/><rect x="51.0" y="2.6" width="3.4" height="4.0" fill="#B4ACA4" opacity="0.78"/><rect x="54.4" y="2.6" width="3.4" height="4.0" fill="#B4ACA4" opacity="0.95"/><rect x="57.8" y="2.6" width="3.4" height="4.0" fill="#E0E0E4" opacity="0.93"/><rect x="61.2" y="2.6" width="3.4" height="4.0" fill="#9898A4" opacity="0.98"/><rect x="64.6" y="2.6" width="3.4" height="4.0" fill="#9898A4" opacity="0.71"/><rect x="68.0" y="2.6" width="3.4" height="4.0" fill="#8C8894" opacity="0.97"/><rect x="71.4" y="2.6" width="3.4" height="4.0" fill="#C0C0C4" opacity="0.90"/><rect x="74.8" y="2.6" width="3.4" height="4.0" fill="#E0E0E4" opacity="0.77"/><rect x="0.0" y="6.6" width="3.4" height="2.6" fill="#B4ACA4" opacity="0.31"/><rect x="3.4" y="6.6" width="3.4" height="2.6" fill="#A9A4A4" opacity="0.25"/><rect x="6.8" y="6.6" width="3.4" height="2.6" fill="#A9A4A4" opacity="0.28"/><rect x="10.2" y="6.6" width="3.4" height="2.6" fill="#D0C8C0" opacity="0.41"/><rect x="13.6" y="6.6" width="3.4" height="2.6" fill="#C0C0C4" opacity="0.32"/><rect x="17.0" y="6.6" width="3.4" height="2.6" fill="#9898A4" opacity="0.33"/><rect x="20.4" y="6.6" width="3.4" height="2.6" fill="#A4A8B4" opacity="0.25"/><rect x="23.8" y="6.6" width="3.4" height="2.6" fill="#C0C0C4" opacity="0.37"/><rect x="27.2" y="6.6" width="3.4" height="2.6" fill="#9898A4" opacity="0.37"/><rect x="30.6" y="6.6" width="3.4" height="2.6" fill="#D0C8C0" opacity="0.37"/><rect x="34.0" y="6.6" width="3.4" height="2.6" fill="#A4A8B4" opacity="0.48"/><rect x="37.4" y="6.6" width="3.4" height="2.6" fill="#8C8894" opacity="0.48"/><rect x="40.8" y="6.6" width="3.4" height="2.6" fill="#A9A4A4" opacity="0.45"/><rect x="44.2" y="6.6" width="3.4" height="2.6" fill="#A4A8B4" opacity="0.47"/><rect x="47.6" y="6.6" width="3.4" height="2.6" fill="#C0C0C4" opacity="0.49"/><rect x="51.0" y="6.6" width="3.4" height="2.6" fill="#A9A4A4" opacity="0.21"/><rect x="54.4" y="6.6" width="3.4" height="2.6" fill="#8C8894" opacity="0.26"/><rect x="57.8" y="6.6" width="3.4" height="2.6" fill="#8C8894" opacity="0.42"/><rect x="61.2" y="6.6" width="3.4" height="2.6" fill="#A9A4A4" opacity="0.33"/><rect x="64.6" y="6.6" width="3.4" height="2.6" fill="#B4ACA4" opacity="0.50"/><rect x="68.0" y="6.6" width="3.4" height="2.6" fill="#D0C8C0" opacity="0.28"/><rect x="71.4" y="6.6" width="3.4" height="2.6" fill="#A9A4A4" opacity="0.30"/><rect x="74.8" y="6.6" width="3.4" height="2.6" fill="#B4ACA4" opacity="0.33"/></svg>
<div class="a" style="left:379px;top:384.3px;width:65px;height:1.6px;background:rgba(200,200,210,0.35)"></div>
<div class="a t" style="left:369px;top:374.8px;height:12.5px;line-height:12.5px;font-size:9.2px">04</div>
<div class="a" style="left:369px;top:386.5px;width:258px;height:12.5px;background:#D4E2FA"></div>
<div class="a" style="left:369px;top:398.2px;width:258px;height:0.8px;background:#CDD2DC"></div>
<svg class="a" style="left:379px;top:388.3px" width="54.4" height="9.2" viewBox="0 0 54.4 9.2"><rect x="0.0" y="0" width="3.4" height="2.6" fill="#788098" opacity="0.46"/><rect x="3.4" y="0" width="3.4" height="2.6" fill="#C8D4EC" opacity="0.40"/><rect x="6.8" y="0" width="3.4" height="2.6" fill="#A0ACC4" opacity="0.38"/><rect x="10.2" y="0" width="3.4" height="2.6" fill="#7C849C" opacity="0.40"/><rect x="13.6" y="0" width="3.4" height="2.6" fill="#A0ACC4" opacity="0.26"/><rect x="17.0" y="0" width="3.4" height="2.6" fill="#949CB4" opacity="0.30"/><rect x="20.4" y="0" width="3.4" height="2.6" fill="#7C849C" opacity="0.54"/><rect x="23.8" y="0" width="3.4" height="2.6" fill="#A0ACC4" opacity="0.41"/><rect x="27.2" y="0" width="3.4" height="2.6" fill="#A0ACC4" opacity="0.54"/><rect x="30.6" y="0" width="3.4" height="2.6" fill="#7C849C" opacity="0.36"/><rect x="34.0" y="0" width="3.4" height="2.6" fill="#A8B4CC" opacity="0.28"/><rect x="37.4" y="0" width="3.4" height="2.6" fill="#949CB4" opacity="0.29"/><rect x="40.8" y="0" width="3.4" height="2.6" fill="#C8D4EC" opacity="0.45"/><rect x="44.2" y="0" width="3.4" height="2.6" fill="#A0ACC4" opacity="0.46"/><rect x="47.6" y="0" width="3.4" height="2.6" fill="#98A4BC" opacity="0.40"/><rect x="51.0" y="0" width="3.4" height="2.6" fill="#C8D4EC" opacity="0.29"/><rect x="0.0" y="2.6" width="3.4" height="4.0" fill="#788098" opacity="0.91"/><rect x="3.4" y="2.6" width="3.4" height="4.0" fill="#7C849C" opacity="0.97"/><rect x="6.8" y="2.6" width="3.4" height="4.0" fill="#7C849C" opacity="0.88"/><rect x="10.2" y="2.6" width="3.4" height="4.0" fill="#A0ACC4" opacity="0.80"/><rect x="13.6" y="2.6" width="3.4" height="4.0" fill="#8894AC" opacity="0.86"/><rect x="17.0" y="2.6" width="3.4" height="4.0" fill="#7C849C" opacity="0.90"/><rect x="20.4" y="2.6" width="3.4" height="4.0" fill="#7C849C" opacity="0.88"/><rect x="23.8" y="2.6" width="3.4" height="4.0" fill="#C8D4EC" opacity="0.95"/><rect x="27.2" y="2.6" width="3.4" height="4.0" fill="#A8B4CC" opacity="0.95"/><rect x="30.6" y="2.6" width="3.4" height="4.0" fill="#8894AC" opacity="0.91"/><rect x="34.0" y="2.6" width="3.4" height="4.0" fill="#98A4BC" opacity="0.81"/><rect x="37.4" y="2.6" width="3.4" height="4.0" fill="#A0ACC4" opacity="0.71"/><rect x="40.8" y="2.6" width="3.4" height="4.0" fill="#949CB4" opacity="0.79"/><rect x="44.2" y="2.6" width="3.4" height="4.0" fill="#8894AC" opacity="0.91"/><rect x="47.6" y="2.6" width="3.4" height="4.0" fill="#C8D4EC" opacity="0.99"/><rect x="51.0" y="2.6" width="3.4" height="4.0" fill="#7C849C" opacity="0.80"/><rect x="0.0" y="6.6" width="3.4" height="2.6" fill="#C8D4EC" opacity="0.37"/><rect x="3.4" y="6.6" width="3.4" height="2.6" fill="#949CB4" opacity="0.25"/><rect x="6.8" y="6.6" width="3.4" height="2.6" fill="#8894AC" opacity="0.21"/><rect x="10.2" y="6.6" width="3.4" height="2.6" fill="#C8D4EC" opacity="0.50"/><rect x="13.6" y="6.6" width="3.4" height="2.6" fill="#C8D4EC" opacity="0.23"/><rect x="17.0" y="6.6" width="3.4" height="2.6" fill="#788098" opacity="0.49"/><rect x="20.4" y="6.6" width="3.4" height="2.6" fill="#949CB4" opacity="0.23"/><rect x="23.8" y="6.6" width="3.4" height="2.6" fill="#C8D4EC" opacity="0.49"/><rect x="27.2" y="6.6" width="3.4" height="2.6" fill="#C8D4EC" opacity="0.26"/><rect x="30.6" y="6.6" width="3.4" height="2.6" fill="#788098" opacity="0.20"/><rect x="34.0" y="6.6" width="3.4" height="2.6" fill="#8894AC" opacity="0.39"/><rect x="37.4" y="6.6" width="3.4" height="2.6" fill="#949CB4" opacity="0.40"/><rect x="40.8" y="6.6" width="3.4" height="2.6" fill="#8894AC" opacity="0.24"/><rect x="44.2" y="6.6" width="3.4" height="2.6" fill="#98A4BC" opacity="0.21"/><rect x="47.6" y="6.6" width="3.4" height="2.6" fill="#A8B4CC" opacity="0.45"/><rect x="51.0" y="6.6" width="3.4" height="2.6" fill="#949CB4" opacity="0.31"/></svg>
<svg class="a" style="left:456.5px;top:388.3px" width="37.4" height="9.2" viewBox="0 0 37.4 9.2"><rect x="0.0" y="0" width="3.4" height="2.6" fill="#7C849C" opacity="0.28"/><rect x="3.4" y="0" width="3.4" height="2.6" fill="#949CB4" opacity="0.47"/><rect x="6.8" y="0" width="3.4" height="2.6" fill="#788098" opacity="0.36"/><rect x="10.2" y="0" width="3.4" height="2.6" fill="#788098" opacity="0.35"/><rect x="13.6" y="0" width="3.4" height="2.6" fill="#788098" opacity="0.29"/><rect x="17.0" y="0" width="3.4" height="2.6" fill="#788098" opacity="0.50"/><rect x="20.4" y="0" width="3.4" height="2.6" fill="#949CB4" opacity="0.32"/><rect x="23.8" y="0" width="3.4" height="2.6" fill="#98A4BC" opacity="0.28"/><rect x="27.2" y="0" width="3.4" height="2.6" fill="#A8B4CC" opacity="0.52"/><rect x="30.6" y="0" width="3.4" height="2.6" fill="#A0ACC4" opacity="0.40"/><rect x="34.0" y="0" width="3.4" height="2.6" fill="#C8D4EC" opacity="0.47"/><rect x="0.0" y="2.6" width="3.4" height="4.0" fill="#949CB4" opacity="0.88"/><rect x="3.4" y="2.6" width="3.4" height="4.0" fill="#8894AC" opacity="0.74"/><rect x="6.8" y="2.6" width="3.4" height="4.0" fill="#A0ACC4" opacity="0.75"/><rect x="10.2" y="2.6" width="3.4" height="4.0" fill="#C8D4EC" opacity="0.89"/><rect x="13.6" y="2.6" width="3.4" height="4.0" fill="#A8B4CC" opacity="0.73"/><rect x="17.0" y="2.6" width="3.4" height="4.0" fill="#98A4BC" opacity="0.96"/><rect x="20.4" y="2.6" width="3.4" height="4.0" fill="#C8D4EC" opacity="0.76"/><rect x="23.8" y="2.6" width="3.4" height="4.0" fill="#788098" opacity="0.70"/><rect x="27.2" y="2.6" width="3.4" height="4.0" fill="#A8B4CC" opacity="0.74"/><rect x="30.6" y="2.6" width="3.4" height="4.0" fill="#8894AC" opacity="0.90"/><rect x="34.0" y="2.6" width="3.4" height="4.0" fill="#A8B4CC" opacity="0.97"/><rect x="0.0" y="6.6" width="3.4" height="2.6" fill="#8894AC" opacity="0.33"/><rect x="3.4" y="6.6" width="3.4" height="2.6" fill="#7C849C" opacity="0.47"/><rect x="6.8" y="6.6" width="3.4" height="2.6" fill="#7C849C" opacity="0.31"/><rect x="10.2" y="6.6" width="3.4" height="2.6" fill="#98A4BC" opacity="0.33"/><rect x="13.6" y="6.6" width="3.4" height="2.6" fill="#788098" opacity="0.37"/><rect x="17.0" y="6.6" width="3.4" height="2.6" fill="#C8D4EC" opacity="0.23"/><rect x="20.4" y="6.6" width="3.4" height="2.6" fill="#788098" opacity="0.36"/><rect x="23.8" y="6.6" width="3.4" height="2.6" fill="#A8B4CC" opacity="0.49"/><rect x="27.2" y="6.6" width="3.4" height="2.6" fill="#7C849C" opacity="0.49"/><rect x="30.6" y="6.6" width="3.4" height="2.6" fill="#8894AC" opacity="0.44"/><rect x="34.0" y="6.6" width="3.4" height="2.6" fill="#98A4BC" opacity="0.42"/></svg>
<svg class="a" style="left:543px;top:388.3px" width="78.2" height="9.2" viewBox="0 0 78.2 9.2"><rect x="0.0" y="0" width="3.4" height="2.6" fill="#788098" opacity="0.43"/><rect x="3.4" y="0" width="3.4" height="2.6" fill="#949CB4" opacity="0.42"/><rect x="6.8" y="0" width="3.4" height="2.6" fill="#A8B4CC" opacity="0.54"/><rect x="10.2" y="0" width="3.4" height="2.6" fill="#C8D4EC" opacity="0.45"/><rect x="13.6" y="0" width="3.4" height="2.6" fill="#7C849C" opacity="0.34"/><rect x="17.0" y="0" width="3.4" height="2.6" fill="#788098" opacity="0.41"/><rect x="20.4" y="0" width="3.4" height="2.6" fill="#98A4BC" opacity="0.50"/><rect x="23.8" y="0" width="3.4" height="2.6" fill="#A0ACC4" opacity="0.45"/><rect x="27.2" y="0" width="3.4" height="2.6" fill="#C8D4EC" opacity="0.46"/><rect x="30.6" y="0" width="3.4" height="2.6" fill="#7C849C" opacity="0.45"/><rect x="34.0" y="0" width="3.4" height="2.6" fill="#788098" opacity="0.42"/><rect x="37.4" y="0" width="3.4" height="2.6" fill="#A8B4CC" opacity="0.36"/><rect x="40.8" y="0" width="3.4" height="2.6" fill="#A0ACC4" opacity="0.42"/><rect x="44.2" y="0" width="3.4" height="2.6" fill="#A8B4CC" opacity="0.33"/><rect x="47.6" y="0" width="3.4" height="2.6" fill="#A0ACC4" opacity="0.30"/><rect x="51.0" y="0" width="3.4" height="2.6" fill="#A0ACC4" opacity="0.41"/><rect x="54.4" y="0" width="3.4" height="2.6" fill="#8894AC" opacity="0.32"/><rect x="57.8" y="0" width="3.4" height="2.6" fill="#949CB4" opacity="0.44"/><rect x="61.2" y="0" width="3.4" height="2.6" fill="#A0ACC4" opacity="0.41"/><rect x="64.6" y="0" width="3.4" height="2.6" fill="#949CB4" opacity="0.46"/><rect x="68.0" y="0" width="3.4" height="2.6" fill="#A0ACC4" opacity="0.42"/><rect x="71.4" y="0" width="3.4" height="2.6" fill="#A0ACC4" opacity="0.41"/><rect x="74.8" y="0" width="3.4" height="2.6" fill="#8894AC" opacity="0.47"/><rect x="0.0" y="2.6" width="3.4" height="4.0" fill="#8894AC" opacity="0.96"/><rect x="3.4" y="2.6" width="3.4" height="4.0" fill="#8894AC" opacity="0.94"/><rect x="6.8" y="2.6" width="3.4" height="4.0" fill="#7C849C" opacity="0.96"/><rect x="10.2" y="2.6" width="3.4" height="4.0" fill="#8894AC" opacity="0.89"/><rect x="13.6" y="2.6" width="3.4" height="4.0" fill="#8894AC" opacity="0.84"/><rect x="17.0" y="2.6" width="3.4" height="4.0" fill="#A8B4CC" opacity="0.86"/><rect x="20.4" y="2.6" width="3.4" height="4.0" fill="#A0ACC4" opacity="0.87"/><rect x="23.8" y="2.6" width="3.4" height="4.0" fill="#8894AC" opacity="0.74"/><rect x="27.2" y="2.6" width="3.4" height="4.0" fill="#98A4BC" opacity="0.82"/><rect x="30.6" y="2.6" width="3.4" height="4.0" fill="#98A4BC" opacity="0.81"/><rect x="34.0" y="2.6" width="3.4" height="4.0" fill="#98A4BC" opacity="0.91"/><rect x="37.4" y="2.6" width="3.4" height="4.0" fill="#A0ACC4" opacity="0.84"/><rect x="40.8" y="2.6" width="3.4" height="4.0" fill="#8894AC" opacity="0.91"/><rect x="44.2" y="2.6" width="3.4" height="4.0" fill="#A8B4CC" opacity="0.97"/><rect x="47.6" y="2.6" width="3.4" height="4.0" fill="#8894AC" opacity="0.89"/><rect x="51.0" y="2.6" width="3.4" height="4.0" fill="#A0ACC4" opacity="0.87"/><rect x="54.4" y="2.6" width="3.4" height="4.0" fill="#788098" opacity="0.75"/><rect x="57.8" y="2.6" width="3.4" height="4.0" fill="#788098" opacity="0.94"/><rect x="61.2" y="2.6" width="3.4" height="4.0" fill="#98A4BC" opacity="0.95"/><rect x="64.6" y="2.6" width="3.4" height="4.0" fill="#8894AC" opacity="0.77"/><rect x="68.0" y="2.6" width="3.4" height="4.0" fill="#788098" opacity="0.92"/><rect x="71.4" y="2.6" width="3.4" height="4.0" fill="#98A4BC" opacity="0.94"/><rect x="74.8" y="2.6" width="3.4" height="4.0" fill="#788098" opacity="0.73"/><rect x="0.0" y="6.6" width="3.4" height="2.6" fill="#788098" opacity="0.44"/><rect x="3.4" y="6.6" width="3.4" height="2.6" fill="#8894AC" opacity="0.21"/><rect x="6.8" y="6.6" width="3.4" height="2.6" fill="#A0ACC4" opacity="0.28"/><rect x="10.2" y="6.6" width="3.4" height="2.6" fill="#A0ACC4" opacity="0.41"/><rect x="13.6" y="6.6" width="3.4" height="2.6" fill="#98A4BC" opacity="0.45"/><rect x="17.0" y="6.6" width="3.4" height="2.6" fill="#C8D4EC" opacity="0.23"/><rect x="20.4" y="6.6" width="3.4" height="2.6" fill="#98A4BC" opacity="0.35"/><rect x="23.8" y="6.6" width="3.4" height="2.6" fill="#8894AC" opacity="0.44"/><rect x="27.2" y="6.6" width="3.4" height="2.6" fill="#7C849C" opacity="0.25"/><rect x="30.6" y="6.6" width="3.4" height="2.6" fill="#949CB4" opacity="0.46"/><rect x="34.0" y="6.6" width="3.4" height="2.6" fill="#A8B4CC" opacity="0.45"/><rect x="37.4" y="6.6" width="3.4" height="2.6" fill="#949CB4" opacity="0.36"/><rect x="40.8" y="6.6" width="3.4" height="2.6" fill="#949CB4" opacity="0.48"/><rect x="44.2" y="6.6" width="3.4" height="2.6" fill="#98A4BC" opacity="0.21"/><rect x="47.6" y="6.6" width="3.4" height="2.6" fill="#7C849C" opacity="0.35"/><rect x="51.0" y="6.6" width="3.4" height="2.6" fill="#C8D4EC" opacity="0.46"/><rect x="54.4" y="6.6" width="3.4" height="2.6" fill="#98A4BC" opacity="0.22"/><rect x="57.8" y="6.6" width="3.4" height="2.6" fill="#A8B4CC" opacity="0.45"/><rect x="61.2" y="6.6" width="3.4" height="2.6" fill="#7C849C" opacity="0.41"/><rect x="64.6" y="6.6" width="3.4" height="2.6" fill="#C8D4EC" opacity="0.32"/><rect x="68.0" y="6.6" width="3.4" height="2.6" fill="#8894AC" opacity="0.31"/><rect x="71.4" y="6.6" width="3.4" height="2.6" fill="#A0ACC4" opacity="0.29"/><rect x="74.8" y="6.6" width="3.4" height="2.6" fill="#7C849C" opacity="0.38"/></svg>
<div class="a" style="left:379px;top:396.8px;width:65px;height:1.6px;background:rgba(200,200,210,0.35)"></div>
<div class="a t" style="left:369px;top:387.3px;height:12.5px;line-height:12.5px;font-size:9.2px">04</div>
<div class="a" style="left:369px;top:399.0px;width:258px;height:12.5px;background:#fff"></div>
<div class="a" style="left:369px;top:410.7px;width:258px;height:0.8px;background:#CDD2DC"></div>
<svg class="a" style="left:379px;top:400.8px" width="54.4" height="9.2" viewBox="0 0 54.4 9.2"><rect x="0.0" y="0" width="3.4" height="2.6" fill="#C0C0C4" opacity="0.31"/><rect x="3.4" y="0" width="3.4" height="2.6" fill="#8C8894" opacity="0.47"/><rect x="6.8" y="0" width="3.4" height="2.6" fill="#8C8894" opacity="0.42"/><rect x="10.2" y="0" width="3.4" height="2.6" fill="#B4ACA4" opacity="0.53"/><rect x="13.6" y="0" width="3.4" height="2.6" fill="#8C8894" opacity="0.25"/><rect x="17.0" y="0" width="3.4" height="2.6" fill="#E0E0E4" opacity="0.35"/><rect x="20.4" y="0" width="3.4" height="2.6" fill="#C0C0C4" opacity="0.32"/><rect x="23.8" y="0" width="3.4" height="2.6" fill="#C0C0C4" opacity="0.44"/><rect x="27.2" y="0" width="3.4" height="2.6" fill="#9898A4" opacity="0.33"/><rect x="30.6" y="0" width="3.4" height="2.6" fill="#A4A8B4" opacity="0.27"/><rect x="34.0" y="0" width="3.4" height="2.6" fill="#A4A8B4" opacity="0.36"/><rect x="37.4" y="0" width="3.4" height="2.6" fill="#9898A4" opacity="0.55"/><rect x="40.8" y="0" width="3.4" height="2.6" fill="#C0C0C4" opacity="0.52"/><rect x="44.2" y="0" width="3.4" height="2.6" fill="#A9A4A4" opacity="0.51"/><rect x="47.6" y="0" width="3.4" height="2.6" fill="#B4ACA4" opacity="0.44"/><rect x="51.0" y="0" width="3.4" height="2.6" fill="#A9A4A4" opacity="0.36"/><rect x="0.0" y="2.6" width="3.4" height="4.0" fill="#A4A8B4" opacity="0.94"/><rect x="3.4" y="2.6" width="3.4" height="4.0" fill="#D0C8C0" opacity="0.96"/><rect x="6.8" y="2.6" width="3.4" height="4.0" fill="#9898A4" opacity="0.90"/><rect x="10.2" y="2.6" width="3.4" height="4.0" fill="#A4A8B4" opacity="0.99"/><rect x="13.6" y="2.6" width="3.4" height="4.0" fill="#8C8894" opacity="0.92"/><rect x="17.0" y="2.6" width="3.4" height="4.0" fill="#D0C8C0" opacity="0.81"/><rect x="20.4" y="2.6" width="3.4" height="4.0" fill="#B4ACA4" opacity="0.80"/><rect x="23.8" y="2.6" width="3.4" height="4.0" fill="#8C8894" opacity="0.90"/><rect x="27.2" y="2.6" width="3.4" height="4.0" fill="#E0E0E4" opacity="0.85"/><rect x="30.6" y="2.6" width="3.4" height="4.0" fill="#D0C8C0" opacity="0.94"/><rect x="34.0" y="2.6" width="3.4" height="4.0" fill="#8C8894" opacity="0.75"/><rect x="37.4" y="2.6" width="3.4" height="4.0" fill="#D0C8C0" opacity="0.70"/><rect x="40.8" y="2.6" width="3.4" height="4.0" fill="#E0E0E4" opacity="0.82"/><rect x="44.2" y="2.6" width="3.4" height="4.0" fill="#B4ACA4" opacity="0.87"/><rect x="47.6" y="2.6" width="3.4" height="4.0" fill="#A4A8B4" opacity="0.98"/><rect x="51.0" y="2.6" width="3.4" height="4.0" fill="#A9A4A4" opacity="0.74"/><rect x="0.0" y="6.6" width="3.4" height="2.6" fill="#A4A8B4" opacity="0.28"/><rect x="3.4" y="6.6" width="3.4" height="2.6" fill="#8C8894" opacity="0.22"/><rect x="6.8" y="6.6" width="3.4" height="2.6" fill="#D0C8C0" opacity="0.38"/><rect x="10.2" y="6.6" width="3.4" height="2.6" fill="#A9A4A4" opacity="0.38"/><rect x="13.6" y="6.6" width="3.4" height="2.6" fill="#A4A8B4" opacity="0.37"/><rect x="17.0" y="6.6" width="3.4" height="2.6" fill="#E0E0E4" opacity="0.31"/><rect x="20.4" y="6.6" width="3.4" height="2.6" fill="#B4ACA4" opacity="0.42"/><rect x="23.8" y="6.6" width="3.4" height="2.6" fill="#A9A4A4" opacity="0.45"/><rect x="27.2" y="6.6" width="3.4" height="2.6" fill="#8C8894" opacity="0.47"/><rect x="30.6" y="6.6" width="3.4" height="2.6" fill="#A4A8B4" opacity="0.47"/><rect x="34.0" y="6.6" width="3.4" height="2.6" fill="#C0C0C4" opacity="0.43"/><rect x="37.4" y="6.6" width="3.4" height="2.6" fill="#A4A8B4" opacity="0.27"/><rect x="40.8" y="6.6" width="3.4" height="2.6" fill="#C0C0C4" opacity="0.27"/><rect x="44.2" y="6.6" width="3.4" height="2.6" fill="#B4ACA4" opacity="0.33"/><rect x="47.6" y="6.6" width="3.4" height="2.6" fill="#A4A8B4" opacity="0.46"/><rect x="51.0" y="6.6" width="3.4" height="2.6" fill="#A9A4A4" opacity="0.26"/></svg>
<svg class="a" style="left:456.5px;top:400.8px" width="34.0" height="9.2" viewBox="0 0 34.0 9.2"><rect x="0.0" y="0" width="3.4" height="2.6" fill="#C0C0C4" opacity="0.54"/><rect x="3.4" y="0" width="3.4" height="2.6" fill="#C0C0C4" opacity="0.27"/><rect x="6.8" y="0" width="3.4" height="2.6" fill="#8C8894" opacity="0.47"/><rect x="10.2" y="0" width="3.4" height="2.6" fill="#C0C0C4" opacity="0.31"/><rect x="13.6" y="0" width="3.4" height="2.6" fill="#C0C0C4" opacity="0.44"/><rect x="17.0" y="0" width="3.4" height="2.6" fill="#C0C0C4" opacity="0.31"/><rect x="20.4" y="0" width="3.4" height="2.6" fill="#8C8894" opacity="0.51"/><rect x="23.8" y="0" width="3.4" height="2.6" fill="#C0C0C4" opacity="0.44"/><rect x="27.2" y="0" width="3.4" height="2.6" fill="#B4ACA4" opacity="0.43"/><rect x="30.6" y="0" width="3.4" height="2.6" fill="#8C8894" opacity="0.30"/><rect x="0.0" y="2.6" width="3.4" height="4.0" fill="#B4ACA4" opacity="0.94"/><rect x="3.4" y="2.6" width="3.4" height="4.0" fill="#A9A4A4" opacity="0.89"/><rect x="6.8" y="2.6" width="3.4" height="4.0" fill="#8C8894" opacity="0.93"/><rect x="10.2" y="2.6" width="3.4" height="4.0" fill="#B4ACA4" opacity="0.78"/><rect x="13.6" y="2.6" width="3.4" height="4.0" fill="#E0E0E4" opacity="0.96"/><rect x="17.0" y="2.6" width="3.4" height="4.0" fill="#C0C0C4" opacity="0.98"/><rect x="20.4" y="2.6" width="3.4" height="4.0" fill="#8C8894" opacity="0.72"/><rect x="23.8" y="2.6" width="3.4" height="4.0" fill="#8C8894" opacity="0.75"/><rect x="27.2" y="2.6" width="3.4" height="4.0" fill="#C0C0C4" opacity="0.75"/><rect x="30.6" y="2.6" width="3.4" height="4.0" fill="#9898A4" opacity="0.86"/><rect x="0.0" y="6.6" width="3.4" height="2.6" fill="#A9A4A4" opacity="0.31"/><rect x="3.4" y="6.6" width="3.4" height="2.6" fill="#8C8894" opacity="0.33"/><rect x="6.8" y="6.6" width="3.4" height="2.6" fill="#9898A4" opacity="0.40"/><rect x="10.2" y="6.6" width="3.4" height="2.6" fill="#8C8894" opacity="0.27"/><rect x="13.6" y="6.6" width="3.4" height="2.6" fill="#A4A8B4" opacity="0.44"/><rect x="17.0" y="6.6" width="3.4" height="2.6" fill="#E0E0E4" opacity="0.43"/><rect x="20.4" y="6.6" width="3.4" height="2.6" fill="#A4A8B4" opacity="0.40"/><rect x="23.8" y="6.6" width="3.4" height="2.6" fill="#E0E0E4" opacity="0.37"/><rect x="27.2" y="6.6" width="3.4" height="2.6" fill="#8C8894" opacity="0.36"/><rect x="30.6" y="6.6" width="3.4" height="2.6" fill="#A4A8B4" opacity="0.24"/></svg>
<svg class="a" style="left:543px;top:400.8px" width="81.6" height="9.2" viewBox="0 0 81.6 9.2"><rect x="0.0" y="0" width="3.4" height="2.6" fill="#C0C0C4" opacity="0.42"/><rect x="3.4" y="0" width="3.4" height="2.6" fill="#A9A4A4" opacity="0.45"/><rect x="6.8" y="0" width="3.4" height="2.6" fill="#8C8894" opacity="0.30"/><rect x="10.2" y="0" width="3.4" height="2.6" fill="#D0C8C0" opacity="0.37"/><rect x="13.6" y="0" width="3.4" height="2.6" fill="#A9A4A4" opacity="0.53"/><rect x="17.0" y="0" width="3.4" height="2.6" fill="#9898A4" opacity="0.29"/><rect x="20.4" y="0" width="3.4" height="2.6" fill="#D0C8C0" opacity="0.42"/><rect x="23.8" y="0" width="3.4" height="2.6" fill="#9898A4" opacity="0.33"/><rect x="27.2" y="0" width="3.4" height="2.6" fill="#8C8894" opacity="0.47"/><rect x="30.6" y="0" width="3.4" height="2.6" fill="#9898A4" opacity="0.51"/><rect x="34.0" y="0" width="3.4" height="2.6" fill="#9898A4" opacity="0.41"/><rect x="37.4" y="0" width="3.4" height="2.6" fill="#8C8894" opacity="0.48"/><rect x="40.8" y="0" width="3.4" height="2.6" fill="#D0C8C0" opacity="0.38"/><rect x="44.2" y="0" width="3.4" height="2.6" fill="#E0E0E4" opacity="0.31"/><rect x="47.6" y="0" width="3.4" height="2.6" fill="#8C8894" opacity="0.52"/><rect x="51.0" y="0" width="3.4" height="2.6" fill="#B4ACA4" opacity="0.39"/><rect x="54.4" y="0" width="3.4" height="2.6" fill="#8C8894" opacity="0.49"/><rect x="57.8" y="0" width="3.4" height="2.6" fill="#C0C0C4" opacity="0.28"/><rect x="61.2" y="0" width="3.4" height="2.6" fill="#C0C0C4" opacity="0.27"/><rect x="64.6" y="0" width="3.4" height="2.6" fill="#B4ACA4" opacity="0.45"/><rect x="68.0" y="0" width="3.4" height="2.6" fill="#8C8894" opacity="0.27"/><rect x="71.4" y="0" width="3.4" height="2.6" fill="#B4ACA4" opacity="0.37"/><rect x="74.8" y="0" width="3.4" height="2.6" fill="#B4ACA4" opacity="0.53"/><rect x="78.2" y="0" width="3.4" height="2.6" fill="#D0C8C0" opacity="0.26"/><rect x="0.0" y="2.6" width="3.4" height="4.0" fill="#C0C0C4" opacity="0.78"/><rect x="3.4" y="2.6" width="3.4" height="4.0" fill="#B4ACA4" opacity="0.77"/><rect x="6.8" y="2.6" width="3.4" height="4.0" fill="#8C8894" opacity="0.76"/><rect x="10.2" y="2.6" width="3.4" height="4.0" fill="#B4ACA4" opacity="0.89"/><rect x="13.6" y="2.6" width="3.4" height="4.0" fill="#A4A8B4" opacity="0.96"/><rect x="17.0" y="2.6" width="3.4" height="4.0" fill="#E0E0E4" opacity="0.76"/><rect x="20.4" y="2.6" width="3.4" height="4.0" fill="#9898A4" opacity="0.84"/><rect x="23.8" y="2.6" width="3.4" height="4.0" fill="#A4A8B4" opacity="0.99"/><rect x="27.2" y="2.6" width="3.4" height="4.0" fill="#9898A4" opacity="0.95"/><rect x="30.6" y="2.6" width="3.4" height="4.0" fill="#A4A8B4" opacity="0.73"/><rect x="34.0" y="2.6" width="3.4" height="4.0" fill="#C0C0C4" opacity="0.85"/><rect x="37.4" y="2.6" width="3.4" height="4.0" fill="#D0C8C0" opacity="0.75"/><rect x="40.8" y="2.6" width="3.4" height="4.0" fill="#E0E0E4" opacity="0.76"/><rect x="44.2" y="2.6" width="3.4" height="4.0" fill="#C0C0C4" opacity="0.96"/><rect x="47.6" y="2.6" width="3.4" height="4.0" fill="#D0C8C0" opacity="0.96"/><rect x="51.0" y="2.6" width="3.4" height="4.0" fill="#8C8894" opacity="0.71"/><rect x="54.4" y="2.6" width="3.4" height="4.0" fill="#E0E0E4" opacity="0.75"/><rect x="57.8" y="2.6" width="3.4" height="4.0" fill="#9898A4" opacity="1.00"/><rect x="61.2" y="2.6" width="3.4" height="4.0" fill="#A4A8B4" opacity="0.91"/><rect x="64.6" y="2.6" width="3.4" height="4.0" fill="#A9A4A4" opacity="0.75"/><rect x="68.0" y="2.6" width="3.4" height="4.0" fill="#C0C0C4" opacity="0.74"/><rect x="71.4" y="2.6" width="3.4" height="4.0" fill="#A4A8B4" opacity="0.75"/><rect x="74.8" y="2.6" width="3.4" height="4.0" fill="#8C8894" opacity="0.73"/><rect x="78.2" y="2.6" width="3.4" height="4.0" fill="#9898A4" opacity="0.84"/><rect x="0.0" y="6.6" width="3.4" height="2.6" fill="#B4ACA4" opacity="0.23"/><rect x="3.4" y="6.6" width="3.4" height="2.6" fill="#8C8894" opacity="0.39"/><rect x="6.8" y="6.6" width="3.4" height="2.6" fill="#B4ACA4" opacity="0.46"/><rect x="10.2" y="6.6" width="3.4" height="2.6" fill="#C0C0C4" opacity="0.38"/><rect x="13.6" y="6.6" width="3.4" height="2.6" fill="#D0C8C0" opacity="0.44"/><rect x="17.0" y="6.6" width="3.4" height="2.6" fill="#C0C0C4" opacity="0.21"/><rect x="20.4" y="6.6" width="3.4" height="2.6" fill="#D0C8C0" opacity="0.37"/><rect x="23.8" y="6.6" width="3.4" height="2.6" fill="#A9A4A4" opacity="0.42"/><rect x="27.2" y="6.6" width="3.4" height="2.6" fill="#C0C0C4" opacity="0.50"/><rect x="30.6" y="6.6" width="3.4" height="2.6" fill="#8C8894" opacity="0.22"/><rect x="34.0" y="6.6" width="3.4" height="2.6" fill="#A9A4A4" opacity="0.24"/><rect x="37.4" y="6.6" width="3.4" height="2.6" fill="#E0E0E4" opacity="0.49"/><rect x="40.8" y="6.6" width="3.4" height="2.6" fill="#B4ACA4" opacity="0.20"/><rect x="44.2" y="6.6" width="3.4" height="2.6" fill="#D0C8C0" opacity="0.41"/><rect x="47.6" y="6.6" width="3.4" height="2.6" fill="#9898A4" opacity="0.39"/><rect x="51.0" y="6.6" width="3.4" height="2.6" fill="#A9A4A4" opacity="0.36"/><rect x="54.4" y="6.6" width="3.4" height="2.6" fill="#E0E0E4" opacity="0.49"/><rect x="57.8" y="6.6" width="3.4" height="2.6" fill="#A9A4A4" opacity="0.30"/><rect x="61.2" y="6.6" width="3.4" height="2.6" fill="#D0C8C0" opacity="0.46"/><rect x="64.6" y="6.6" width="3.4" height="2.6" fill="#D0C8C0" opacity="0.42"/><rect x="68.0" y="6.6" width="3.4" height="2.6" fill="#A4A8B4" opacity="0.41"/><rect x="71.4" y="6.6" width="3.4" height="2.6" fill="#C0C0C4" opacity="0.28"/><rect x="74.8" y="6.6" width="3.4" height="2.6" fill="#A9A4A4" opacity="0.49"/><rect x="78.2" y="6.6" width="3.4" height="2.6" fill="#D0C8C0" opacity="0.35"/></svg>
<div class="a" style="left:379px;top:409.3px;width:65px;height:1.6px;background:rgba(200,200,210,0.35)"></div>
<div class="a t" style="left:369px;top:399.8px;height:12.5px;line-height:12.5px;font-size:9.2px">04</div>
<div class="a" style="left:369px;top:411.5px;width:258px;height:12.5px;background:#D4E2FA"></div>
<div class="a" style="left:369px;top:423.2px;width:258px;height:0.8px;background:#CDD2DC"></div>
<svg class="a" style="left:379px;top:413.3px" width="54.4" height="9.2" viewBox="0 0 54.4 9.2"><rect x="0.0" y="0" width="3.4" height="2.6" fill="#A8B4CC" opacity="0.49"/><rect x="3.4" y="0" width="3.4" height="2.6" fill="#788098" opacity="0.33"/><rect x="6.8" y="0" width="3.4" height="2.6" fill="#788098" opacity="0.46"/><rect x="10.2" y="0" width="3.4" height="2.6" fill="#C8D4EC" opacity="0.41"/><rect x="13.6" y="0" width="3.4" height="2.6" fill="#788098" opacity="0.46"/><rect x="17.0" y="0" width="3.4" height="2.6" fill="#949CB4" opacity="0.37"/><rect x="20.4" y="0" width="3.4" height="2.6" fill="#788098" opacity="0.41"/><rect x="23.8" y="0" width="3.4" height="2.6" fill="#A8B4CC" opacity="0.54"/><rect x="27.2" y="0" width="3.4" height="2.6" fill="#A8B4CC" opacity="0.48"/><rect x="30.6" y="0" width="3.4" height="2.6" fill="#A8B4CC" opacity="0.49"/><rect x="34.0" y="0" width="3.4" height="2.6" fill="#98A4BC" opacity="0.32"/><rect x="37.4" y="0" width="3.4" height="2.6" fill="#949CB4" opacity="0.46"/><rect x="40.8" y="0" width="3.4" height="2.6" fill="#A8B4CC" opacity="0.55"/><rect x="44.2" y="0" width="3.4" height="2.6" fill="#A0ACC4" opacity="0.45"/><rect x="47.6" y="0" width="3.4" height="2.6" fill="#8894AC" opacity="0.50"/><rect x="51.0" y="0" width="3.4" height="2.6" fill="#98A4BC" opacity="0.52"/><rect x="0.0" y="2.6" width="3.4" height="4.0" fill="#98A4BC" opacity="0.82"/><rect x="3.4" y="2.6" width="3.4" height="4.0" fill="#788098" opacity="0.91"/><rect x="6.8" y="2.6" width="3.4" height="4.0" fill="#C8D4EC" opacity="0.86"/><rect x="10.2" y="2.6" width="3.4" height="4.0" fill="#788098" opacity="0.84"/><rect x="13.6" y="2.6" width="3.4" height="4.0" fill="#98A4BC" opacity="0.84"/><rect x="17.0" y="2.6" width="3.4" height="4.0" fill="#C8D4EC" opacity="0.85"/><rect x="20.4" y="2.6" width="3.4" height="4.0" fill="#A8B4CC" opacity="0.77"/><rect x="23.8" y="2.6" width="3.4" height="4.0" fill="#A8B4CC" opacity="0.81"/><rect x="27.2" y="2.6" width="3.4" height="4.0" fill="#8894AC" opacity="0.82"/><rect x="30.6" y="2.6" width="3.4" height="4.0" fill="#949CB4" opacity="0.88"/><rect x="34.0" y="2.6" width="3.4" height="4.0" fill="#788098" opacity="0.72"/><rect x="37.4" y="2.6" width="3.4" height="4.0" fill="#A0ACC4" opacity="0.98"/><rect x="40.8" y="2.6" width="3.4" height="4.0" fill="#949CB4" opacity="0.78"/><rect x="44.2" y="2.6" width="3.4" height="4.0" fill="#C8D4EC" opacity="0.96"/><rect x="47.6" y="2.6" width="3.4" height="4.0" fill="#788098" opacity="0.86"/><rect x="51.0" y="2.6" width="3.4" height="4.0" fill="#C8D4EC" opacity="0.87"/><rect x="0.0" y="6.6" width="3.4" height="2.6" fill="#7C849C" opacity="0.22"/><rect x="3.4" y="6.6" width="3.4" height="2.6" fill="#788098" opacity="0.36"/><rect x="6.8" y="6.6" width="3.4" height="2.6" fill="#7C849C" opacity="0.44"/><rect x="10.2" y="6.6" width="3.4" height="2.6" fill="#A0ACC4" opacity="0.40"/><rect x="13.6" y="6.6" width="3.4" height="2.6" fill="#7C849C" opacity="0.45"/><rect x="17.0" y="6.6" width="3.4" height="2.6" fill="#C8D4EC" opacity="0.25"/><rect x="20.4" y="6.6" width="3.4" height="2.6" fill="#98A4BC" opacity="0.30"/><rect x="23.8" y="6.6" width="3.4" height="2.6" fill="#788098" opacity="0.45"/><rect x="27.2" y="6.6" width="3.4" height="2.6" fill="#A8B4CC" opacity="0.24"/><rect x="30.6" y="6.6" width="3.4" height="2.6" fill="#7C849C" opacity="0.41"/><rect x="34.0" y="6.6" width="3.4" height="2.6" fill="#A8B4CC" opacity="0.23"/><rect x="37.4" y="6.6" width="3.4" height="2.6" fill="#788098" opacity="0.40"/><rect x="40.8" y="6.6" width="3.4" height="2.6" fill="#949CB4" opacity="0.34"/><rect x="44.2" y="6.6" width="3.4" height="2.6" fill="#8894AC" opacity="0.28"/><rect x="47.6" y="6.6" width="3.4" height="2.6" fill="#949CB4" opacity="0.50"/><rect x="51.0" y="6.6" width="3.4" height="2.6" fill="#8894AC" opacity="0.33"/></svg>
<svg class="a" style="left:456.5px;top:413.3px" width="34.0" height="9.2" viewBox="0 0 34.0 9.2"><rect x="0.0" y="0" width="3.4" height="2.6" fill="#C8D4EC" opacity="0.47"/><rect x="3.4" y="0" width="3.4" height="2.6" fill="#7C849C" opacity="0.48"/><rect x="6.8" y="0" width="3.4" height="2.6" fill="#7C849C" opacity="0.25"/><rect x="10.2" y="0" width="3.4" height="2.6" fill="#7C849C" opacity="0.36"/><rect x="13.6" y="0" width="3.4" height="2.6" fill="#A0ACC4" opacity="0.44"/><rect x="17.0" y="0" width="3.4" height="2.6" fill="#788098" opacity="0.49"/><rect x="20.4" y="0" width="3.4" height="2.6" fill="#949CB4" opacity="0.26"/><rect x="23.8" y="0" width="3.4" height="2.6" fill="#A0ACC4" opacity="0.25"/><rect x="27.2" y="0" width="3.4" height="2.6" fill="#949CB4" opacity="0.27"/><rect x="30.6" y="0" width="3.4" height="2.6" fill="#7C849C" opacity="0.34"/><rect x="0.0" y="2.6" width="3.4" height="4.0" fill="#949CB4" opacity="0.98"/><rect x="3.4" y="2.6" width="3.4" height="4.0" fill="#949CB4" opacity="0.77"/><rect x="6.8" y="2.6" width="3.4" height="4.0" fill="#C8D4EC" opacity="0.73"/><rect x="10.2" y="2.6" width="3.4" height="4.0" fill="#C8D4EC" opacity="0.96"/><rect x="13.6" y="2.6" width="3.4" height="4.0" fill="#A0ACC4" opacity="0.74"/><rect x="17.0" y="2.6" width="3.4" height="4.0" fill="#949CB4" opacity="0.89"/><rect x="20.4" y="2.6" width="3.4" height="4.0" fill="#788098" opacity="0.98"/><rect x="23.8" y="2.6" width="3.4" height="4.0" fill="#C8D4EC" opacity="0.81"/><rect x="27.2" y="2.6" width="3.4" height="4.0" fill="#98A4BC" opacity="0.91"/><rect x="30.6" y="2.6" width="3.4" height="4.0" fill="#949CB4" opacity="0.99"/><rect x="0.0" y="6.6" width="3.4" height="2.6" fill="#A8B4CC" opacity="0.39"/><rect x="3.4" y="6.6" width="3.4" height="2.6" fill="#949CB4" opacity="0.31"/><rect x="6.8" y="6.6" width="3.4" height="2.6" fill="#A8B4CC" opacity="0.45"/><rect x="10.2" y="6.6" width="3.4" height="2.6" fill="#7C849C" opacity="0.48"/><rect x="13.6" y="6.6" width="3.4" height="2.6" fill="#A0ACC4" opacity="0.49"/><rect x="17.0" y="6.6" width="3.4" height="2.6" fill="#788098" opacity="0.22"/><rect x="20.4" y="6.6" width="3.4" height="2.6" fill="#A0ACC4" opacity="0.30"/><rect x="23.8" y="6.6" width="3.4" height="2.6" fill="#8894AC" opacity="0.22"/><rect x="27.2" y="6.6" width="3.4" height="2.6" fill="#C8D4EC" opacity="0.31"/><rect x="30.6" y="6.6" width="3.4" height="2.6" fill="#A8B4CC" opacity="0.35"/></svg>
<svg class="a" style="left:543px;top:413.3px" width="71.4" height="9.2" viewBox="0 0 71.4 9.2"><rect x="0.0" y="0" width="3.4" height="2.6" fill="#98A4BC" opacity="0.28"/><rect x="3.4" y="0" width="3.4" height="2.6" fill="#C8D4EC" opacity="0.53"/><rect x="6.8" y="0" width="3.4" height="2.6" fill="#A8B4CC" opacity="0.37"/><rect x="10.2" y="0" width="3.4" height="2.6" fill="#C8D4EC" opacity="0.30"/><rect x="13.6" y="0" width="3.4" height="2.6" fill="#8894AC" opacity="0.38"/><rect x="17.0" y="0" width="3.4" height="2.6" fill="#C8D4EC" opacity="0.29"/><rect x="20.4" y="0" width="3.4" height="2.6" fill="#98A4BC" opacity="0.45"/><rect x="23.8" y="0" width="3.4" height="2.6" fill="#A0ACC4" opacity="0.37"/><rect x="27.2" y="0" width="3.4" height="2.6" fill="#98A4BC" opacity="0.53"/><rect x="30.6" y="0" width="3.4" height="2.6" fill="#949CB4" opacity="0.42"/><rect x="34.0" y="0" width="3.4" height="2.6" fill="#A8B4CC" opacity="0.48"/><rect x="37.4" y="0" width="3.4" height="2.6" fill="#8894AC" opacity="0.28"/><rect x="40.8" y="0" width="3.4" height="2.6" fill="#8894AC" opacity="0.42"/><rect x="44.2" y="0" width="3.4" height="2.6" fill="#98A4BC" opacity="0.28"/><rect x="47.6" y="0" width="3.4" height="2.6" fill="#8894AC" opacity="0.50"/><rect x="51.0" y="0" width="3.4" height="2.6" fill="#A0ACC4" opacity="0.42"/><rect x="54.4" y="0" width="3.4" height="2.6" fill="#98A4BC" opacity="0.50"/><rect x="57.8" y="0" width="3.4" height="2.6" fill="#A0ACC4" opacity="0.46"/><rect x="61.2" y="0" width="3.4" height="2.6" fill="#C8D4EC" opacity="0.51"/><rect x="64.6" y="0" width="3.4" height="2.6" fill="#A8B4CC" opacity="0.50"/><rect x="68.0" y="0" width="3.4" height="2.6" fill="#7C849C" opacity="0.55"/><rect x="0.0" y="2.6" width="3.4" height="4.0" fill="#98A4BC" opacity="0.96"/><rect x="3.4" y="2.6" width="3.4" height="4.0" fill="#7C849C" opacity="0.80"/><rect x="6.8" y="2.6" width="3.4" height="4.0" fill="#A0ACC4" opacity="0.86"/><rect x="10.2" y="2.6" width="3.4" height="4.0" fill="#98A4BC" opacity="0.76"/><rect x="13.6" y="2.6" width="3.4" height="4.0" fill="#949CB4" opacity="0.86"/><rect x="17.0" y="2.6" width="3.4" height="4.0" fill="#8894AC" opacity="0.79"/><rect x="20.4" y="2.6" width="3.4" height="4.0" fill="#949CB4" opacity="0.90"/><rect x="23.8" y="2.6" width="3.4" height="4.0" fill="#949CB4" opacity="0.87"/><rect x="27.2" y="2.6" width="3.4" height="4.0" fill="#A8B4CC" opacity="0.90"/><rect x="30.6" y="2.6" width="3.4" height="4.0" fill="#949CB4" opacity="0.79"/><rect x="34.0" y="2.6" width="3.4" height="4.0" fill="#A8B4CC" opacity="0.94"/><rect x="37.4" y="2.6" width="3.4" height="4.0" fill="#949CB4" opacity="0.79"/><rect x="40.8" y="2.6" width="3.4" height="4.0" fill="#7C849C" opacity="0.72"/><rect x="44.2" y="2.6" width="3.4" height="4.0" fill="#788098" opacity="0.98"/><rect x="47.6" y="2.6" width="3.4" height="4.0" fill="#C8D4EC" opacity="0.91"/><rect x="51.0" y="2.6" width="3.4" height="4.0" fill="#7C849C" opacity="0.81"/><rect x="54.4" y="2.6" width="3.4" height="4.0" fill="#788098" opacity="0.76"/><rect x="57.8" y="2.6" width="3.4" height="4.0" fill="#98A4BC" opacity="0.92"/><rect x="61.2" y="2.6" width="3.4" height="4.0" fill="#98A4BC" opacity="0.86"/><rect x="64.6" y="2.6" width="3.4" height="4.0" fill="#A8B4CC" opacity="0.99"/><rect x="68.0" y="2.6" width="3.4" height="4.0" fill="#788098" opacity="0.71"/><rect x="0.0" y="6.6" width="3.4" height="2.6" fill="#A0ACC4" opacity="0.44"/><rect x="3.4" y="6.6" width="3.4" height="2.6" fill="#949CB4" opacity="0.26"/><rect x="6.8" y="6.6" width="3.4" height="2.6" fill="#A0ACC4" opacity="0.44"/><rect x="10.2" y="6.6" width="3.4" height="2.6" fill="#C8D4EC" opacity="0.32"/><rect x="13.6" y="6.6" width="3.4" height="2.6" fill="#C8D4EC" opacity="0.26"/><rect x="17.0" y="6.6" width="3.4" height="2.6" fill="#A0ACC4" opacity="0.22"/><rect x="20.4" y="6.6" width="3.4" height="2.6" fill="#A8B4CC" opacity="0.46"/><rect x="23.8" y="6.6" width="3.4" height="2.6" fill="#8894AC" opacity="0.21"/><rect x="27.2" y="6.6" width="3.4" height="2.6" fill="#8894AC" opacity="0.44"/><rect x="30.6" y="6.6" width="3.4" height="2.6" fill="#C8D4EC" opacity="0.25"/><rect x="34.0" y="6.6" width="3.4" height="2.6" fill="#7C849C" opacity="0.35"/><rect x="37.4" y="6.6" width="3.4" height="2.6" fill="#949CB4" opacity="0.44"/><rect x="40.8" y="6.6" width="3.4" height="2.6" fill="#7C849C" opacity="0.24"/><rect x="44.2" y="6.6" width="3.4" height="2.6" fill="#A0ACC4" opacity="0.35"/><rect x="47.6" y="6.6" width="3.4" height="2.6" fill="#C8D4EC" opacity="0.23"/><rect x="51.0" y="6.6" width="3.4" height="2.6" fill="#8894AC" opacity="0.49"/><rect x="54.4" y="6.6" width="3.4" height="2.6" fill="#A8B4CC" opacity="0.27"/><rect x="57.8" y="6.6" width="3.4" height="2.6" fill="#949CB4" opacity="0.41"/><rect x="61.2" y="6.6" width="3.4" height="2.6" fill="#C8D4EC" opacity="0.41"/><rect x="64.6" y="6.6" width="3.4" height="2.6" fill="#7C849C" opacity="0.46"/><rect x="68.0" y="6.6" width="3.4" height="2.6" fill="#7C849C" opacity="0.21"/></svg>
<div class="a" style="left:379px;top:421.8px;width:65px;height:1.6px;background:rgba(200,200,210,0.35)"></div>
<div class="a t" style="left:369px;top:412.3px;height:12.5px;line-height:12.5px;font-size:9.2px">04</div>
<div class="a" style="left:455px;top:274px;width:1px;height:150px;background:#C8C8D0"></div>
<div class="a" style="left:541.5px;top:274px;width:1px;height:150px;background:#C8C8D0"></div>
<div class="a" style="left:628px;top:274px;width:12px;height:150px;background:#F6F6FA"></div>
<div class="a" style="left:630px;top:275px;width:10px;height:12px;background:linear-gradient(90deg,#C8D6F0,#B4C8EE);border:1px solid #A4B8E0;border-radius:2px"></div>
<svg class="a" style="left:631.5px;top:278px" width="7" height="6" viewBox="0 0 7 6"><path d="M1 4.5 L3.5 2 L6 4.5" stroke="#2b4f86" stroke-width="1.2" fill="none"/></svg>
<div class="a" style="left:630px;top:287px;width:10px;height:118px;background:linear-gradient(90deg,#B0C4EE,#CCDAF6 55%,#A8BEEA);border:1px solid #A0B4DE;border-radius:2px"></div>
<div class="a" style="left:632.8px;top:342.5px;width:4.4px;height:5.5px;background:#DCE6FA;border:0.6px solid #B8C8EC"></div>
<div class="a" style="left:630px;top:415px;width:10px;height:11px;background:linear-gradient(90deg,#C8D6F0,#B4C8EE);border:1px solid #A4B8E0;border-radius:2px"></div>
<svg class="a" style="left:631.5px;top:418px" width="7" height="6" viewBox="0 0 7 6"><path d="M1 1.5 L3.5 4 L6 1.5" stroke="#2b4f86" stroke-width="1.2" fill="none"/></svg>
<div class="a t" style="left:368px;top:432.7px;height:12px;line-height:12px;">Status</div>
<div class="a" style="left:393px;top:432.3px;width:248px;height:11.2px;background:#F6F6FC;border:1px solid #C6CAD4"></div>
<div class="a t r" style="right:493px;top:433.0px;height:11px;line-height:11px;text-align:right;font-size:9.2px">Zeilen: 13</div>
</body></html>
